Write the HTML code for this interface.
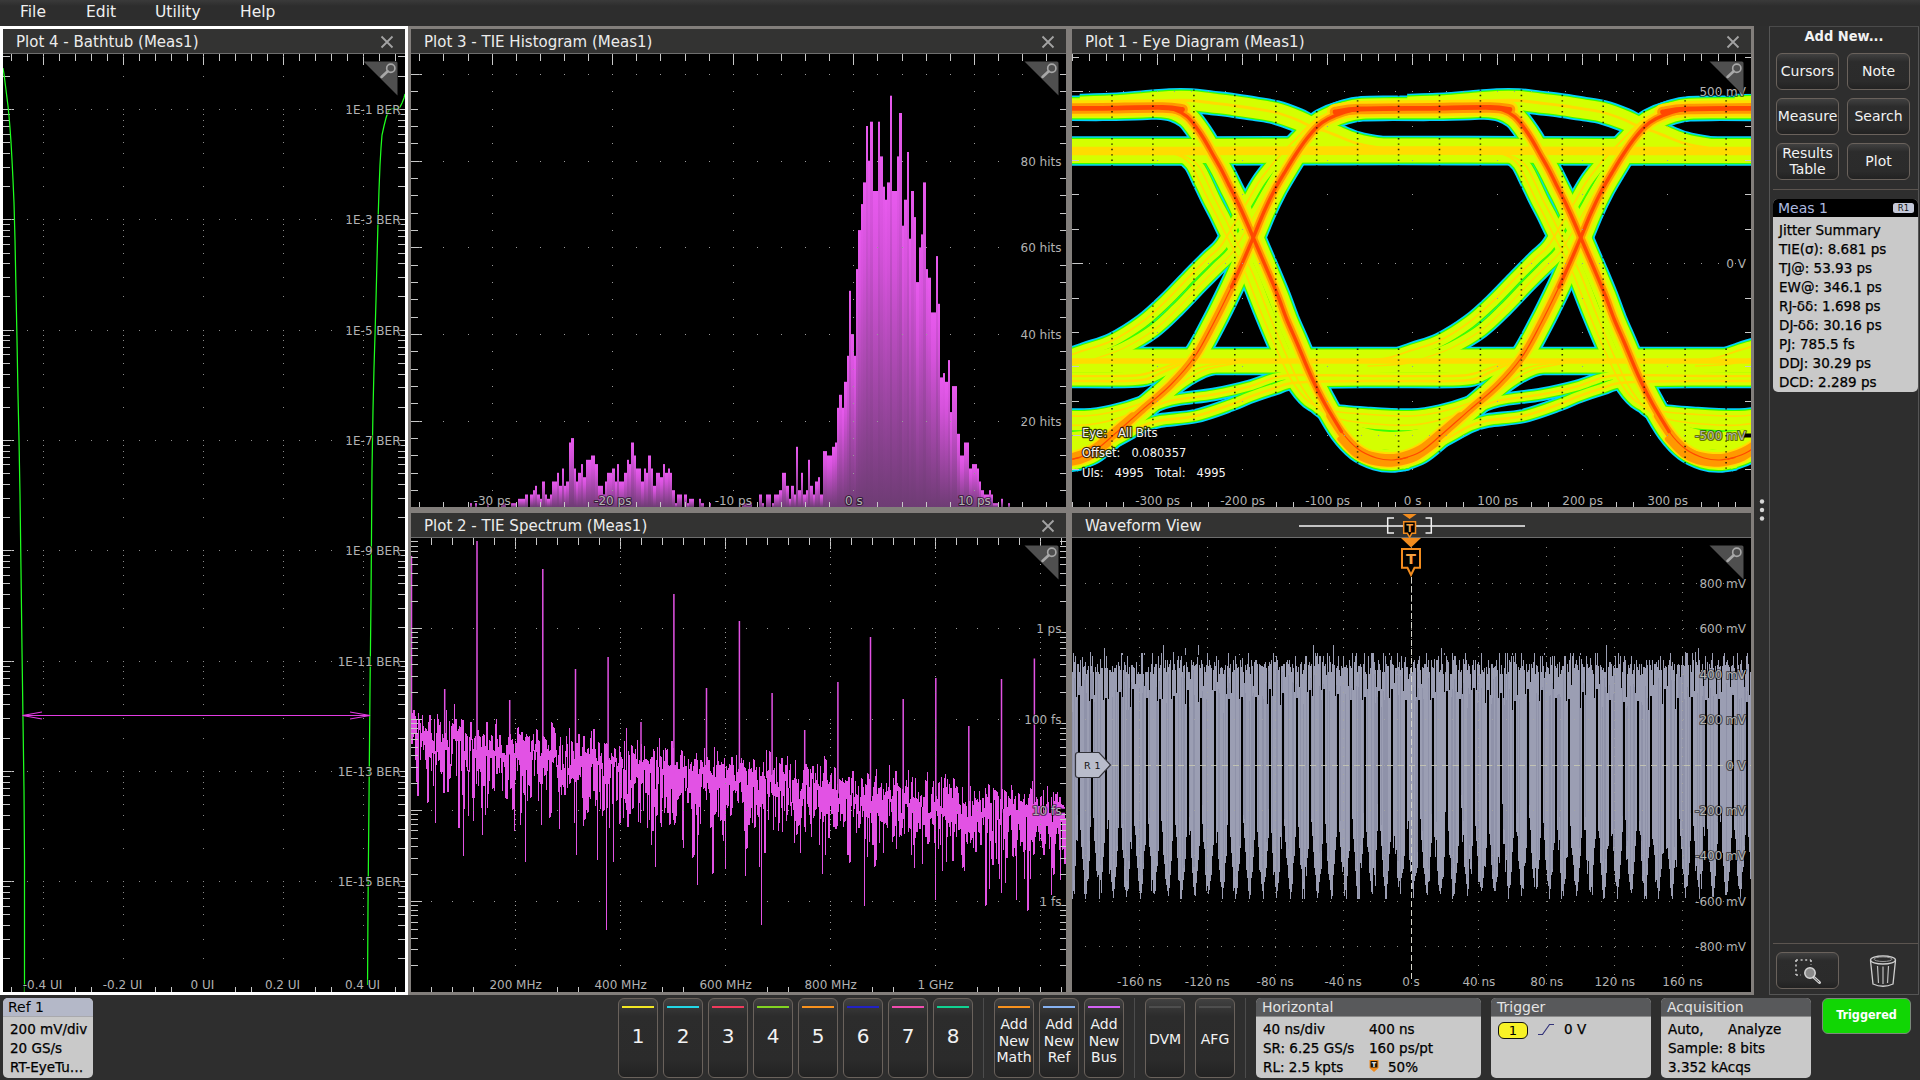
<!DOCTYPE html><html><head><meta charset="utf-8"><title>Scope</title><style>
*{box-sizing:border-box;margin:0;padding:0}
html,body{width:1920px;height:1080px;overflow:hidden;background:#2e2e2e;font-family:"DejaVu Sans","Liberation Sans",sans-serif;color:#e6e6e6}
.abs{position:absolute}
#menubar{position:absolute;left:0;top:0;width:1920px;height:26px;background:linear-gradient(#3a3a3a 0,#2d2d2d 6px,#2d2d2d 100%)}
#menubar span{position:absolute;top:2px;font-size:15.500px;line-height:20px;color:#f0f0f0}
.panel{position:absolute;border:3px solid #827e7b;background:#000}
.panel.sel{border-color:#fff}
.tbar{position:absolute;left:0;top:0;right:0;height:25px;background:#333332;border-bottom:1px solid #6e6e6e;font-size:15px;line-height:26px;color:#ececec;padding-left:13px;white-space:nowrap}
.tbar .x{position:absolute;right:11px;top:6px;width:14px;height:14px}
.parea{position:absolute;left:0;top:25px;right:0;bottom:0;background:#000;overflow:hidden}
.parea svg{position:absolute;left:0;top:0}
.parea svg.zi{position:absolute;left:auto;right:7px;top:7px;width:35px;height:35px}
.btn{position:absolute;border:1px solid #6a625c;border-radius:6px;background:linear-gradient(#414141 0,#2c2c2c 22%,#2b2b2b 78%,#222 100%);color:#f2f2f2;text-align:center}
.chb{top:998px;width:40px;height:80px}
.chb i{position:absolute;left:3px;right:3px;top:7px;height:2px;display:block}
.chb b{position:absolute;left:0;right:0;top:25px;font-weight:normal;font-size:20px;line-height:24px}
.chb em{position:absolute;left:-3px;right:-3px;top:17px;font-style:normal;font-size:14px;line-height:16.5px}
.chb u{position:absolute;left:-3px;right:-3px;top:31px;text-decoration:none;font-size:14px;line-height:18px}
.vsep{position:absolute;top:998px;width:1px;height:80px;background:#4c4c4c}
.badge{position:absolute;border-radius:5px;background:#c9c9c9;color:#000;overflow:hidden}
.badge h4{position:absolute;left:0;right:0;top:0;height:19px;background:#58595b;color:#e4e4e4;font-weight:normal;font-size:14px;line-height:18px;padding-left:6px;border-bottom:1px solid #8a8a8a}
.badge p{position:absolute;font-size:13.500px;line-height:19px;white-space:nowrap;color:#000;-webkit-text-stroke:0.25px #000}
#rp{position:absolute;left:1769px;top:26px;width:150px;height:969px;border:1px solid #555;border-top-color:#4a4a4a}
#rp .rb{font-size:14px;line-height:16px}
</style></head><body>
<div id="menubar"><span style="left:20px">File</span><span style="left:86px">Edit</span><span style="left:155px">Utility</span><span style="left:240px">Help</span></div>
<div class="panel sel" style="left:0px;top:26px;width:408px;height:969px"><div class="tbar">Plot 4 - Bathtub (Meas1)<svg class="x" viewBox="0 0 14 14"><path d="M1.5 1.5 L12.5 12.5 M12.5 1.5 L1.5 12.5" stroke="#a3a3a3" stroke-width="1.8" fill="none"/></svg></div><div class="parea"><svg width="402" height="938" viewBox="0 0 402 938"><path d="M8.5 0L8.5 7M8.5 932.5L8.5 938M24.5 0L24.5 7M24.5 932.5L24.5 938M40.5 0L40.5 11M40.5 932.5L40.5 938M56.5 0L56.5 7M56.5 932.5L56.5 938M72.5 0L72.5 7M72.5 932.5L72.5 938M88.5 0L88.5 7M88.5 932.5L88.5 938M104.5 0L104.5 7M104.5 932.5L104.5 938M120.5 0L120.5 11M120.5 932.5L120.5 938M136.5 0L136.5 7M136.5 932.5L136.5 938M152.5 0L152.5 7M152.5 932.5L152.5 938M168.5 0L168.5 7M168.5 932.5L168.5 938M184.5 0L184.5 7M184.5 932.5L184.5 938M200.5 0L200.5 11M200.5 932.5L200.5 938M216.5 0L216.5 7M216.5 932.5L216.5 938M232.5 0L232.5 7M232.5 932.5L232.5 938M248.5 0L248.5 7M248.5 932.5L248.5 938M264.5 0L264.5 7M264.5 932.5L264.5 938M280.5 0L280.5 11M280.5 932.5L280.5 938M296.5 0L296.5 7M296.5 932.5L296.5 938M312.5 0L312.5 7M312.5 932.5L312.5 938M328.5 0L328.5 7M328.5 932.5L328.5 938M344.5 0L344.5 7M344.5 932.5L344.5 938M360.5 0L360.5 11M360.5 932.5L360.5 938M376.5 0L376.5 7M376.5 932.5L376.5 938M392.5 0L392.5 7M392.5 932.5L392.5 938M0 2.9L7 2.9M395 2.9L402 2.9M0 22.3L7 22.3M395 22.3L402 22.3M0 60.5L7 60.5M395 60.5L402 60.5M0 66.2L7 66.2M395 66.2L402 66.2M0 72.6L7 72.6M395 72.6L402 72.6M0 80L7 80M395 80L402 80M0 88.7L7 88.7M395 88.7L402 88.7M0 99.4L7 99.4M395 99.4L402 99.4M0 113.2L7 113.2M395 113.2L402 113.2M0 132.6L7 132.6M395 132.6L402 132.6M0 170.8L7 170.8M395 170.8L402 170.8M0 176.5L7 176.5M395 176.5L402 176.5M0 182.9L7 182.9M395 182.9L402 182.9M0 190.3L7 190.3M395 190.3L402 190.3M0 199L7 199M395 199L402 199M0 209.7L7 209.7M395 209.7L402 209.7M0 223.5L7 223.5M395 223.5L402 223.5M0 242.9L7 242.9M395 242.9L402 242.9M0 281.1L7 281.1M395 281.1L402 281.1M0 286.8L7 286.8M395 286.8L402 286.8M0 293.2L7 293.2M395 293.2L402 293.2M0 300.6L7 300.6M395 300.6L402 300.6M0 309.3L7 309.3M395 309.3L402 309.3M0 320L7 320M395 320L402 320M0 333.8L7 333.8M395 333.8L402 333.8M0 353.2L7 353.2M395 353.2L402 353.2M0 391.4L7 391.4M395 391.4L402 391.4M0 397.1L7 397.1M395 397.1L402 397.1M0 403.5L7 403.5M395 403.5L402 403.5M0 410.9L7 410.9M395 410.9L402 410.9M0 419.6L7 419.6M395 419.6L402 419.6M0 430.3L7 430.3M395 430.3L402 430.3M0 444.1L7 444.1M395 444.1L402 444.1M0 463.5L7 463.5M395 463.5L402 463.5M0 501.7L7 501.7M395 501.7L402 501.7M0 507.4L7 507.4M395 507.4L402 507.4M0 513.8L7 513.8M395 513.8L402 513.8M0 521.2L7 521.2M395 521.2L402 521.2M0 529.9L7 529.9M395 529.9L402 529.9M0 540.6L7 540.6M395 540.6L402 540.6M0 554.4L7 554.4M395 554.4L402 554.4M0 573.8L7 573.8M395 573.8L402 573.8M0 612L7 612M395 612L402 612M0 617.7L7 617.7M395 617.7L402 617.7M0 624.1L7 624.1M395 624.1L402 624.1M0 631.5L7 631.5M395 631.5L402 631.5M0 640.2L7 640.2M395 640.2L402 640.2M0 650.9L7 650.9M395 650.9L402 650.9M0 664.7L7 664.7M395 664.7L402 664.7M0 684.1L7 684.1M395 684.1L402 684.1M0 722.3L7 722.3M395 722.3L402 722.3M0 728L7 728M395 728L402 728M0 734.4L7 734.4M395 734.4L402 734.4M0 741.8L7 741.8M395 741.8L402 741.8M0 750.5L7 750.5M395 750.5L402 750.5M0 761.2L7 761.2M395 761.2L402 761.2M0 775L7 775M395 775L402 775M0 794.4L7 794.4M395 794.4L402 794.4M0 832.6L7 832.6M395 832.6L402 832.6M0 838.3L7 838.3M395 838.3L402 838.3M0 844.7L7 844.7M395 844.7L402 844.7M0 852.1L7 852.1M395 852.1L402 852.1M0 860.8L7 860.8M395 860.8L402 860.8M0 871.5L7 871.5M395 871.5L402 871.5M0 885.3L7 885.3M395 885.3L402 885.3M0 904.7L7 904.7M395 904.7L402 904.7M0 55.5L11 55.5M391 55.5L402 55.5M0 165.8L11 165.8M391 165.8L402 165.8M0 276.1L11 276.1M391 276.1L402 276.1M0 386.4L11 386.4M391 386.4L402 386.4M0 496.7L11 496.7M391 496.7L402 496.7M0 607L11 607M391 607L402 607M0 717.3L11 717.3M391 717.3L402 717.3M0 827.6L11 827.6M391 827.6L402 827.6" stroke="#c8c8c8" stroke-width="1" fill="none" shape-rendering="crispEdges"/><path d="M8 55.5h1M24 55.5h1M40 55.5h1M56 55.5h1M72 55.5h1M88 55.5h1M104 55.5h1M120 55.5h1M136 55.5h1M152 55.5h1M168 55.5h1M184 55.5h1M200 55.5h1M216 55.5h1M232 55.5h1M248 55.5h1M264 55.5h1M280 55.5h1M296 55.5h1M312 55.5h1M328 55.5h1M344 55.5h1M360 55.5h1M376 55.5h1M392 55.5h1M8 165.8h1M24 165.8h1M40 165.8h1M56 165.8h1M72 165.8h1M88 165.8h1M104 165.8h1M120 165.8h1M136 165.8h1M152 165.8h1M168 165.8h1M184 165.8h1M200 165.8h1M216 165.8h1M232 165.8h1M248 165.8h1M264 165.8h1M280 165.8h1M296 165.8h1M312 165.8h1M328 165.8h1M344 165.8h1M360 165.8h1M376 165.8h1M392 165.8h1M8 276.1h1M24 276.1h1M40 276.1h1M56 276.1h1M72 276.1h1M88 276.1h1M104 276.1h1M120 276.1h1M136 276.1h1M152 276.1h1M168 276.1h1M184 276.1h1M200 276.1h1M216 276.1h1M232 276.1h1M248 276.1h1M264 276.1h1M280 276.1h1M296 276.1h1M312 276.1h1M328 276.1h1M344 276.1h1M360 276.1h1M376 276.1h1M392 276.1h1M8 386.4h1M24 386.4h1M40 386.4h1M56 386.4h1M72 386.4h1M88 386.4h1M104 386.4h1M120 386.4h1M136 386.4h1M152 386.4h1M168 386.4h1M184 386.4h1M200 386.4h1M216 386.4h1M232 386.4h1M248 386.4h1M264 386.4h1M280 386.4h1M296 386.4h1M312 386.4h1M328 386.4h1M344 386.4h1M360 386.4h1M376 386.4h1M392 386.4h1M8 496.7h1M24 496.7h1M40 496.7h1M56 496.7h1M72 496.7h1M88 496.7h1M104 496.7h1M120 496.7h1M136 496.7h1M152 496.7h1M168 496.7h1M184 496.7h1M200 496.7h1M216 496.7h1M232 496.7h1M248 496.7h1M264 496.7h1M280 496.7h1M296 496.7h1M312 496.7h1M328 496.7h1M344 496.7h1M360 496.7h1M376 496.7h1M392 496.7h1M8 607h1M24 607h1M40 607h1M56 607h1M72 607h1M88 607h1M104 607h1M120 607h1M136 607h1M152 607h1M168 607h1M184 607h1M200 607h1M216 607h1M232 607h1M248 607h1M264 607h1M280 607h1M296 607h1M312 607h1M328 607h1M344 607h1M360 607h1M376 607h1M392 607h1M8 717.3h1M24 717.3h1M40 717.3h1M56 717.3h1M72 717.3h1M88 717.3h1M104 717.3h1M120 717.3h1M136 717.3h1M152 717.3h1M168 717.3h1M184 717.3h1M200 717.3h1M216 717.3h1M232 717.3h1M248 717.3h1M264 717.3h1M280 717.3h1M296 717.3h1M312 717.3h1M328 717.3h1M344 717.3h1M360 717.3h1M376 717.3h1M392 717.3h1M8 827.6h1M24 827.6h1M40 827.6h1M56 827.6h1M72 827.6h1M88 827.6h1M104 827.6h1M120 827.6h1M136 827.6h1M152 827.6h1M168 827.6h1M184 827.6h1M200 827.6h1M216 827.6h1M232 827.6h1M248 827.6h1M264 827.6h1M280 827.6h1M296 827.6h1M312 827.6h1M328 827.6h1M344 827.6h1M360 827.6h1M376 827.6h1M392 827.6h1M40 2.9h1M40 22.3h1M40 60.5h1M40 66.2h1M40 72.6h1M40 80h1M40 88.7h1M40 99.4h1M40 113.2h1M40 132.6h1M40 170.8h1M40 176.5h1M40 182.9h1M40 190.3h1M40 199h1M40 209.7h1M40 223.5h1M40 242.9h1M40 281.1h1M40 286.8h1M40 293.2h1M40 300.6h1M40 309.3h1M40 320h1M40 333.8h1M40 353.2h1M40 391.4h1M40 397.1h1M40 403.5h1M40 410.9h1M40 419.6h1M40 430.3h1M40 444.1h1M40 463.5h1M40 501.7h1M40 507.4h1M40 513.8h1M40 521.2h1M40 529.9h1M40 540.6h1M40 554.4h1M40 573.8h1M40 612h1M40 617.7h1M40 624.1h1M40 631.5h1M40 640.2h1M40 650.9h1M40 664.7h1M40 684.1h1M40 722.3h1M40 728h1M40 734.4h1M40 741.8h1M40 750.5h1M40 761.2h1M40 775h1M40 794.4h1M40 832.6h1M40 838.3h1M40 844.7h1M40 852.1h1M40 860.8h1M40 871.5h1M40 885.3h1M40 904.7h1M120 2.9h1M120 22.3h1M120 60.5h1M120 66.2h1M120 72.6h1M120 80h1M120 88.7h1M120 99.4h1M120 113.2h1M120 132.6h1M120 170.8h1M120 176.5h1M120 182.9h1M120 190.3h1M120 199h1M120 209.7h1M120 223.5h1M120 242.9h1M120 281.1h1M120 286.8h1M120 293.2h1M120 300.6h1M120 309.3h1M120 320h1M120 333.8h1M120 353.2h1M120 391.4h1M120 397.1h1M120 403.5h1M120 410.9h1M120 419.6h1M120 430.3h1M120 444.1h1M120 463.5h1M120 501.7h1M120 507.4h1M120 513.8h1M120 521.2h1M120 529.9h1M120 540.6h1M120 554.4h1M120 573.8h1M120 612h1M120 617.7h1M120 624.1h1M120 631.5h1M120 640.2h1M120 650.9h1M120 664.7h1M120 684.1h1M120 722.3h1M120 728h1M120 734.4h1M120 741.8h1M120 750.5h1M120 761.2h1M120 775h1M120 794.4h1M120 832.6h1M120 838.3h1M120 844.7h1M120 852.1h1M120 860.8h1M120 871.5h1M120 885.3h1M120 904.7h1M200 2.9h1M200 22.3h1M200 60.5h1M200 66.2h1M200 72.6h1M200 80h1M200 88.7h1M200 99.4h1M200 113.2h1M200 132.6h1M200 170.8h1M200 176.5h1M200 182.9h1M200 190.3h1M200 199h1M200 209.7h1M200 223.5h1M200 242.9h1M200 281.1h1M200 286.8h1M200 293.2h1M200 300.6h1M200 309.3h1M200 320h1M200 333.8h1M200 353.2h1M200 391.4h1M200 397.1h1M200 403.5h1M200 410.9h1M200 419.6h1M200 430.3h1M200 444.1h1M200 463.5h1M200 501.7h1M200 507.4h1M200 513.8h1M200 521.2h1M200 529.9h1M200 540.6h1M200 554.4h1M200 573.8h1M200 612h1M200 617.7h1M200 624.1h1M200 631.5h1M200 640.2h1M200 650.9h1M200 664.7h1M200 684.1h1M200 722.3h1M200 728h1M200 734.4h1M200 741.8h1M200 750.5h1M200 761.2h1M200 775h1M200 794.4h1M200 832.6h1M200 838.3h1M200 844.7h1M200 852.1h1M200 860.8h1M200 871.5h1M200 885.3h1M200 904.7h1M280 2.9h1M280 22.3h1M280 60.5h1M280 66.2h1M280 72.6h1M280 80h1M280 88.7h1M280 99.4h1M280 113.2h1M280 132.6h1M280 170.8h1M280 176.5h1M280 182.9h1M280 190.3h1M280 199h1M280 209.7h1M280 223.5h1M280 242.9h1M280 281.1h1M280 286.8h1M280 293.2h1M280 300.6h1M280 309.3h1M280 320h1M280 333.8h1M280 353.2h1M280 391.4h1M280 397.1h1M280 403.5h1M280 410.9h1M280 419.6h1M280 430.3h1M280 444.1h1M280 463.5h1M280 501.7h1M280 507.4h1M280 513.8h1M280 521.2h1M280 529.9h1M280 540.6h1M280 554.4h1M280 573.8h1M280 612h1M280 617.7h1M280 624.1h1M280 631.5h1M280 640.2h1M280 650.9h1M280 664.7h1M280 684.1h1M280 722.3h1M280 728h1M280 734.4h1M280 741.8h1M280 750.5h1M280 761.2h1M280 775h1M280 794.4h1M280 832.6h1M280 838.3h1M280 844.7h1M280 852.1h1M280 860.8h1M280 871.5h1M280 885.3h1M280 904.7h1M360 2.9h1M360 22.3h1M360 60.5h1M360 66.2h1M360 72.6h1M360 80h1M360 88.7h1M360 99.4h1M360 113.2h1M360 132.6h1M360 170.8h1M360 176.5h1M360 182.9h1M360 190.3h1M360 199h1M360 209.7h1M360 223.5h1M360 242.9h1M360 281.1h1M360 286.8h1M360 293.2h1M360 300.6h1M360 309.3h1M360 320h1M360 333.8h1M360 353.2h1M360 391.4h1M360 397.1h1M360 403.5h1M360 410.9h1M360 419.6h1M360 430.3h1M360 444.1h1M360 463.5h1M360 501.7h1M360 507.4h1M360 513.8h1M360 521.2h1M360 529.9h1M360 540.6h1M360 554.4h1M360 573.8h1M360 612h1M360 617.7h1M360 624.1h1M360 631.5h1M360 640.2h1M360 650.9h1M360 664.7h1M360 684.1h1M360 722.3h1M360 728h1M360 734.4h1M360 741.8h1M360 750.5h1M360 761.2h1M360 775h1M360 794.4h1M360 832.6h1M360 838.3h1M360 844.7h1M360 852.1h1M360 860.8h1M360 871.5h1M360 885.3h1M360 904.7h1" stroke="#8c8c8c" stroke-width="1" fill="none" opacity="1" shape-rendering="crispEdges"/><path d="M0 14 L1 20 L2 28 L3 36 L4 44 L5 52 L6 62 L7 74 L8 88 L9 106 L10 126 L11 149 L12 186 L13 236 L14 286 L15 341 L16 386 L17 441 L18 516 L19 596 L20 666 L21 736 L21.5 806 L21.5 938" stroke="#1eff1e" stroke-width="1.25" fill="none"/><path d="M402 40 L401 44 L399 49 L397 53 L395 54.5 L387 55 L385 58 L383 64 L381 72 L379 81 L378 94 L377 111 L376 136 L375 168 L374 206 L373 246 L372 281 L371 314 L370 356 L369 416 L368 546 L367 636 L366 746 L365 851 L364.5 938" stroke="#1eff1e" stroke-width="1.25" fill="none"/><path d="M19.5 661.5 H367 M39 658.0 L19.500 661.5 L39 665.0 M347 658.0 L367 661.5 L347 665.0" stroke="#e23ce2" stroke-width="1.1" fill="none"/><text x="397.5" y="60" font-size="12" font-family="DejaVu Sans, sans-serif" fill="#b2b2b2" text-anchor="end" stroke="#000" stroke-width="2.2" stroke-opacity="0.55" paint-order="stroke" stroke-linejoin="round">1E-1 BER</text><text x="397.5" y="170.3" font-size="12" font-family="DejaVu Sans, sans-serif" fill="#b2b2b2" text-anchor="end" stroke="#000" stroke-width="2.2" stroke-opacity="0.55" paint-order="stroke" stroke-linejoin="round">1E-3 BER</text><text x="397.5" y="280.6" font-size="12" font-family="DejaVu Sans, sans-serif" fill="#b2b2b2" text-anchor="end" stroke="#000" stroke-width="2.2" stroke-opacity="0.55" paint-order="stroke" stroke-linejoin="round">1E-5 BER</text><text x="397.5" y="390.9" font-size="12" font-family="DejaVu Sans, sans-serif" fill="#b2b2b2" text-anchor="end" stroke="#000" stroke-width="2.2" stroke-opacity="0.55" paint-order="stroke" stroke-linejoin="round">1E-7 BER</text><text x="397.5" y="501.2" font-size="12" font-family="DejaVu Sans, sans-serif" fill="#b2b2b2" text-anchor="end" stroke="#000" stroke-width="2.2" stroke-opacity="0.55" paint-order="stroke" stroke-linejoin="round">1E-9 BER</text><text x="397.5" y="611.5" font-size="12" font-family="DejaVu Sans, sans-serif" fill="#b2b2b2" text-anchor="end" stroke="#000" stroke-width="2.2" stroke-opacity="0.55" paint-order="stroke" stroke-linejoin="round">1E-11 BER</text><text x="397.5" y="721.8" font-size="12" font-family="DejaVu Sans, sans-serif" fill="#b2b2b2" text-anchor="end" stroke="#000" stroke-width="2.2" stroke-opacity="0.55" paint-order="stroke" stroke-linejoin="round">1E-13 BER</text><text x="397.5" y="832.1" font-size="12" font-family="DejaVu Sans, sans-serif" fill="#b2b2b2" text-anchor="end" stroke="#000" stroke-width="2.2" stroke-opacity="0.55" paint-order="stroke" stroke-linejoin="round">1E-15 BER</text><rect x="21.5" y="931" width="38" height="7" fill="#000"/><text x="39.5" y="935" font-size="12" font-family="DejaVu Sans, sans-serif" fill="#b2b2b2" text-anchor="middle" stroke="#000" stroke-width="2.2" stroke-opacity="0.55" paint-order="stroke" stroke-linejoin="round">-0.4 UI</text><rect x="101.5" y="931" width="38" height="7" fill="#000"/><text x="119.5" y="935" font-size="12" font-family="DejaVu Sans, sans-serif" fill="#b2b2b2" text-anchor="middle" stroke="#000" stroke-width="2.2" stroke-opacity="0.55" paint-order="stroke" stroke-linejoin="round">-0.2 UI</text><rect x="181.5" y="931" width="38" height="7" fill="#000"/><text x="199.5" y="935" font-size="12" font-family="DejaVu Sans, sans-serif" fill="#b2b2b2" text-anchor="middle" stroke="#000" stroke-width="2.2" stroke-opacity="0.55" paint-order="stroke" stroke-linejoin="round">0 UI</text><rect x="261.5" y="931" width="38" height="7" fill="#000"/><text x="279.5" y="935" font-size="12" font-family="DejaVu Sans, sans-serif" fill="#b2b2b2" text-anchor="middle" stroke="#000" stroke-width="2.2" stroke-opacity="0.55" paint-order="stroke" stroke-linejoin="round">0.2 UI</text><rect x="341.5" y="931" width="38" height="7" fill="#000"/><text x="359.5" y="935" font-size="12" font-family="DejaVu Sans, sans-serif" fill="#b2b2b2" text-anchor="middle" stroke="#000" stroke-width="2.2" stroke-opacity="0.55" paint-order="stroke" stroke-linejoin="round">0.4 UI</text></svg><svg class="zi" viewBox="0 0 34 34"><path d="M0.5 0.5 H32 Q33.5 0.5 33.5 2 V33.5 Z" fill="#4f4f4f"/><circle cx="27" cy="7" r="4" fill="none" stroke="#a8a8a8" stroke-width="1.6"/><path d="M24 10 L18 15.5" stroke="#a8a8a8" stroke-width="2.6" stroke-linecap="round"/></svg></div></div>
<div class="panel" style="left:408px;top:26px;width:661px;height:484px"><div class="tbar">Plot 3 - TIE Histogram (Meas1)<svg class="x" viewBox="0 0 14 14"><path d="M1.5 1.5 L12.5 12.5 M12.5 1.5 L1.5 12.5" stroke="#a3a3a3" stroke-width="1.8" fill="none"/></svg></div><div class="parea"><svg width="655" height="453" viewBox="0 0 655 453"><defs><linearGradient id="hg" x1="0" y1="0" x2="0" y2="1"><stop offset="0" stop-color="#e85aee"/><stop offset="0.25" stop-color="#d452da"/><stop offset="1" stop-color="#6e3c74"/></linearGradient></defs><rect x="59" y="449.2" width="2" height="3.8" fill="url(#hg)"/><rect x="64" y="449.2" width="2" height="3.8" fill="url(#hg)"/><rect x="76" y="449.2" width="2" height="3.8" fill="url(#hg)"/><rect x="90" y="449.2" width="3" height="3.8" fill="url(#hg)"/><rect x="93" y="449.2" width="2" height="3.8" fill="url(#hg)"/><rect x="100" y="449.2" width="2" height="3.8" fill="url(#hg)"/><rect x="102" y="449.2" width="3" height="3.8" fill="url(#hg)"/><rect x="107" y="444.8" width="3" height="8.2" fill="url(#hg)"/><rect x="110" y="444.8" width="2" height="8.2" fill="url(#hg)"/><rect x="112" y="444.8" width="2" height="8.2" fill="url(#hg)"/><rect x="114" y="440.5" width="3" height="12.5" fill="url(#hg)"/><rect x="119" y="440.5" width="3" height="12.5" fill="url(#hg)"/><rect x="122" y="436.2" width="2" height="16.8" fill="url(#hg)"/><rect x="124" y="431.8" width="2" height="21.2" fill="url(#hg)"/><rect x="126" y="440.5" width="3" height="12.5" fill="url(#hg)"/><rect x="129" y="444.8" width="2" height="8.2" fill="url(#hg)"/><rect x="131" y="427.5" width="3" height="25.5" fill="url(#hg)"/><rect x="134" y="440.5" width="2" height="12.5" fill="url(#hg)"/><rect x="136" y="444.8" width="3" height="8.2" fill="url(#hg)"/><rect x="139" y="440.5" width="2" height="12.5" fill="url(#hg)"/><rect x="141" y="427.5" width="2" height="25.5" fill="url(#hg)"/><rect x="143" y="427.5" width="3" height="25.5" fill="url(#hg)"/><rect x="146" y="418.8" width="2" height="34.2" fill="url(#hg)"/><rect x="148" y="431.8" width="3" height="21.2" fill="url(#hg)"/><rect x="151" y="414.5" width="2" height="38.5" fill="url(#hg)"/><rect x="153" y="431.8" width="2" height="21.2" fill="url(#hg)"/><rect x="155" y="427.5" width="3" height="25.5" fill="url(#hg)"/><rect x="158" y="388.5" width="2" height="64.5" fill="url(#hg)"/><rect x="160" y="384.1" width="3" height="68.9" fill="url(#hg)"/><rect x="163" y="414.5" width="2" height="38.5" fill="url(#hg)"/><rect x="165" y="427.5" width="2" height="25.5" fill="url(#hg)"/><rect x="167" y="418.8" width="3" height="34.2" fill="url(#hg)"/><rect x="170" y="410.1" width="2" height="42.9" fill="url(#hg)"/><rect x="172" y="423.2" width="3" height="29.8" fill="url(#hg)"/><rect x="175" y="405.8" width="2" height="47.2" fill="url(#hg)"/><rect x="177" y="405.8" width="3" height="47.2" fill="url(#hg)"/><rect x="180" y="401.5" width="2" height="51.5" fill="url(#hg)"/><rect x="182" y="401.5" width="2" height="51.5" fill="url(#hg)"/><rect x="184" y="410.1" width="3" height="42.9" fill="url(#hg)"/><rect x="187" y="431.8" width="2" height="21.2" fill="url(#hg)"/><rect x="189" y="431.8" width="3" height="21.2" fill="url(#hg)"/><rect x="192" y="440.5" width="2" height="12.5" fill="url(#hg)"/><rect x="194" y="427.5" width="2" height="25.5" fill="url(#hg)"/><rect x="196" y="418.8" width="3" height="34.2" fill="url(#hg)"/><rect x="199" y="418.8" width="2" height="34.2" fill="url(#hg)"/><rect x="201" y="414.5" width="3" height="38.5" fill="url(#hg)"/><rect x="204" y="427.5" width="2" height="25.5" fill="url(#hg)"/><rect x="206" y="410.1" width="2" height="42.9" fill="url(#hg)"/><rect x="208" y="427.5" width="3" height="25.5" fill="url(#hg)"/><rect x="211" y="427.5" width="2" height="25.5" fill="url(#hg)"/><rect x="213" y="418.8" width="3" height="34.2" fill="url(#hg)"/><rect x="216" y="405.8" width="2" height="47.2" fill="url(#hg)"/><rect x="218" y="410.1" width="2" height="42.9" fill="url(#hg)"/><rect x="220" y="388.5" width="3" height="64.5" fill="url(#hg)"/><rect x="223" y="401.5" width="2" height="51.5" fill="url(#hg)"/><rect x="225" y="414.5" width="3" height="38.5" fill="url(#hg)"/><rect x="228" y="414.5" width="2" height="38.5" fill="url(#hg)"/><rect x="230" y="427.5" width="3" height="25.5" fill="url(#hg)"/><rect x="233" y="414.5" width="2" height="38.5" fill="url(#hg)"/><rect x="235" y="418.8" width="2" height="34.2" fill="url(#hg)"/><rect x="237" y="401.5" width="3" height="51.5" fill="url(#hg)"/><rect x="240" y="414.5" width="2" height="38.5" fill="url(#hg)"/><rect x="242" y="431.8" width="3" height="21.2" fill="url(#hg)"/><rect x="245" y="418.8" width="2" height="34.2" fill="url(#hg)"/><rect x="247" y="418.8" width="2" height="34.2" fill="url(#hg)"/><rect x="249" y="423.2" width="3" height="29.8" fill="url(#hg)"/><rect x="252" y="410.1" width="2" height="42.9" fill="url(#hg)"/><rect x="254" y="418.8" width="3" height="34.2" fill="url(#hg)"/><rect x="257" y="414.5" width="2" height="38.5" fill="url(#hg)"/><rect x="259" y="418.8" width="2" height="34.2" fill="url(#hg)"/><rect x="261" y="436.2" width="3" height="16.8" fill="url(#hg)"/><rect x="264" y="449.2" width="2" height="3.8" fill="url(#hg)"/><rect x="266" y="440.5" width="3" height="12.5" fill="url(#hg)"/><rect x="269" y="440.5" width="2" height="12.5" fill="url(#hg)"/><rect x="273" y="440.5" width="3" height="12.5" fill="url(#hg)"/><rect x="276" y="449.2" width="2" height="3.8" fill="url(#hg)"/><rect x="278" y="444.8" width="3" height="8.2" fill="url(#hg)"/><rect x="281" y="444.8" width="2" height="8.2" fill="url(#hg)"/><rect x="288" y="444.8" width="2" height="8.2" fill="url(#hg)"/><rect x="290" y="449.2" width="3" height="3.8" fill="url(#hg)"/><rect x="298" y="449.2" width="2" height="3.8" fill="url(#hg)"/><rect x="331" y="449.2" width="3" height="3.8" fill="url(#hg)"/><rect x="334" y="449.2" width="2" height="3.8" fill="url(#hg)"/><rect x="336" y="449.2" width="3" height="3.8" fill="url(#hg)"/><rect x="339" y="449.2" width="2" height="3.8" fill="url(#hg)"/><rect x="348" y="440.5" width="3" height="12.5" fill="url(#hg)"/><rect x="351" y="449.2" width="2" height="3.8" fill="url(#hg)"/><rect x="355" y="440.5" width="3" height="12.5" fill="url(#hg)"/><rect x="358" y="440.5" width="2" height="12.5" fill="url(#hg)"/><rect x="361" y="449.2" width="2" height="3.8" fill="url(#hg)"/><rect x="363" y="440.5" width="3" height="12.5" fill="url(#hg)"/><rect x="366" y="440.5" width="2" height="12.5" fill="url(#hg)"/><rect x="368" y="436.2" width="3" height="16.8" fill="url(#hg)"/><rect x="371" y="418.8" width="2" height="34.2" fill="url(#hg)"/><rect x="373" y="418.8" width="2" height="34.2" fill="url(#hg)"/><rect x="375" y="431.8" width="3" height="21.2" fill="url(#hg)"/><rect x="378" y="444.8" width="2" height="8.2" fill="url(#hg)"/><rect x="380" y="431.8" width="3" height="21.2" fill="url(#hg)"/><rect x="383" y="440.5" width="2" height="12.5" fill="url(#hg)"/><rect x="385" y="392.8" width="2" height="60.2" fill="url(#hg)"/><rect x="387" y="436.2" width="3" height="16.8" fill="url(#hg)"/><rect x="390" y="418.8" width="2" height="34.2" fill="url(#hg)"/><rect x="392" y="440.5" width="3" height="12.5" fill="url(#hg)"/><rect x="395" y="436.2" width="2" height="16.8" fill="url(#hg)"/><rect x="397" y="405.8" width="2" height="47.2" fill="url(#hg)"/><rect x="399" y="431.8" width="3" height="21.2" fill="url(#hg)"/><rect x="402" y="440.5" width="2" height="12.5" fill="url(#hg)"/><rect x="404" y="427.5" width="3" height="25.5" fill="url(#hg)"/><rect x="407" y="423.2" width="2" height="29.8" fill="url(#hg)"/><rect x="409" y="440.5" width="3" height="12.5" fill="url(#hg)"/><rect x="412" y="397.1" width="2" height="55.9" fill="url(#hg)"/><rect x="414" y="397.1" width="2" height="55.9" fill="url(#hg)"/><rect x="416" y="401.5" width="3" height="51.5" fill="url(#hg)"/><rect x="419" y="401.5" width="2" height="51.5" fill="url(#hg)"/><rect x="421" y="392.8" width="3" height="60.2" fill="url(#hg)"/><rect x="424" y="388.5" width="2" height="64.5" fill="url(#hg)"/><rect x="426" y="353.8" width="2" height="99.2" fill="url(#hg)"/><rect x="428" y="340.8" width="3" height="112.2" fill="url(#hg)"/><rect x="431" y="353.8" width="2" height="99.2" fill="url(#hg)"/><rect x="433" y="327.8" width="3" height="125.2" fill="url(#hg)"/><rect x="436" y="301.8" width="2" height="151.2" fill="url(#hg)"/><rect x="438" y="236.8" width="2" height="216.2" fill="url(#hg)"/><rect x="440" y="280.1" width="3" height="172.9" fill="url(#hg)"/><rect x="443" y="301.8" width="2" height="151.2" fill="url(#hg)"/><rect x="445" y="215.1" width="2" height="237.9" fill="url(#hg)"/><rect x="447" y="176.1" width="3" height="276.9" fill="url(#hg)"/><rect x="450" y="150.1" width="2" height="302.9" fill="url(#hg)"/><rect x="452" y="128.4" width="3" height="324.6" fill="url(#hg)"/><rect x="455" y="72" width="2" height="381" fill="url(#hg)"/><rect x="457" y="106.7" width="2" height="346.3" fill="url(#hg)"/><rect x="459" y="67.7" width="3" height="385.3" fill="url(#hg)"/><rect x="462" y="137" width="2" height="316" fill="url(#hg)"/><rect x="464" y="137" width="3" height="316" fill="url(#hg)"/><rect x="467" y="67.7" width="2" height="385.3" fill="url(#hg)"/><rect x="469" y="102.4" width="3" height="350.6" fill="url(#hg)"/><rect x="472" y="132.7" width="2" height="320.3" fill="url(#hg)"/><rect x="474" y="145.7" width="2" height="307.3" fill="url(#hg)"/><rect x="476" y="128.4" width="3" height="324.6" fill="url(#hg)"/><rect x="479" y="41.7" width="2" height="411.3" fill="url(#hg)"/><rect x="481" y="137" width="3" height="316" fill="url(#hg)"/><rect x="484" y="137" width="2" height="316" fill="url(#hg)"/><rect x="486" y="102.4" width="2" height="350.6" fill="url(#hg)"/><rect x="488" y="59" width="3" height="394" fill="url(#hg)"/><rect x="491" y="171.7" width="2" height="281.3" fill="url(#hg)"/><rect x="493" y="145.7" width="3" height="307.3" fill="url(#hg)"/><rect x="496" y="98" width="2" height="355" fill="url(#hg)"/><rect x="498" y="184.7" width="2" height="268.3" fill="url(#hg)"/><rect x="500" y="137" width="3" height="316" fill="url(#hg)"/><rect x="503" y="163.1" width="2" height="289.9" fill="url(#hg)"/><rect x="505" y="228.1" width="3" height="224.9" fill="url(#hg)"/><rect x="508" y="193.4" width="2" height="259.6" fill="url(#hg)"/><rect x="510" y="180.4" width="2" height="272.6" fill="url(#hg)"/><rect x="512" y="128.4" width="3" height="324.6" fill="url(#hg)"/><rect x="515" y="215.1" width="2" height="237.9" fill="url(#hg)"/><rect x="517" y="223.7" width="3" height="229.3" fill="url(#hg)"/><rect x="520" y="258.4" width="2" height="194.6" fill="url(#hg)"/><rect x="522" y="258.4" width="3" height="194.6" fill="url(#hg)"/><rect x="525" y="202.1" width="2" height="250.9" fill="url(#hg)"/><rect x="527" y="249.8" width="2" height="203.2" fill="url(#hg)"/><rect x="529" y="323.4" width="3" height="129.6" fill="url(#hg)"/><rect x="532" y="319.1" width="2" height="133.9" fill="url(#hg)"/><rect x="534" y="327.8" width="3" height="125.2" fill="url(#hg)"/><rect x="537" y="306.1" width="2" height="146.9" fill="url(#hg)"/><rect x="539" y="358.1" width="2" height="94.9" fill="url(#hg)"/><rect x="541" y="332.1" width="3" height="120.9" fill="url(#hg)"/><rect x="544" y="332.1" width="2" height="120.9" fill="url(#hg)"/><rect x="546" y="379.8" width="3" height="73.2" fill="url(#hg)"/><rect x="549" y="401.5" width="2" height="51.5" fill="url(#hg)"/><rect x="551" y="401.5" width="2" height="51.5" fill="url(#hg)"/><rect x="553" y="388.5" width="3" height="64.5" fill="url(#hg)"/><rect x="556" y="388.5" width="2" height="64.5" fill="url(#hg)"/><rect x="558" y="414.5" width="3" height="38.5" fill="url(#hg)"/><rect x="561" y="410.1" width="2" height="42.9" fill="url(#hg)"/><rect x="563" y="410.1" width="3" height="42.9" fill="url(#hg)"/><rect x="566" y="414.5" width="2" height="38.5" fill="url(#hg)"/><rect x="568" y="427.5" width="2" height="25.5" fill="url(#hg)"/><rect x="570" y="436.2" width="3" height="16.8" fill="url(#hg)"/><rect x="573" y="440.5" width="2" height="12.5" fill="url(#hg)"/><rect x="575" y="440.5" width="3" height="12.5" fill="url(#hg)"/><rect x="578" y="436.2" width="2" height="16.8" fill="url(#hg)"/><rect x="580" y="440.5" width="2" height="12.5" fill="url(#hg)"/><rect x="582" y="449.2" width="3" height="3.8" fill="url(#hg)"/><rect x="585" y="449.2" width="2" height="3.8" fill="url(#hg)"/><rect x="590" y="444.8" width="2" height="8.2" fill="url(#hg)"/><rect x="597" y="449.2" width="2" height="3.8" fill="url(#hg)"/><path d="M8.5 0L8.5 7M8.5 448L8.5 453M32.5 0L32.5 7M32.5 448L32.5 453M57.5 0L57.5 7M57.5 448L57.5 453M81.5 0L81.5 11M105.5 0L105.5 7M105.5 448L105.5 453M129.5 0L129.5 7M129.5 448L129.5 453M153.5 0L153.5 7M153.5 448L153.5 453M177.5 0L177.5 7M177.5 448L177.5 453M201.5 0L201.5 11M225.5 0L225.5 7M225.5 448L225.5 453M249.5 0L249.5 7M249.5 448L249.5 453M274.5 0L274.5 7M274.5 448L274.5 453M298.5 0L298.5 7M298.5 448L298.5 453M322.5 0L322.5 11M346.5 0L346.5 7M346.5 448L346.5 453M370.5 0L370.5 7M370.5 448L370.5 453M394.5 0L394.5 7M394.5 448L394.5 453M418.5 0L418.5 7M418.5 448L418.5 453M442.5 0L442.5 11M466.5 0L466.5 7M466.5 448L466.5 453M491.5 0L491.5 7M491.5 448L491.5 453M515.5 0L515.5 7M515.5 448L515.5 453M539.5 0L539.5 7M539.5 448L539.5 453M563.5 0L563.5 11M587.5 0L587.5 7M587.5 448L587.5 453M611.5 0L611.5 7M611.5 448L611.5 453M635.5 0L635.5 7M635.5 448L635.5 453M0 20.5L11 20.5M649 20.5L655 20.5M0 37.5L7 37.5M649 37.5L655 37.5M0 55.5L7 55.5M649 55.5L655 55.5M0 72.5L7 72.5M649 72.5L655 72.5M0 89.5L7 89.5M649 89.5L655 89.5M0 107.5L11 107.5M649 107.5L655 107.5M0 124.5L7 124.5M649 124.5L655 124.5M0 141.5L7 141.5M649 141.5L655 141.5M0 159.5L7 159.5M649 159.5L655 159.5M0 176.5L7 176.5M649 176.5L655 176.5M0 193.5L11 193.5M649 193.5L655 193.5M0 211.5L7 211.5M649 211.5L655 211.5M0 228.5L7 228.5M649 228.5L655 228.5M0 245.5L7 245.5M649 245.5L655 245.5M0 263.5L7 263.5M649 263.5L655 263.5M0 280.5L11 280.5M649 280.5L655 280.5M0 297.5L7 297.5M649 297.5L655 297.5M0 315.5L7 315.5M649 315.5L655 315.5M0 332.5L7 332.5M649 332.5L655 332.5M0 349.5L7 349.5M649 349.5L655 349.5M0 367.5L11 367.5M649 367.5L655 367.5M0 384.5L7 384.5M649 384.5L655 384.5M0 401.5L7 401.5M649 401.5L655 401.5M0 419.5L7 419.5M649 419.5L655 419.5M0 436.5L7 436.5M649 436.5L655 436.5" stroke="#c8c8c8" stroke-width="1" fill="none" shape-rendering="crispEdges"/><path d="M8 20.5h1M32 20.5h1M57 20.5h1M81 20.5h1M105 20.5h1M129 20.5h1M153 20.5h1M177 20.5h1M201 20.5h1M225 20.5h1M249 20.5h1M274 20.5h1M298 20.5h1M322 20.5h1M346 20.5h1M370 20.5h1M394 20.5h1M418 20.5h1M442 20.5h1M466 20.5h1M491 20.5h1M515 20.5h1M539 20.5h1M563 20.5h1M587 20.5h1M611 20.5h1M635 20.5h1M8 107.5h1M32 107.5h1M57 107.5h1M81 107.5h1M105 107.5h1M129 107.5h1M153 107.5h1M177 107.5h1M201 107.5h1M225 107.5h1M249 107.5h1M274 107.5h1M298 107.5h1M322 107.5h1M346 107.5h1M370 107.5h1M394 107.5h1M418 107.5h1M442 107.5h1M466 107.5h1M491 107.5h1M515 107.5h1M539 107.5h1M563 107.5h1M587 107.5h1M611 107.5h1M635 107.5h1M8 193.5h1M32 193.5h1M57 193.5h1M81 193.5h1M105 193.5h1M129 193.5h1M153 193.5h1M177 193.5h1M201 193.5h1M225 193.5h1M249 193.5h1M274 193.5h1M298 193.5h1M322 193.5h1M346 193.5h1M370 193.5h1M394 193.5h1M418 193.5h1M442 193.5h1M466 193.5h1M491 193.5h1M515 193.5h1M539 193.5h1M563 193.5h1M587 193.5h1M611 193.5h1M635 193.5h1M8 280.5h1M32 280.5h1M57 280.5h1M81 280.5h1M105 280.5h1M129 280.5h1M153 280.5h1M177 280.5h1M201 280.5h1M225 280.5h1M249 280.5h1M274 280.5h1M298 280.5h1M322 280.5h1M346 280.5h1M370 280.5h1M394 280.5h1M418 280.5h1M442 280.5h1M466 280.5h1M491 280.5h1M515 280.5h1M539 280.5h1M563 280.5h1M587 280.5h1M611 280.5h1M635 280.5h1M8 367.5h1M32 367.5h1M57 367.5h1M81 367.5h1M105 367.5h1M129 367.5h1M153 367.5h1M177 367.5h1M201 367.5h1M225 367.5h1M249 367.5h1M274 367.5h1M298 367.5h1M322 367.5h1M346 367.5h1M370 367.5h1M394 367.5h1M418 367.5h1M442 367.5h1M466 367.5h1M491 367.5h1M515 367.5h1M539 367.5h1M563 367.5h1M587 367.5h1M611 367.5h1M635 367.5h1M81 20.5h1M81 37.5h1M81 55.5h1M81 72.5h1M81 89.5h1M81 107.5h1M81 124.5h1M81 141.5h1M81 159.5h1M81 176.5h1M81 193.5h1M81 211.5h1M81 228.5h1M81 245.5h1M81 263.5h1M81 280.5h1M81 297.5h1M81 315.5h1M81 332.5h1M81 349.5h1M81 367.5h1M81 384.5h1M81 401.5h1M81 419.5h1M81 436.5h1M201 20.5h1M201 37.5h1M201 55.5h1M201 72.5h1M201 89.5h1M201 107.5h1M201 124.5h1M201 141.5h1M201 159.5h1M201 176.5h1M201 193.5h1M201 211.5h1M201 228.5h1M201 245.5h1M201 263.5h1M201 280.5h1M201 297.5h1M201 315.5h1M201 332.5h1M201 349.5h1M201 367.5h1M201 384.5h1M201 401.5h1M201 419.5h1M201 436.5h1M322 20.5h1M322 37.5h1M322 55.5h1M322 72.5h1M322 89.5h1M322 107.5h1M322 124.5h1M322 141.5h1M322 159.5h1M322 176.5h1M322 193.5h1M322 211.5h1M322 228.5h1M322 245.5h1M322 263.5h1M322 280.5h1M322 297.5h1M322 315.5h1M322 332.5h1M322 349.5h1M322 367.5h1M322 384.5h1M322 401.5h1M322 419.5h1M322 436.5h1M442 20.5h1M442 37.5h1M442 55.5h1M442 72.5h1M442 89.5h1M442 107.5h1M442 124.5h1M442 141.5h1M442 159.5h1M442 176.5h1M442 193.5h1M442 211.5h1M442 228.5h1M442 245.5h1M442 263.5h1M442 280.5h1M442 297.5h1M442 315.5h1M442 332.5h1M442 349.5h1M442 367.5h1M442 384.5h1M442 401.5h1M442 419.5h1M442 436.5h1M563 20.5h1M563 37.5h1M563 55.5h1M563 72.5h1M563 89.5h1M563 107.5h1M563 124.5h1M563 141.5h1M563 159.5h1M563 176.5h1M563 193.5h1M563 211.5h1M563 228.5h1M563 245.5h1M563 263.5h1M563 280.5h1M563 297.5h1M563 315.5h1M563 332.5h1M563 349.5h1M563 367.5h1M563 384.5h1M563 401.5h1M563 419.5h1M563 436.5h1" stroke="#9a9a9a" stroke-width="1" fill="none" opacity="1" shape-rendering="crispEdges"/><rect x="647" y="105.2" width="8" height="4" fill="#000"/><text x="650.5" y="111.7" font-size="12" font-family="DejaVu Sans, sans-serif" fill="#b2b2b2" text-anchor="end" stroke="#000" stroke-width="2.2" stroke-opacity="0.55" paint-order="stroke" stroke-linejoin="round">80 hits</text><rect x="647" y="191.9" width="8" height="4" fill="#000"/><text x="650.5" y="198.4" font-size="12" font-family="DejaVu Sans, sans-serif" fill="#b2b2b2" text-anchor="end" stroke="#000" stroke-width="2.2" stroke-opacity="0.55" paint-order="stroke" stroke-linejoin="round">60 hits</text><rect x="647" y="278.6" width="8" height="4" fill="#000"/><text x="650.5" y="285.1" font-size="12" font-family="DejaVu Sans, sans-serif" fill="#b2b2b2" text-anchor="end" stroke="#000" stroke-width="2.2" stroke-opacity="0.55" paint-order="stroke" stroke-linejoin="round">40 hits</text><rect x="647" y="365.3" width="8" height="4" fill="#000"/><text x="650.5" y="371.8" font-size="12" font-family="DejaVu Sans, sans-serif" fill="#b2b2b2" text-anchor="end" stroke="#000" stroke-width="2.2" stroke-opacity="0.55" paint-order="stroke" stroke-linejoin="round">20 hits</text><text x="81.2" y="450.5" font-size="12" font-family="DejaVu Sans, sans-serif" fill="#b2b2b2" text-anchor="middle" stroke="#000" stroke-width="2.2" stroke-opacity="0.55" paint-order="stroke" stroke-linejoin="round">-30 ps</text><text x="201.8" y="450.5" font-size="12" font-family="DejaVu Sans, sans-serif" fill="#b2b2b2" text-anchor="middle" stroke="#000" stroke-width="2.2" stroke-opacity="0.55" paint-order="stroke" stroke-linejoin="round">-20 ps</text><text x="322.3" y="450.5" font-size="12" font-family="DejaVu Sans, sans-serif" fill="#b2b2b2" text-anchor="middle" stroke="#000" stroke-width="2.2" stroke-opacity="0.55" paint-order="stroke" stroke-linejoin="round">-10 ps</text><text x="442.8" y="450.5" font-size="12" font-family="DejaVu Sans, sans-serif" fill="#b2b2b2" text-anchor="middle" stroke="#000" stroke-width="2.2" stroke-opacity="0.55" paint-order="stroke" stroke-linejoin="round">0 s</text><text x="563.4" y="450.5" font-size="12" font-family="DejaVu Sans, sans-serif" fill="#b2b2b2" text-anchor="middle" stroke="#000" stroke-width="2.2" stroke-opacity="0.55" paint-order="stroke" stroke-linejoin="round">10 ps</text></svg><svg class="zi" viewBox="0 0 34 34"><path d="M0.5 0.5 H32 Q33.5 0.5 33.5 2 V33.5 Z" fill="#4f4f4f"/><circle cx="27" cy="7" r="4" fill="none" stroke="#a8a8a8" stroke-width="1.6"/><path d="M24 10 L18 15.5" stroke="#a8a8a8" stroke-width="2.6" stroke-linecap="round"/></svg></div></div>
<div class="panel" style="left:1069px;top:26px;width:685px;height:484px"><div class="tbar">Plot 1 - Eye Diagram (Meas1)<svg class="x" viewBox="0 0 14 14"><path d="M1.5 1.5 L12.5 12.5 M12.5 1.5 L1.5 12.5" stroke="#a3a3a3" stroke-width="1.8" fill="none"/></svg></div><div class="parea"><svg width="679" height="453" viewBox="0 0 679 453"><g fill="none" stroke="#00d0ff" stroke-linecap="butt" stroke-linejoin="round"><path d="M-32 97C-5.3 97 68 97.1 128 97C188 96.9 261.3 96.5 328 96.5C394.7 96.5 466.3 96.9 528 97C589.7 97.1 669.7 97 698 97" stroke-width="29.6"/><path d="M-32 307C-5.3 307 68 307 128 307C188 307 261.3 307 328 307C394.7 307 466.3 307 528 307C589.7 307 669.7 307 698 307" stroke-width="28.6"/><path d="M-319.5 52C-312.8 51.8 -291.2 51.2 -279.5 50.5C-267.8 49.8 -257.8 48.7 -249.5 48C-241.2 47.3 -236.8 46.8 -230 46.5C-223.2 46.2 -215.6 46.1 -208.5 46.5C-201.4 46.9 -194.4 48.2 -187.3 49C-180.2 49.8 -173 50.5 -166 51.5C-159 52.5 -152.1 53.5 -145 54.7C-137.9 55.9 -130.7 56.6 -123.5 58.5C-116.3 60.4 -107.3 63.9 -102 66C-96.7 68.1 -96.1 69.2 -91.5 71C-86.9 72.8 -79.8 75 -74.5 77C-69.2 79 -64.8 80.9 -59.5 83C-54.2 85.1 -49.2 87.6 -42.5 89.4C-35.8 91.2 -26.7 92.9 -19.5 94C-12.3 95.1 -9.5 95.7 0.5 96C10.5 96.3 33.8 96 40.5 96" stroke-width="24.6"/><path d="M8 52C14.7 51.8 36.3 51.2 48 50.5C59.7 49.8 69.8 48.7 78 48C86.2 47.3 90.7 46.8 97.5 46.5C104.3 46.2 111.9 46.1 119 46.5C126.1 46.9 133.1 48.2 140.2 49C147.3 49.8 154.5 50.5 161.5 51.5C168.5 52.5 175.4 53.5 182.5 54.7C189.6 55.9 196.8 56.6 204 58.5C211.2 60.4 220.2 63.9 225.5 66C230.8 68.1 231.4 69.2 236 71C240.6 72.8 247.7 75 253 77C258.3 79 262.7 80.9 268 83C273.3 85.1 278.3 87.6 285 89.4C291.7 91.2 300.8 92.9 308 94C315.2 95.1 318 95.7 328 96C338 96.3 361.3 96 368 96" stroke-width="24.6"/><path d="M335.5 52C342.2 51.8 363.8 51.2 375.5 50.5C387.2 49.8 397.2 48.7 405.5 48C413.8 47.3 418.2 46.8 425 46.5C431.8 46.2 439.4 46.1 446.5 46.5C453.6 46.9 460.6 48.2 467.7 49C474.8 49.8 481.9 50.5 489 51.5C496.1 52.5 502.9 53.5 510 54.7C517.1 55.9 524.3 56.6 531.5 58.5C538.7 60.4 547.7 63.9 553 66C558.3 68.1 558.9 69.2 563.5 71C568.1 72.8 575.2 75 580.5 77C585.8 79 590.2 80.9 595.5 83C600.8 85.1 605.8 87.6 612.5 89.4C619.2 91.2 628.3 92.9 635.5 94C642.7 95.1 645.5 95.7 655.5 96C665.5 96.3 688.8 96 695.5 96" stroke-width="24.6"/><path d="M663 52C669.7 51.8 691.3 51.2 703 50.5C714.7 49.8 724.8 48.7 733 48C741.2 47.3 745.7 46.8 752.5 46.5C759.3 46.2 766.9 46.1 774 46.5C781.1 46.9 788.1 48.2 795.2 49C802.3 49.8 809.5 50.5 816.5 51.5C823.5 52.5 830.4 53.5 837.5 54.7C844.6 55.9 851.8 56.6 859 58.5C866.2 60.4 875.2 63.9 880.5 66C885.8 68.1 886.4 69.2 891 71C895.6 72.8 902.7 75 908 77C913.3 79 917.7 80.9 923 83C928.3 85.1 933.3 87.6 940 89.4C946.7 91.2 955.8 92.9 963 94C970.2 95.1 973 95.7 983 96C993 96.3 1016.3 96 1023 96" stroke-width="24.6"/><path d="M-299.5 97C-291.2 97 -261.2 96.7 -249.5 97C-237.8 97.3 -234.8 98 -229.5 99C-224.2 100 -221 101 -217.5 103C-214 105 -211.5 106.6 -208.5 110.7C-205.5 114.8 -202.6 122 -199.8 127.7C-197 133.4 -194.3 139.3 -191.5 145C-188.7 150.7 -185.5 156.3 -182.7 162C-179.9 167.7 -177.4 173.3 -174.5 179C-171.6 184.7 -168.8 189.5 -165.5 196C-162.2 202.5 -158.8 208 -154.5 218C-150.2 228 -144.7 243.3 -139.5 256C-134.3 268.7 -128.8 282.2 -123.5 294C-118.2 305.8 -112.8 318.2 -107.5 327C-102.2 335.8 -97.8 342.1 -91.5 347C-85.2 351.9 -79.8 354.2 -69.5 356.5C-59.2 358.8 -43.2 359.6 -29.5 360.5C-15.8 361.4 0.8 362.4 12.5 362C24.2 361.6 30.8 360.2 40.5 358C50.2 355.8 63.3 351.7 70.5 349C77.7 346.3 79 344.8 83.5 342C88 339.2 92.7 335.5 97.5 332C102.3 328.5 107 324.2 112.5 321C118 317.8 122.5 315.2 130.5 313C138.5 310.8 155.5 308.8 160.5 308" stroke-width="15.6"/><path d="M28 97C36.3 97 66.3 96.7 78 97C89.7 97.3 92.7 98 98 99C103.3 100 106.5 101 110 103C113.5 105 116 106.6 119 110.7C122 114.8 124.9 122 127.7 127.7C130.5 133.4 133.2 139.3 136 145C138.8 150.7 142 156.3 144.8 162C147.6 167.7 150.1 173.3 153 179C155.9 184.7 158.7 189.5 162 196C165.3 202.5 168.7 208 173 218C177.3 228 182.8 243.3 188 256C193.2 268.7 198.7 282.2 204 294C209.3 305.8 214.7 318.2 220 327C225.3 335.8 229.7 342.1 236 347C242.3 351.9 247.7 354.2 258 356.5C268.3 358.8 284.3 359.6 298 360.5C311.7 361.4 328.3 362.4 340 362C351.7 361.6 358.3 360.2 368 358C377.7 355.8 390.8 351.7 398 349C405.2 346.3 406.5 344.8 411 342C415.5 339.2 420.2 335.5 425 332C429.8 328.5 434.5 324.2 440 321C445.5 317.8 450 315.2 458 313C466 310.8 483 308.8 488 308" stroke-width="15.6"/><path d="M355.5 97C363.8 97 393.8 96.7 405.5 97C417.2 97.3 420.2 98 425.5 99C430.8 100 434 101 437.5 103C441 105 443.6 106.6 446.5 110.7C449.4 114.8 452.4 122 455.2 127.7C458 133.4 460.7 139.3 463.5 145C466.3 150.7 469.5 156.3 472.3 162C475.1 167.7 477.6 173.3 480.5 179C483.4 184.7 486.2 189.5 489.5 196C492.8 202.5 496.2 208 500.5 218C504.8 228 510.3 243.3 515.5 256C520.7 268.7 526.2 282.2 531.5 294C536.8 305.8 542.2 318.2 547.5 327C552.8 335.8 557.2 342.1 563.5 347C569.8 351.9 575.2 354.2 585.5 356.5C595.8 358.8 611.8 359.6 625.5 360.5C639.2 361.4 655.8 362.4 667.5 362C679.2 361.6 685.8 360.2 695.5 358C705.2 355.8 718.3 351.7 725.5 349C732.7 346.3 734 344.8 738.5 342C743 339.2 747.7 335.5 752.5 332C757.3 328.5 762 324.2 767.5 321C773 317.8 777.5 315.2 785.5 313C793.5 310.8 810.5 308.8 815.5 308" stroke-width="15.6"/><path d="M683 97C691.3 97 721.3 96.7 733 97C744.7 97.3 747.7 98 753 99C758.3 100 761.5 101 765 103C768.5 105 771 106.6 774 110.7C777 114.8 779.9 122 782.7 127.7C785.5 133.4 788.1 139.3 791 145C793.9 150.7 797 156.3 799.8 162C802.6 167.7 805.1 173.3 808 179C810.9 184.7 813.7 189.5 817 196C820.3 202.5 823.7 208 828 218C832.3 228 837.8 243.3 843 256C848.2 268.7 853.7 282.2 859 294C864.3 305.8 869.7 318.2 875 327C880.3 335.8 884.7 342.1 891 347C897.3 351.9 902.7 354.2 913 356.5C923.3 358.8 939.3 359.6 953 360.5C966.7 361.4 983.3 362.4 995 362C1006.7 361.6 1013.3 360.2 1023 358C1032.7 355.8 1045.8 351.7 1053 349C1060.2 346.3 1061.5 344.8 1066 342C1070.5 339.2 1075.2 335.5 1080 332C1084.8 328.5 1089.5 324.2 1095 321C1100.5 317.8 1105 315.2 1113 313C1121 310.8 1138 308.8 1143 308" stroke-width="15.6"/><path d="M-289.5 98C-281.2 98 -251.2 97.5 -239.5 98C-227.8 98.5 -224.8 99.7 -219.5 101C-214.2 102.3 -210.8 103.8 -207.5 106C-204.2 108.2 -202.2 110 -199.5 114C-196.8 118 -194.2 124.5 -191.5 130C-188.8 135.5 -186.3 141.3 -183.5 147C-180.7 152.7 -177.3 158.3 -174.5 164C-171.7 169.7 -169.3 175.3 -166.5 181C-163.7 186.7 -160.8 191.5 -157.5 198C-154.2 204.5 -150.8 210 -146.5 220C-142.2 230 -136.7 245.3 -131.5 258C-126.3 270.7 -120.8 284 -115.5 296C-110.2 308 -105.2 320.3 -99.5 330C-93.8 339.7 -88.2 348.2 -81.5 354C-74.8 359.8 -69 362.3 -59.5 365C-50 367.7 -36.5 369 -24.5 370C-12.5 371 1.7 371.7 12.5 371C23.3 370.3 30.8 368.7 40.5 366C50.2 363.3 62.8 358.2 70.5 355C78.2 351.8 81.5 350.2 86.5 347C91.5 343.8 95.7 339.7 100.5 336C105.3 332.3 109.7 328.5 115.5 325C121.3 321.5 127.2 317.7 135.5 315C143.8 312.3 160.5 310 165.5 309" stroke-width="15.6"/><path d="M38 98C46.3 98 76.3 97.5 88 98C99.7 98.5 102.7 99.7 108 101C113.3 102.3 116.7 103.8 120 106C123.3 108.2 125.3 110 128 114C130.7 118 133.3 124.5 136 130C138.7 135.5 141.2 141.3 144 147C146.8 152.7 150.2 158.3 153 164C155.8 169.7 158.2 175.3 161 181C163.8 186.7 166.7 191.5 170 198C173.3 204.5 176.7 210 181 220C185.3 230 190.8 245.3 196 258C201.2 270.7 206.7 284 212 296C217.3 308 222.3 320.3 228 330C233.7 339.7 239.3 348.2 246 354C252.7 359.8 258.5 362.3 268 365C277.5 367.7 291 369 303 370C315 371 329.2 371.7 340 371C350.8 370.3 358.3 368.7 368 366C377.7 363.3 390.3 358.2 398 355C405.7 351.8 409 350.2 414 347C419 343.8 423.2 339.7 428 336C432.8 332.3 437.2 328.5 443 325C448.8 321.5 454.7 317.7 463 315C471.3 312.3 488 310 493 309" stroke-width="15.6"/><path d="M365.5 98C373.8 98 403.8 97.5 415.5 98C427.2 98.5 430.2 99.7 435.5 101C440.8 102.3 444.2 103.8 447.5 106C450.8 108.2 452.8 110 455.5 114C458.2 118 460.8 124.5 463.5 130C466.2 135.5 468.7 141.3 471.5 147C474.3 152.7 477.7 158.3 480.5 164C483.3 169.7 485.7 175.3 488.5 181C491.3 186.7 494.2 191.5 497.5 198C500.8 204.5 504.2 210 508.5 220C512.8 230 518.3 245.3 523.5 258C528.7 270.7 534.2 284 539.5 296C544.8 308 549.8 320.3 555.5 330C561.2 339.7 566.8 348.2 573.5 354C580.2 359.8 586 362.3 595.5 365C605 367.7 618.5 369 630.5 370C642.5 371 656.7 371.7 667.5 371C678.3 370.3 685.8 368.7 695.5 366C705.2 363.3 717.8 358.2 725.5 355C733.2 351.8 736.5 350.2 741.5 347C746.5 343.8 750.7 339.7 755.5 336C760.3 332.3 764.7 328.5 770.5 325C776.3 321.5 782.2 317.7 790.5 315C798.8 312.3 815.5 310 820.5 309" stroke-width="15.6"/><path d="M693 98C701.3 98 731.3 97.5 743 98C754.7 98.5 757.7 99.7 763 101C768.3 102.3 771.7 103.8 775 106C778.3 108.2 780.3 110 783 114C785.7 118 788.3 124.5 791 130C793.7 135.5 796.2 141.3 799 147C801.8 152.7 805.2 158.3 808 164C810.8 169.7 813.2 175.3 816 181C818.8 186.7 821.7 191.5 825 198C828.3 204.5 831.7 210 836 220C840.3 230 845.8 245.3 851 258C856.2 270.7 861.7 284 867 296C872.3 308 877.3 320.3 883 330C888.7 339.7 894.3 348.2 901 354C907.7 359.8 913.5 362.3 923 365C932.5 367.7 946 369 958 370C970 371 984.2 371.7 995 371C1005.8 370.3 1013.3 368.7 1023 366C1032.7 363.3 1045.3 358.2 1053 355C1060.7 351.8 1064 350.2 1069 347C1074 343.8 1078.2 339.7 1083 336C1087.8 332.3 1092.2 328.5 1098 325C1103.8 321.5 1109.7 317.7 1118 315C1126.3 312.3 1143 310 1148 309" stroke-width="15.6"/><path d="M-61.5 370C-57.8 372 -48.2 379.2 -39.5 382C-30.8 384.8 -19.5 386.7 -9.5 387C0.5 387.3 11.2 386.3 20.5 384C29.8 381.7 42.2 374.8 46.5 373" stroke-width="23.6"/><path d="M266 370C269.7 372 279.3 379.2 288 382C296.7 384.8 308 386.7 318 387C328 387.3 338.7 386.3 348 384C357.3 381.7 369.7 374.8 374 373" stroke-width="23.6"/><path d="M593.5 370C597.2 372 606.8 379.2 615.5 382C624.2 384.8 635.5 386.7 645.5 387C655.5 387.3 666.2 386.3 675.5 384C684.8 381.7 697.2 374.8 701.5 373" stroke-width="23.6"/><path d="M-347 404C-343.7 403.5 -337 405.3 -327 401C-317 396.7 -298.7 385.2 -287 378C-275.3 370.8 -266.8 363.2 -257 358C-247.2 352.8 -240.3 349.6 -228.5 346.7C-216.7 343.8 -199 342.9 -186 340.5C-173 338.1 -160.8 335.4 -150.5 332.6C-140.2 329.8 -132.1 325.4 -124 323.5C-115.9 321.6 -118.2 321.2 -102 321C-85.8 320.8 -52.8 321.8 -27 322C-1.2 322.2 36.3 322.3 53 322C69.7 321.7 67.2 321.2 73 320C78.8 318.8 82.7 316.8 88 315C93.3 313.2 102.2 310 105 309" stroke-width="13.6"/><path d="M-19.5 404C-16.2 403.5 -9.5 405.3 0.5 401C10.5 396.7 28.8 385.2 40.5 378C52.2 370.8 60.8 363.2 70.5 358C80.2 352.8 87.2 349.6 99 346.7C110.8 343.8 128.5 342.9 141.5 340.5C154.5 338.1 166.7 335.4 177 332.6C187.3 329.8 195.4 325.4 203.5 323.5C211.6 321.6 209.3 321.2 225.5 321C241.7 320.8 274.7 321.8 300.5 322C326.3 322.2 363.8 322.3 380.5 322C397.2 321.7 394.7 321.2 400.5 320C406.3 318.8 410.2 316.8 415.5 315C420.8 313.2 429.7 310 432.5 309" stroke-width="13.6"/><path d="M308 404C311.3 403.5 318 405.3 328 401C338 396.7 356.3 385.2 368 378C379.7 370.8 388.2 363.2 398 358C407.8 352.8 414.7 349.6 426.5 346.7C438.3 343.8 456 342.9 469 340.5C482 338.1 494.2 335.4 504.5 332.6C514.8 329.8 522.9 325.4 531 323.5C539.1 321.6 536.8 321.2 553 321C569.2 320.8 602.2 321.8 628 322C653.8 322.2 691.3 322.3 708 322C724.7 321.7 722.2 321.2 728 320C733.8 318.8 737.7 316.8 743 315C748.3 313.2 757.2 310 760 309" stroke-width="13.6"/><path d="M635.5 404C638.8 403.5 645.5 405.3 655.5 401C665.5 396.7 683.8 385.2 695.5 378C707.2 370.8 715.8 363.2 725.5 358C735.2 352.8 742.2 349.6 754 346.7C765.8 343.8 783.5 342.9 796.5 340.5C809.5 338.1 821.7 335.4 832 332.6C842.3 329.8 850.4 325.4 858.5 323.5C866.6 321.6 864.3 321.2 880.5 321C896.7 320.8 929.7 321.8 955.5 322C981.3 322.2 1018.8 322.3 1035.5 322C1052.2 321.7 1049.7 321.2 1055.5 320C1061.3 318.8 1065.2 316.8 1070.5 315C1075.8 313.2 1084.7 310 1087.5 309" stroke-width="13.6"/><path d="M-347 406C-343.7 405.8 -337 408 -327 405C-317 402 -298.7 393.5 -287 388C-275.3 382.5 -265 375.6 -257 372C-249 368.4 -247.9 368.2 -239 366.5C-230.1 364.8 -215.2 364.7 -203.5 362C-191.8 359.3 -177.3 353.7 -168.5 350.5C-159.7 347.3 -157.9 345.8 -150.5 343C-143.1 340.2 -132.1 336.4 -124 334C-115.9 331.6 -118.2 329.7 -102 328.5C-85.8 327.3 -52.8 327.2 -27 327C-1.2 326.8 36 327.3 53 327C70 326.7 68.7 326.5 75 325C81.3 323.5 85.3 320.5 91 318C96.7 315.5 106 311.3 109 310" stroke-width="14.6"/><path d="M-19.5 406C-16.2 405.8 -9.5 408 0.5 405C10.5 402 28.8 393.5 40.5 388C52.2 382.5 62.5 375.6 70.5 372C78.5 368.4 79.6 368.2 88.5 366.5C97.4 364.8 112.2 364.7 124 362C135.8 359.3 150.2 353.7 159 350.5C167.8 347.3 169.6 345.8 177 343C184.4 340.2 195.4 336.4 203.5 334C211.6 331.6 209.3 329.7 225.5 328.5C241.7 327.3 274.7 327.2 300.5 327C326.3 326.8 363.5 327.3 380.5 327C397.5 326.7 396.2 326.5 402.5 325C408.8 323.5 412.8 320.5 418.5 318C424.2 315.5 433.5 311.3 436.5 310" stroke-width="14.6"/><path d="M308 406C311.3 405.8 318 408 328 405C338 402 356.3 393.5 368 388C379.7 382.5 390 375.6 398 372C406 368.4 407.1 368.2 416 366.5C424.9 364.8 439.8 364.7 451.5 362C463.2 359.3 477.7 353.7 486.5 350.5C495.3 347.3 497.1 345.8 504.5 343C511.9 340.2 522.9 336.4 531 334C539.1 331.6 536.8 329.7 553 328.5C569.2 327.3 602.2 327.2 628 327C653.8 326.8 691 327.3 708 327C725 326.7 723.7 326.5 730 325C736.3 323.5 740.3 320.5 746 318C751.7 315.5 761 311.3 764 310" stroke-width="14.6"/><path d="M635.5 406C638.8 405.8 645.5 408 655.5 405C665.5 402 683.8 393.5 695.5 388C707.2 382.5 717.5 375.6 725.5 372C733.5 368.4 734.6 368.2 743.5 366.5C752.4 364.8 767.2 364.7 779 362C790.8 359.3 805.2 353.7 814 350.5C822.8 347.3 824.6 345.8 832 343C839.4 340.2 850.4 336.4 858.5 334C866.6 331.6 864.3 329.7 880.5 328.5C896.7 327.3 929.7 327.2 955.5 327C981.3 326.8 1018.5 327.3 1035.5 327C1052.5 326.7 1051.2 326.5 1057.5 325C1063.8 323.5 1067.8 320.5 1073.5 318C1079.2 315.5 1088.5 311.3 1091.5 310" stroke-width="14.6"/><path d="M-369.5 307C-364.5 306.5 -348.7 305.8 -339.5 304C-330.3 302.2 -323.2 298.9 -314.5 296C-305.8 293.1 -297 291.4 -287.5 286.7C-278 282 -266.4 274.6 -257.5 268C-248.5 261.4 -241.6 254.5 -233.8 247C-226 239.5 -217.5 230.2 -210.5 223C-203.5 215.8 -196.8 209.2 -191.5 204C-186.2 198.8 -182.8 197.3 -178.5 191.6C-174.2 185.9 -169.8 177.1 -165.5 170C-161.2 162.9 -157.1 156.1 -152.9 149C-148.7 141.9 -144.7 134.1 -140.5 127.7C-136.3 121.3 -131.8 116 -127.5 110.7C-123.2 105.4 -118.8 100.6 -114.5 96C-110.2 91.4 -105.3 86.6 -101.8 83C-98.3 79.4 -97.2 77.8 -93.5 74.5C-89.8 71.2 -85.2 66.2 -79.5 63C-73.8 59.8 -67 57 -59.5 55C-52 53 -44.5 51.7 -34.5 51C-24.5 50.3 -5.3 51 0.5 51" stroke-width="16.6"/><path d="M-42 307C-37 306.5 -21.2 305.8 -12 304C-2.8 302.2 4.3 298.9 13 296C21.7 293.1 30.5 291.4 40 286.7C49.5 282 61 274.6 70 268C79 261.4 85.9 254.5 93.7 247C101.5 239.5 110 230.2 117 223C124 215.8 130.7 209.2 136 204C141.3 198.8 144.7 197.3 149 191.6C153.3 185.9 157.7 177.1 162 170C166.3 162.9 170.4 156.1 174.6 149C178.8 141.9 182.8 134.1 187 127.7C191.2 121.3 195.7 116 200 110.7C204.3 105.4 208.7 100.6 213 96C217.3 91.4 222.2 86.6 225.7 83C229.2 79.4 230.3 77.8 234 74.5C237.7 71.2 242.3 66.2 248 63C253.7 59.8 260.5 57 268 55C275.5 53 283 51.7 293 51C303 50.3 322.2 51 328 51" stroke-width="16.6"/><path d="M285.5 307C290.5 306.5 306.3 305.8 315.5 304C324.7 302.2 331.8 298.9 340.5 296C349.2 293.1 358 291.4 367.5 286.7C377 282 388.6 274.6 397.5 268C406.4 261.4 413.4 254.5 421.2 247C429 239.5 437.4 230.2 444.5 223C451.6 215.8 458.2 209.2 463.5 204C468.8 198.8 472.2 197.3 476.5 191.6C480.8 185.9 485.2 177.1 489.5 170C493.8 162.9 497.9 156.1 502.1 149C506.3 141.9 510.3 134.1 514.5 127.7C518.7 121.3 523.2 116 527.5 110.7C531.8 105.4 536.2 100.6 540.5 96C544.8 91.4 549.7 86.6 553.2 83C556.7 79.4 557.8 77.8 561.5 74.5C565.2 71.2 569.8 66.2 575.5 63C581.2 59.8 588 57 595.5 55C603 53 610.5 51.7 620.5 51C630.5 50.3 649.7 51 655.5 51" stroke-width="16.6"/><path d="M613 307C618 306.5 633.8 305.8 643 304C652.2 302.2 659.3 298.9 668 296C676.7 293.1 685.5 291.4 695 286.7C704.5 282 716 274.6 725 268C734 261.4 740.9 254.5 748.7 247C756.5 239.5 765 230.2 772 223C779 215.8 785.7 209.2 791 204C796.3 198.8 799.7 197.3 804 191.6C808.3 185.9 812.7 177.1 817 170C821.3 162.9 825.4 156.1 829.6 149C833.8 141.9 837.8 134.1 842 127.7C846.2 121.3 850.7 116 855 110.7C859.3 105.4 863.7 100.6 868 96C872.3 91.4 877.2 86.6 880.7 83C884.2 79.4 885.3 77.8 889 74.5C892.7 71.2 897.3 66.2 903 63C908.7 59.8 915.5 57 923 55C930.5 53 938 51.7 948 51C958 50.3 977.2 51 983 51" stroke-width="16.6"/><path d="M-359.5 312C-353.7 311.7 -334.5 311.5 -324.5 310C-314.5 308.5 -307.7 305.7 -299.5 303C-291.3 300.3 -284.5 298.5 -275.5 294C-266.5 289.5 -254.3 282.5 -245.5 276C-236.7 269.5 -230.2 262.5 -222.5 255C-214.8 247.5 -206.5 238.2 -199.5 231C-192.5 223.8 -185.8 217.3 -180.5 212C-175.2 206.7 -171.8 204.7 -167.5 199C-163.2 193.3 -158.7 185 -154.5 178C-150.3 171 -146.5 164 -142.5 157C-138.5 150 -134.5 142.5 -130.5 136C-126.5 129.5 -122.5 123.7 -118.5 118C-114.5 112.3 -110.5 107 -106.5 102C-102.5 97 -98.3 92.2 -94.5 88C-90.7 83.8 -88 80.8 -83.5 77C-79 73.2 -73.5 68.5 -67.5 65C-61.5 61.5 -55.5 58.2 -47.5 56C-39.5 53.8 -29.2 52.8 -19.5 52C-9.8 51.2 5.5 51.6 10.5 51.5" stroke-width="16.6"/><path d="M-32 312C-26.2 311.7 -7 311.5 3 310C13 308.5 19.8 305.7 28 303C36.2 300.3 43 298.5 52 294C61 289.5 73.2 282.5 82 276C90.8 269.5 97.3 262.5 105 255C112.7 247.5 121 238.2 128 231C135 223.8 141.7 217.3 147 212C152.3 206.7 155.7 204.7 160 199C164.3 193.3 168.8 185 173 178C177.2 171 181 164 185 157C189 150 193 142.5 197 136C201 129.5 205 123.7 209 118C213 112.3 217 107 221 102C225 97 229.2 92.2 233 88C236.8 83.8 239.5 80.8 244 77C248.5 73.2 254 68.5 260 65C266 61.5 272 58.2 280 56C288 53.8 298.3 52.8 308 52C317.7 51.2 333 51.6 338 51.5" stroke-width="16.6"/><path d="M295.5 312C301.3 311.7 320.5 311.5 330.5 310C340.5 308.5 347.3 305.7 355.5 303C363.7 300.3 370.5 298.5 379.5 294C388.5 289.5 400.7 282.5 409.5 276C418.3 269.5 424.8 262.5 432.5 255C440.2 247.5 448.5 238.2 455.5 231C462.5 223.8 469.2 217.3 474.5 212C479.8 206.7 483.2 204.7 487.5 199C491.8 193.3 496.3 185 500.5 178C504.7 171 508.5 164 512.5 157C516.5 150 520.5 142.5 524.5 136C528.5 129.5 532.5 123.7 536.5 118C540.5 112.3 544.5 107 548.5 102C552.5 97 556.7 92.2 560.5 88C564.3 83.8 567 80.8 571.5 77C576 73.2 581.5 68.5 587.5 65C593.5 61.5 599.5 58.2 607.5 56C615.5 53.8 625.8 52.8 635.5 52C645.2 51.2 660.5 51.6 665.5 51.5" stroke-width="16.6"/><path d="M623 312C628.8 311.7 648 311.5 658 310C668 308.5 674.8 305.7 683 303C691.2 300.3 698 298.5 707 294C716 289.5 728.2 282.5 737 276C745.8 269.5 752.3 262.5 760 255C767.7 247.5 776 238.2 783 231C790 223.8 796.7 217.3 802 212C807.3 206.7 810.7 204.7 815 199C819.3 193.3 823.8 185 828 178C832.2 171 836 164 840 157C844 150 848 142.5 852 136C856 129.5 860 123.7 864 118C868 112.3 872 107 876 102C880 97 884.2 92.2 888 88C891.8 83.8 894.5 80.8 899 77C903.5 73.2 909 68.5 915 65C921 61.5 927 58.2 935 56C943 53.8 953.3 52.8 963 52C972.7 51.2 988 51.6 993 51.5" stroke-width="16.6"/><path d="M-654.5 405.5C-651.2 404.2 -641.2 401.9 -634.5 398C-627.8 394.1 -622.8 389.1 -614.5 382C-606.2 374.9 -594.2 364.1 -584.5 355.6C-574.8 347.1 -565.2 339.8 -556.5 331C-547.8 322.2 -539.6 313.2 -532.5 303C-525.4 292.8 -520.1 281.7 -513.9 270C-507.7 258.3 -500.4 243.2 -495.5 233C-490.6 222.8 -488.2 216.9 -484.5 208.6C-480.8 200.3 -477.1 191.5 -473.5 183C-469.9 174.5 -466.4 165.3 -462.9 157.5C-459.4 149.7 -456.1 142.8 -452.5 136C-448.9 129.2 -445.1 123 -441.5 117C-437.9 111 -434.5 105.3 -431 100C-427.5 94.7 -424.1 89.6 -420.5 85C-416.9 80.4 -413.1 75.7 -409.5 72.4C-405.9 69.1 -403.6 67.4 -399 65C-394.4 62.6 -387.7 59.7 -382 58C-376.3 56.3 -372.9 55.4 -365 54.8C-357.1 54.2 -345.8 54.4 -334.5 54.3C-323.2 54.2 -309.9 54.4 -297 54.3C-284.1 54.2 -266.1 53.7 -257 53.5C-247.9 53.3 -247.8 52.7 -242.5 53C-237.2 53.3 -230.5 53.9 -225.5 55.5C-220.5 57.1 -216.1 59.7 -212.5 62.5C-208.9 65.3 -206.8 68.7 -204 72.4C-201.2 76.2 -198.3 80.4 -195.5 85C-192.7 89.6 -189.8 95 -187 100C-184.2 105 -181.3 109.7 -178.5 115C-175.7 120.3 -172.8 126.3 -170 132C-167.2 137.7 -164.3 143 -161.5 149C-158.7 155 -155.4 162.3 -152.9 168C-150.4 173.7 -148.6 178 -146.5 183C-144.4 188 -142.6 192.2 -140.1 198C-137.6 203.8 -134.6 210.7 -131.5 218C-128.4 225.3 -124.7 234 -121.5 242C-118.3 250 -115.7 258.2 -112.5 266C-109.3 273.8 -106.5 279.7 -102.5 289C-98.5 298.3 -93.2 311.8 -88.5 322C-83.8 332.2 -79.6 340.8 -74.5 350C-69.4 359.2 -63.5 370 -58 377.5C-52.5 385 -47.3 390.6 -41.5 395C-35.7 399.4 -28.6 402.2 -22.9 404C-17.2 405.8 -12.7 406.1 -7.5 406C-2.3 405.9 5.8 403.9 8.5 403.5" stroke-width="25.6"/><path d="M-327 405.5C-323.7 404.2 -313.7 401.9 -307 398C-300.3 394.1 -295.3 389.1 -287 382C-278.7 374.9 -266.7 364.1 -257 355.6C-247.3 347.1 -237.7 339.8 -229 331C-220.3 322.2 -212.1 313.2 -205 303C-197.9 292.8 -192.6 281.7 -186.4 270C-180.2 258.3 -172.9 243.2 -168 233C-163.1 222.8 -160.7 216.9 -157 208.6C-153.3 200.3 -149.6 191.5 -146 183C-142.4 174.5 -138.9 165.3 -135.4 157.5C-131.9 149.7 -128.6 142.8 -125 136C-121.4 129.2 -117.6 123 -114 117C-110.4 111 -107 105.3 -103.5 100C-100 94.7 -96.6 89.6 -93 85C-89.4 80.4 -85.6 75.7 -82 72.4C-78.4 69.1 -76.1 67.4 -71.5 65C-66.9 62.6 -60.2 59.7 -54.5 58C-48.8 56.3 -45.4 55.4 -37.5 54.8C-29.6 54.2 -18.3 54.4 -7 54.3C4.3 54.2 17.6 54.4 30.5 54.3C43.4 54.2 61.4 53.7 70.5 53.5C79.6 53.3 79.8 52.7 85 53C90.2 53.3 97 53.9 102 55.5C107 57.1 111.4 59.7 115 62.5C118.6 65.3 120.7 68.7 123.5 72.4C126.3 76.2 129.2 80.4 132 85C134.8 89.6 137.7 95 140.5 100C143.3 105 146.2 109.7 149 115C151.8 120.3 154.7 126.3 157.5 132C160.3 137.7 163.2 143 166 149C168.8 155 172.1 162.3 174.6 168C177.1 173.7 178.9 178 181 183C183.1 188 184.9 192.2 187.4 198C189.9 203.8 192.9 210.7 196 218C199.1 225.3 202.8 234 206 242C209.2 250 211.8 258.2 215 266C218.2 273.8 221 279.7 225 289C229 298.3 234.3 311.8 239 322C243.7 332.2 247.9 340.8 253 350C258.1 359.2 264 370 269.5 377.5C275 385 280.2 390.6 286 395C291.8 399.4 298.9 402.2 304.6 404C310.3 405.8 314.8 406.1 320 406C325.2 405.9 333.3 403.9 336 403.5" stroke-width="25.6"/><path d="M0.5 405.5C3.8 404.2 13.8 401.9 20.5 398C27.2 394.1 32.2 389.1 40.5 382C48.8 374.9 60.8 364.1 70.5 355.6C80.2 347.1 89.8 339.8 98.5 331C107.2 322.2 115.4 313.2 122.5 303C129.6 292.8 134.9 281.7 141.1 270C147.3 258.3 154.6 243.2 159.5 233C164.4 222.8 166.8 216.9 170.5 208.6C174.2 200.3 177.9 191.5 181.5 183C185.1 174.5 188.6 165.3 192.1 157.5C195.6 149.7 198.9 142.8 202.5 136C206.1 129.2 209.9 123 213.5 117C217.1 111 220.5 105.3 224 100C227.5 94.7 230.9 89.6 234.5 85C238.1 80.4 241.9 75.7 245.5 72.4C249.1 69.1 251.4 67.4 256 65C260.6 62.6 267.3 59.7 273 58C278.7 56.3 282.1 55.4 290 54.8C297.9 54.2 309.2 54.4 320.5 54.3C331.8 54.2 345.1 54.4 358 54.3C370.9 54.2 388.9 53.7 398 53.5C407.1 53.3 407.2 52.7 412.5 53C417.8 53.3 424.5 53.9 429.5 55.5C434.5 57.1 438.9 59.7 442.5 62.5C446.1 65.3 448.2 68.7 451 72.4C453.8 76.2 456.7 80.4 459.5 85C462.3 89.6 465.2 95 468 100C470.8 105 473.7 109.7 476.5 115C479.3 120.3 482.2 126.3 485 132C487.8 137.7 490.7 143 493.5 149C496.3 155 499.6 162.3 502.1 168C504.6 173.7 506.4 178 508.5 183C510.6 188 512.4 192.2 514.9 198C517.4 203.8 520.4 210.7 523.5 218C526.6 225.3 530.3 234 533.5 242C536.7 250 539.3 258.2 542.5 266C545.7 273.8 548.5 279.7 552.5 289C556.5 298.3 561.8 311.8 566.5 322C571.2 332.2 575.4 340.8 580.5 350C585.6 359.2 591.5 370 597 377.5C602.5 385 607.6 390.6 613.5 395C619.4 399.4 626.4 402.2 632.1 404C637.8 405.8 642.3 406.1 647.5 406C652.7 405.9 660.8 403.9 663.5 403.5" stroke-width="25.6"/><path d="M328 405.5C331.3 404.2 341.3 401.9 348 398C354.7 394.1 359.7 389.1 368 382C376.3 374.9 388.3 364.1 398 355.6C407.7 347.1 417.3 339.8 426 331C434.7 322.2 442.9 313.2 450 303C457.1 292.8 462.4 281.7 468.6 270C474.8 258.3 482.1 243.2 487 233C491.9 222.8 494.3 216.9 498 208.6C501.7 200.3 505.4 191.5 509 183C512.6 174.5 516.1 165.3 519.6 157.5C523.1 149.7 526.4 142.8 530 136C533.6 129.2 537.4 123 541 117C544.6 111 548 105.3 551.5 100C555 94.7 558.4 89.6 562 85C565.6 80.4 569.4 75.7 573 72.4C576.6 69.1 578.9 67.4 583.5 65C588.1 62.6 594.8 59.7 600.5 58C606.2 56.3 609.6 55.4 617.5 54.8C625.4 54.2 636.7 54.4 648 54.3C659.3 54.2 672.6 54.4 685.5 54.3C698.4 54.2 716.4 53.7 725.5 53.5C734.6 53.3 734.8 52.7 740 53C745.2 53.3 752 53.9 757 55.5C762 57.1 766.4 59.7 770 62.5C773.6 65.3 775.7 68.7 778.5 72.4C781.3 76.2 784.2 80.4 787 85C789.8 89.6 792.7 95 795.5 100C798.3 105 801.2 109.7 804 115C806.8 120.3 809.7 126.3 812.5 132C815.3 137.7 818.1 143 821 149C823.9 155 827.1 162.3 829.6 168C832.1 173.7 833.9 178 836 183C838.1 188 839.9 192.2 842.4 198C844.9 203.8 847.9 210.7 851 218C854.1 225.3 857.8 234 861 242C864.2 250 866.8 258.2 870 266C873.2 273.8 876 279.7 880 289C884 298.3 889.3 311.8 894 322C898.7 332.2 902.9 340.8 908 350C913.1 359.2 919 370 924.5 377.5C930 385 935.1 390.6 941 395C946.9 399.4 953.9 402.2 959.6 404C965.3 405.8 969.8 406.1 975 406C980.2 405.9 988.3 403.9 991 403.5" stroke-width="25.6"/><path d="M655.5 405.5C658.8 404.2 668.8 401.9 675.5 398C682.2 394.1 687.2 389.1 695.5 382C703.8 374.9 715.8 364.1 725.5 355.6C735.2 347.1 744.8 339.8 753.5 331C762.2 322.2 770.4 313.2 777.5 303C784.6 292.8 789.9 281.7 796.1 270C802.3 258.3 809.6 243.2 814.5 233C819.4 222.8 821.8 216.9 825.5 208.6C829.2 200.3 832.9 191.5 836.5 183C840.1 174.5 843.6 165.3 847.1 157.5C850.6 149.7 853.9 142.8 857.5 136C861.1 129.2 864.9 123 868.5 117C872.1 111 875.5 105.3 879 100C882.5 94.7 885.9 89.6 889.5 85C893.1 80.4 896.9 75.7 900.5 72.4C904.1 69.1 906.4 67.4 911 65C915.6 62.6 922.3 59.7 928 58C933.7 56.3 937.1 55.4 945 54.8C952.9 54.2 964.2 54.4 975.5 54.3C986.8 54.2 1000.1 54.4 1013 54.3C1025.9 54.2 1043.9 53.7 1053 53.5C1062.1 53.3 1062.2 52.7 1067.5 53C1072.8 53.3 1079.5 53.9 1084.5 55.5C1089.5 57.1 1093.9 59.7 1097.5 62.5C1101.1 65.3 1103.2 68.7 1106 72.4C1108.8 76.2 1111.7 80.4 1114.5 85C1117.3 89.6 1120.2 95 1123 100C1125.8 105 1128.7 109.7 1131.5 115C1134.3 120.3 1137.2 126.3 1140 132C1142.8 137.7 1145.7 143 1148.5 149C1151.3 155 1154.6 162.3 1157.1 168C1159.6 173.7 1161.4 178 1163.5 183C1165.6 188 1167.4 192.2 1169.9 198C1172.4 203.8 1175.4 210.7 1178.5 218C1181.6 225.3 1185.3 234 1188.5 242C1191.7 250 1194.3 258.2 1197.5 266C1200.7 273.8 1203.5 279.7 1207.5 289C1211.5 298.3 1216.8 311.8 1221.5 322C1226.2 332.2 1230.4 340.8 1235.5 350C1240.6 359.2 1246.5 370 1252 377.5C1257.5 385 1262.7 390.6 1268.5 395C1274.3 399.4 1281.4 402.2 1287.1 404C1292.8 405.8 1297.3 406.1 1302.5 406C1307.7 405.9 1315.8 403.9 1318.5 403.5" stroke-width="25.6"/></g><g fill="none" stroke="#38ff00" stroke-linecap="butt" stroke-linejoin="round"><path d="M-32 97C-5.3 97 68 97.1 128 97C188 96.9 261.3 96.5 328 96.5C394.7 96.5 466.3 96.9 528 97C589.7 97.1 669.7 97 698 97" stroke-width="26.4"/><path d="M-32 307C-5.3 307 68 307 128 307C188 307 261.3 307 328 307C394.7 307 466.3 307 528 307C589.7 307 669.7 307 698 307" stroke-width="25.4"/><path d="M-319.5 52C-312.8 51.8 -291.2 51.2 -279.5 50.5C-267.8 49.8 -257.8 48.7 -249.5 48C-241.2 47.3 -236.8 46.8 -230 46.5C-223.2 46.2 -215.6 46.1 -208.5 46.5C-201.4 46.9 -194.4 48.2 -187.3 49C-180.2 49.8 -173 50.5 -166 51.5C-159 52.5 -152.1 53.5 -145 54.7C-137.9 55.9 -130.7 56.6 -123.5 58.5C-116.3 60.4 -107.3 63.9 -102 66C-96.7 68.1 -96.1 69.2 -91.5 71C-86.9 72.8 -79.8 75 -74.5 77C-69.2 79 -64.8 80.9 -59.5 83C-54.2 85.1 -49.2 87.6 -42.5 89.4C-35.8 91.2 -26.7 92.9 -19.5 94C-12.3 95.1 -9.5 95.7 0.5 96C10.5 96.3 33.8 96 40.5 96" stroke-width="21.4"/><path d="M8 52C14.7 51.8 36.3 51.2 48 50.5C59.7 49.8 69.8 48.7 78 48C86.2 47.3 90.7 46.8 97.5 46.5C104.3 46.2 111.9 46.1 119 46.5C126.1 46.9 133.1 48.2 140.2 49C147.3 49.8 154.5 50.5 161.5 51.5C168.5 52.5 175.4 53.5 182.5 54.7C189.6 55.9 196.8 56.6 204 58.5C211.2 60.4 220.2 63.9 225.5 66C230.8 68.1 231.4 69.2 236 71C240.6 72.8 247.7 75 253 77C258.3 79 262.7 80.9 268 83C273.3 85.1 278.3 87.6 285 89.4C291.7 91.2 300.8 92.9 308 94C315.2 95.1 318 95.7 328 96C338 96.3 361.3 96 368 96" stroke-width="21.4"/><path d="M335.5 52C342.2 51.8 363.8 51.2 375.5 50.5C387.2 49.8 397.2 48.7 405.5 48C413.8 47.3 418.2 46.8 425 46.5C431.8 46.2 439.4 46.1 446.5 46.5C453.6 46.9 460.6 48.2 467.7 49C474.8 49.8 481.9 50.5 489 51.5C496.1 52.5 502.9 53.5 510 54.7C517.1 55.9 524.3 56.6 531.5 58.5C538.7 60.4 547.7 63.9 553 66C558.3 68.1 558.9 69.2 563.5 71C568.1 72.8 575.2 75 580.5 77C585.8 79 590.2 80.9 595.5 83C600.8 85.1 605.8 87.6 612.5 89.4C619.2 91.2 628.3 92.9 635.5 94C642.7 95.1 645.5 95.7 655.5 96C665.5 96.3 688.8 96 695.5 96" stroke-width="21.4"/><path d="M663 52C669.7 51.8 691.3 51.2 703 50.5C714.7 49.8 724.8 48.7 733 48C741.2 47.3 745.7 46.8 752.5 46.5C759.3 46.2 766.9 46.1 774 46.5C781.1 46.9 788.1 48.2 795.2 49C802.3 49.8 809.5 50.5 816.5 51.5C823.5 52.5 830.4 53.5 837.5 54.7C844.6 55.9 851.8 56.6 859 58.5C866.2 60.4 875.2 63.9 880.5 66C885.8 68.1 886.4 69.2 891 71C895.6 72.8 902.7 75 908 77C913.3 79 917.7 80.9 923 83C928.3 85.1 933.3 87.6 940 89.4C946.7 91.2 955.8 92.9 963 94C970.2 95.1 973 95.7 983 96C993 96.3 1016.3 96 1023 96" stroke-width="21.4"/><path d="M-299.5 97C-291.2 97 -261.2 96.7 -249.5 97C-237.8 97.3 -234.8 98 -229.5 99C-224.2 100 -221 101 -217.5 103C-214 105 -211.5 106.6 -208.5 110.7C-205.5 114.8 -202.6 122 -199.8 127.7C-197 133.4 -194.3 139.3 -191.5 145C-188.7 150.7 -185.5 156.3 -182.7 162C-179.9 167.7 -177.4 173.3 -174.5 179C-171.6 184.7 -168.8 189.5 -165.5 196C-162.2 202.5 -158.8 208 -154.5 218C-150.2 228 -144.7 243.3 -139.5 256C-134.3 268.7 -128.8 282.2 -123.5 294C-118.2 305.8 -112.8 318.2 -107.5 327C-102.2 335.8 -97.8 342.1 -91.5 347C-85.2 351.9 -79.8 354.2 -69.5 356.5C-59.2 358.8 -43.2 359.6 -29.5 360.5C-15.8 361.4 0.8 362.4 12.5 362C24.2 361.6 30.8 360.2 40.5 358C50.2 355.8 63.3 351.7 70.5 349C77.7 346.3 79 344.8 83.5 342C88 339.2 92.7 335.5 97.5 332C102.3 328.5 107 324.2 112.5 321C118 317.8 122.5 315.2 130.5 313C138.5 310.8 155.5 308.8 160.5 308" stroke-width="12.4"/><path d="M28 97C36.3 97 66.3 96.7 78 97C89.7 97.3 92.7 98 98 99C103.3 100 106.5 101 110 103C113.5 105 116 106.6 119 110.7C122 114.8 124.9 122 127.7 127.7C130.5 133.4 133.2 139.3 136 145C138.8 150.7 142 156.3 144.8 162C147.6 167.7 150.1 173.3 153 179C155.9 184.7 158.7 189.5 162 196C165.3 202.5 168.7 208 173 218C177.3 228 182.8 243.3 188 256C193.2 268.7 198.7 282.2 204 294C209.3 305.8 214.7 318.2 220 327C225.3 335.8 229.7 342.1 236 347C242.3 351.9 247.7 354.2 258 356.5C268.3 358.8 284.3 359.6 298 360.5C311.7 361.4 328.3 362.4 340 362C351.7 361.6 358.3 360.2 368 358C377.7 355.8 390.8 351.7 398 349C405.2 346.3 406.5 344.8 411 342C415.5 339.2 420.2 335.5 425 332C429.8 328.5 434.5 324.2 440 321C445.5 317.8 450 315.2 458 313C466 310.8 483 308.8 488 308" stroke-width="12.4"/><path d="M355.5 97C363.8 97 393.8 96.7 405.5 97C417.2 97.3 420.2 98 425.5 99C430.8 100 434 101 437.5 103C441 105 443.6 106.6 446.5 110.7C449.4 114.8 452.4 122 455.2 127.7C458 133.4 460.7 139.3 463.5 145C466.3 150.7 469.5 156.3 472.3 162C475.1 167.7 477.6 173.3 480.5 179C483.4 184.7 486.2 189.5 489.5 196C492.8 202.5 496.2 208 500.5 218C504.8 228 510.3 243.3 515.5 256C520.7 268.7 526.2 282.2 531.5 294C536.8 305.8 542.2 318.2 547.5 327C552.8 335.8 557.2 342.1 563.5 347C569.8 351.9 575.2 354.2 585.5 356.5C595.8 358.8 611.8 359.6 625.5 360.5C639.2 361.4 655.8 362.4 667.5 362C679.2 361.6 685.8 360.2 695.5 358C705.2 355.8 718.3 351.7 725.5 349C732.7 346.3 734 344.8 738.5 342C743 339.2 747.7 335.5 752.5 332C757.3 328.5 762 324.2 767.5 321C773 317.8 777.5 315.2 785.5 313C793.5 310.8 810.5 308.8 815.5 308" stroke-width="12.4"/><path d="M683 97C691.3 97 721.3 96.7 733 97C744.7 97.3 747.7 98 753 99C758.3 100 761.5 101 765 103C768.5 105 771 106.6 774 110.7C777 114.8 779.9 122 782.7 127.7C785.5 133.4 788.1 139.3 791 145C793.9 150.7 797 156.3 799.8 162C802.6 167.7 805.1 173.3 808 179C810.9 184.7 813.7 189.5 817 196C820.3 202.5 823.7 208 828 218C832.3 228 837.8 243.3 843 256C848.2 268.7 853.7 282.2 859 294C864.3 305.8 869.7 318.2 875 327C880.3 335.8 884.7 342.1 891 347C897.3 351.9 902.7 354.2 913 356.5C923.3 358.8 939.3 359.6 953 360.5C966.7 361.4 983.3 362.4 995 362C1006.7 361.6 1013.3 360.2 1023 358C1032.7 355.8 1045.8 351.7 1053 349C1060.2 346.3 1061.5 344.8 1066 342C1070.5 339.2 1075.2 335.5 1080 332C1084.8 328.5 1089.5 324.2 1095 321C1100.5 317.8 1105 315.2 1113 313C1121 310.8 1138 308.8 1143 308" stroke-width="12.4"/><path d="M-289.5 98C-281.2 98 -251.2 97.5 -239.5 98C-227.8 98.5 -224.8 99.7 -219.5 101C-214.2 102.3 -210.8 103.8 -207.5 106C-204.2 108.2 -202.2 110 -199.5 114C-196.8 118 -194.2 124.5 -191.5 130C-188.8 135.5 -186.3 141.3 -183.5 147C-180.7 152.7 -177.3 158.3 -174.5 164C-171.7 169.7 -169.3 175.3 -166.5 181C-163.7 186.7 -160.8 191.5 -157.5 198C-154.2 204.5 -150.8 210 -146.5 220C-142.2 230 -136.7 245.3 -131.5 258C-126.3 270.7 -120.8 284 -115.5 296C-110.2 308 -105.2 320.3 -99.5 330C-93.8 339.7 -88.2 348.2 -81.5 354C-74.8 359.8 -69 362.3 -59.5 365C-50 367.7 -36.5 369 -24.5 370C-12.5 371 1.7 371.7 12.5 371C23.3 370.3 30.8 368.7 40.5 366C50.2 363.3 62.8 358.2 70.5 355C78.2 351.8 81.5 350.2 86.5 347C91.5 343.8 95.7 339.7 100.5 336C105.3 332.3 109.7 328.5 115.5 325C121.3 321.5 127.2 317.7 135.5 315C143.8 312.3 160.5 310 165.5 309" stroke-width="12.4"/><path d="M38 98C46.3 98 76.3 97.5 88 98C99.7 98.5 102.7 99.7 108 101C113.3 102.3 116.7 103.8 120 106C123.3 108.2 125.3 110 128 114C130.7 118 133.3 124.5 136 130C138.7 135.5 141.2 141.3 144 147C146.8 152.7 150.2 158.3 153 164C155.8 169.7 158.2 175.3 161 181C163.8 186.7 166.7 191.5 170 198C173.3 204.5 176.7 210 181 220C185.3 230 190.8 245.3 196 258C201.2 270.7 206.7 284 212 296C217.3 308 222.3 320.3 228 330C233.7 339.7 239.3 348.2 246 354C252.7 359.8 258.5 362.3 268 365C277.5 367.7 291 369 303 370C315 371 329.2 371.7 340 371C350.8 370.3 358.3 368.7 368 366C377.7 363.3 390.3 358.2 398 355C405.7 351.8 409 350.2 414 347C419 343.8 423.2 339.7 428 336C432.8 332.3 437.2 328.5 443 325C448.8 321.5 454.7 317.7 463 315C471.3 312.3 488 310 493 309" stroke-width="12.4"/><path d="M365.5 98C373.8 98 403.8 97.5 415.5 98C427.2 98.5 430.2 99.7 435.5 101C440.8 102.3 444.2 103.8 447.5 106C450.8 108.2 452.8 110 455.5 114C458.2 118 460.8 124.5 463.5 130C466.2 135.5 468.7 141.3 471.5 147C474.3 152.7 477.7 158.3 480.5 164C483.3 169.7 485.7 175.3 488.5 181C491.3 186.7 494.2 191.5 497.5 198C500.8 204.5 504.2 210 508.5 220C512.8 230 518.3 245.3 523.5 258C528.7 270.7 534.2 284 539.5 296C544.8 308 549.8 320.3 555.5 330C561.2 339.7 566.8 348.2 573.5 354C580.2 359.8 586 362.3 595.5 365C605 367.7 618.5 369 630.5 370C642.5 371 656.7 371.7 667.5 371C678.3 370.3 685.8 368.7 695.5 366C705.2 363.3 717.8 358.2 725.5 355C733.2 351.8 736.5 350.2 741.5 347C746.5 343.8 750.7 339.7 755.5 336C760.3 332.3 764.7 328.5 770.5 325C776.3 321.5 782.2 317.7 790.5 315C798.8 312.3 815.5 310 820.5 309" stroke-width="12.4"/><path d="M693 98C701.3 98 731.3 97.5 743 98C754.7 98.5 757.7 99.7 763 101C768.3 102.3 771.7 103.8 775 106C778.3 108.2 780.3 110 783 114C785.7 118 788.3 124.5 791 130C793.7 135.5 796.2 141.3 799 147C801.8 152.7 805.2 158.3 808 164C810.8 169.7 813.2 175.3 816 181C818.8 186.7 821.7 191.5 825 198C828.3 204.5 831.7 210 836 220C840.3 230 845.8 245.3 851 258C856.2 270.7 861.7 284 867 296C872.3 308 877.3 320.3 883 330C888.7 339.7 894.3 348.2 901 354C907.7 359.8 913.5 362.3 923 365C932.5 367.7 946 369 958 370C970 371 984.2 371.7 995 371C1005.8 370.3 1013.3 368.7 1023 366C1032.7 363.3 1045.3 358.2 1053 355C1060.7 351.8 1064 350.2 1069 347C1074 343.8 1078.2 339.7 1083 336C1087.8 332.3 1092.2 328.5 1098 325C1103.8 321.5 1109.7 317.7 1118 315C1126.3 312.3 1143 310 1148 309" stroke-width="12.4"/><path d="M-61.5 370C-57.8 372 -48.2 379.2 -39.5 382C-30.8 384.8 -19.5 386.7 -9.5 387C0.5 387.3 11.2 386.3 20.5 384C29.8 381.7 42.2 374.8 46.5 373" stroke-width="20.4"/><path d="M266 370C269.7 372 279.3 379.2 288 382C296.7 384.8 308 386.7 318 387C328 387.3 338.7 386.3 348 384C357.3 381.7 369.7 374.8 374 373" stroke-width="20.4"/><path d="M593.5 370C597.2 372 606.8 379.2 615.5 382C624.2 384.8 635.5 386.7 645.5 387C655.5 387.3 666.2 386.3 675.5 384C684.8 381.7 697.2 374.8 701.5 373" stroke-width="20.4"/><path d="M-347 404C-343.7 403.5 -337 405.3 -327 401C-317 396.7 -298.7 385.2 -287 378C-275.3 370.8 -266.8 363.2 -257 358C-247.2 352.8 -240.3 349.6 -228.5 346.7C-216.7 343.8 -199 342.9 -186 340.5C-173 338.1 -160.8 335.4 -150.5 332.6C-140.2 329.8 -132.1 325.4 -124 323.5C-115.9 321.6 -118.2 321.2 -102 321C-85.8 320.8 -52.8 321.8 -27 322C-1.2 322.2 36.3 322.3 53 322C69.7 321.7 67.2 321.2 73 320C78.8 318.8 82.7 316.8 88 315C93.3 313.2 102.2 310 105 309" stroke-width="10.4"/><path d="M-19.5 404C-16.2 403.5 -9.5 405.3 0.5 401C10.5 396.7 28.8 385.2 40.5 378C52.2 370.8 60.8 363.2 70.5 358C80.2 352.8 87.2 349.6 99 346.7C110.8 343.8 128.5 342.9 141.5 340.5C154.5 338.1 166.7 335.4 177 332.6C187.3 329.8 195.4 325.4 203.5 323.5C211.6 321.6 209.3 321.2 225.5 321C241.7 320.8 274.7 321.8 300.5 322C326.3 322.2 363.8 322.3 380.5 322C397.2 321.7 394.7 321.2 400.5 320C406.3 318.8 410.2 316.8 415.5 315C420.8 313.2 429.7 310 432.5 309" stroke-width="10.4"/><path d="M308 404C311.3 403.5 318 405.3 328 401C338 396.7 356.3 385.2 368 378C379.7 370.8 388.2 363.2 398 358C407.8 352.8 414.7 349.6 426.5 346.7C438.3 343.8 456 342.9 469 340.5C482 338.1 494.2 335.4 504.5 332.6C514.8 329.8 522.9 325.4 531 323.5C539.1 321.6 536.8 321.2 553 321C569.2 320.8 602.2 321.8 628 322C653.8 322.2 691.3 322.3 708 322C724.7 321.7 722.2 321.2 728 320C733.8 318.8 737.7 316.8 743 315C748.3 313.2 757.2 310 760 309" stroke-width="10.4"/><path d="M635.5 404C638.8 403.5 645.5 405.3 655.5 401C665.5 396.7 683.8 385.2 695.5 378C707.2 370.8 715.8 363.2 725.5 358C735.2 352.8 742.2 349.6 754 346.7C765.8 343.8 783.5 342.9 796.5 340.5C809.5 338.1 821.7 335.4 832 332.6C842.3 329.8 850.4 325.4 858.5 323.5C866.6 321.6 864.3 321.2 880.5 321C896.7 320.8 929.7 321.8 955.5 322C981.3 322.2 1018.8 322.3 1035.5 322C1052.2 321.7 1049.7 321.2 1055.5 320C1061.3 318.8 1065.2 316.8 1070.5 315C1075.8 313.2 1084.7 310 1087.5 309" stroke-width="10.4"/><path d="M-347 406C-343.7 405.8 -337 408 -327 405C-317 402 -298.7 393.5 -287 388C-275.3 382.5 -265 375.6 -257 372C-249 368.4 -247.9 368.2 -239 366.5C-230.1 364.8 -215.2 364.7 -203.5 362C-191.8 359.3 -177.3 353.7 -168.5 350.5C-159.7 347.3 -157.9 345.8 -150.5 343C-143.1 340.2 -132.1 336.4 -124 334C-115.9 331.6 -118.2 329.7 -102 328.5C-85.8 327.3 -52.8 327.2 -27 327C-1.2 326.8 36 327.3 53 327C70 326.7 68.7 326.5 75 325C81.3 323.5 85.3 320.5 91 318C96.7 315.5 106 311.3 109 310" stroke-width="11.4"/><path d="M-19.5 406C-16.2 405.8 -9.5 408 0.5 405C10.5 402 28.8 393.5 40.5 388C52.2 382.5 62.5 375.6 70.5 372C78.5 368.4 79.6 368.2 88.5 366.5C97.4 364.8 112.2 364.7 124 362C135.8 359.3 150.2 353.7 159 350.5C167.8 347.3 169.6 345.8 177 343C184.4 340.2 195.4 336.4 203.5 334C211.6 331.6 209.3 329.7 225.5 328.5C241.7 327.3 274.7 327.2 300.5 327C326.3 326.8 363.5 327.3 380.5 327C397.5 326.7 396.2 326.5 402.5 325C408.8 323.5 412.8 320.5 418.5 318C424.2 315.5 433.5 311.3 436.5 310" stroke-width="11.4"/><path d="M308 406C311.3 405.8 318 408 328 405C338 402 356.3 393.5 368 388C379.7 382.5 390 375.6 398 372C406 368.4 407.1 368.2 416 366.5C424.9 364.8 439.8 364.7 451.5 362C463.2 359.3 477.7 353.7 486.5 350.5C495.3 347.3 497.1 345.8 504.5 343C511.9 340.2 522.9 336.4 531 334C539.1 331.6 536.8 329.7 553 328.5C569.2 327.3 602.2 327.2 628 327C653.8 326.8 691 327.3 708 327C725 326.7 723.7 326.5 730 325C736.3 323.5 740.3 320.5 746 318C751.7 315.5 761 311.3 764 310" stroke-width="11.4"/><path d="M635.5 406C638.8 405.8 645.5 408 655.5 405C665.5 402 683.8 393.5 695.5 388C707.2 382.5 717.5 375.6 725.5 372C733.5 368.4 734.6 368.2 743.5 366.5C752.4 364.8 767.2 364.7 779 362C790.8 359.3 805.2 353.7 814 350.5C822.8 347.3 824.6 345.8 832 343C839.4 340.2 850.4 336.4 858.5 334C866.6 331.6 864.3 329.7 880.5 328.5C896.7 327.3 929.7 327.2 955.5 327C981.3 326.8 1018.5 327.3 1035.5 327C1052.5 326.7 1051.2 326.5 1057.5 325C1063.8 323.5 1067.8 320.5 1073.5 318C1079.2 315.5 1088.5 311.3 1091.5 310" stroke-width="11.4"/><path d="M-369.5 307C-364.5 306.5 -348.7 305.8 -339.5 304C-330.3 302.2 -323.2 298.9 -314.5 296C-305.8 293.1 -297 291.4 -287.5 286.7C-278 282 -266.4 274.6 -257.5 268C-248.5 261.4 -241.6 254.5 -233.8 247C-226 239.5 -217.5 230.2 -210.5 223C-203.5 215.8 -196.8 209.2 -191.5 204C-186.2 198.8 -182.8 197.3 -178.5 191.6C-174.2 185.9 -169.8 177.1 -165.5 170C-161.2 162.9 -157.1 156.1 -152.9 149C-148.7 141.9 -144.7 134.1 -140.5 127.7C-136.3 121.3 -131.8 116 -127.5 110.7C-123.2 105.4 -118.8 100.6 -114.5 96C-110.2 91.4 -105.3 86.6 -101.8 83C-98.3 79.4 -97.2 77.8 -93.5 74.5C-89.8 71.2 -85.2 66.2 -79.5 63C-73.8 59.8 -67 57 -59.5 55C-52 53 -44.5 51.7 -34.5 51C-24.5 50.3 -5.3 51 0.5 51" stroke-width="13.4"/><path d="M-42 307C-37 306.5 -21.2 305.8 -12 304C-2.8 302.2 4.3 298.9 13 296C21.7 293.1 30.5 291.4 40 286.7C49.5 282 61 274.6 70 268C79 261.4 85.9 254.5 93.7 247C101.5 239.5 110 230.2 117 223C124 215.8 130.7 209.2 136 204C141.3 198.8 144.7 197.3 149 191.6C153.3 185.9 157.7 177.1 162 170C166.3 162.9 170.4 156.1 174.6 149C178.8 141.9 182.8 134.1 187 127.7C191.2 121.3 195.7 116 200 110.7C204.3 105.4 208.7 100.6 213 96C217.3 91.4 222.2 86.6 225.7 83C229.2 79.4 230.3 77.8 234 74.5C237.7 71.2 242.3 66.2 248 63C253.7 59.8 260.5 57 268 55C275.5 53 283 51.7 293 51C303 50.3 322.2 51 328 51" stroke-width="13.4"/><path d="M285.5 307C290.5 306.5 306.3 305.8 315.5 304C324.7 302.2 331.8 298.9 340.5 296C349.2 293.1 358 291.4 367.5 286.7C377 282 388.6 274.6 397.5 268C406.4 261.4 413.4 254.5 421.2 247C429 239.5 437.4 230.2 444.5 223C451.6 215.8 458.2 209.2 463.5 204C468.8 198.8 472.2 197.3 476.5 191.6C480.8 185.9 485.2 177.1 489.5 170C493.8 162.9 497.9 156.1 502.1 149C506.3 141.9 510.3 134.1 514.5 127.7C518.7 121.3 523.2 116 527.5 110.7C531.8 105.4 536.2 100.6 540.5 96C544.8 91.4 549.7 86.6 553.2 83C556.7 79.4 557.8 77.8 561.5 74.5C565.2 71.2 569.8 66.2 575.5 63C581.2 59.8 588 57 595.5 55C603 53 610.5 51.7 620.5 51C630.5 50.3 649.7 51 655.5 51" stroke-width="13.4"/><path d="M613 307C618 306.5 633.8 305.8 643 304C652.2 302.2 659.3 298.9 668 296C676.7 293.1 685.5 291.4 695 286.7C704.5 282 716 274.6 725 268C734 261.4 740.9 254.5 748.7 247C756.5 239.5 765 230.2 772 223C779 215.8 785.7 209.2 791 204C796.3 198.8 799.7 197.3 804 191.6C808.3 185.9 812.7 177.1 817 170C821.3 162.9 825.4 156.1 829.6 149C833.8 141.9 837.8 134.1 842 127.7C846.2 121.3 850.7 116 855 110.7C859.3 105.4 863.7 100.6 868 96C872.3 91.4 877.2 86.6 880.7 83C884.2 79.4 885.3 77.8 889 74.5C892.7 71.2 897.3 66.2 903 63C908.7 59.8 915.5 57 923 55C930.5 53 938 51.7 948 51C958 50.3 977.2 51 983 51" stroke-width="13.4"/><path d="M-359.5 312C-353.7 311.7 -334.5 311.5 -324.5 310C-314.5 308.5 -307.7 305.7 -299.5 303C-291.3 300.3 -284.5 298.5 -275.5 294C-266.5 289.5 -254.3 282.5 -245.5 276C-236.7 269.5 -230.2 262.5 -222.5 255C-214.8 247.5 -206.5 238.2 -199.5 231C-192.5 223.8 -185.8 217.3 -180.5 212C-175.2 206.7 -171.8 204.7 -167.5 199C-163.2 193.3 -158.7 185 -154.5 178C-150.3 171 -146.5 164 -142.5 157C-138.5 150 -134.5 142.5 -130.5 136C-126.5 129.5 -122.5 123.7 -118.5 118C-114.5 112.3 -110.5 107 -106.5 102C-102.5 97 -98.3 92.2 -94.5 88C-90.7 83.8 -88 80.8 -83.5 77C-79 73.2 -73.5 68.5 -67.5 65C-61.5 61.5 -55.5 58.2 -47.5 56C-39.5 53.8 -29.2 52.8 -19.5 52C-9.8 51.2 5.5 51.6 10.5 51.5" stroke-width="13.4"/><path d="M-32 312C-26.2 311.7 -7 311.5 3 310C13 308.5 19.8 305.7 28 303C36.2 300.3 43 298.5 52 294C61 289.5 73.2 282.5 82 276C90.8 269.5 97.3 262.5 105 255C112.7 247.5 121 238.2 128 231C135 223.8 141.7 217.3 147 212C152.3 206.7 155.7 204.7 160 199C164.3 193.3 168.8 185 173 178C177.2 171 181 164 185 157C189 150 193 142.5 197 136C201 129.5 205 123.7 209 118C213 112.3 217 107 221 102C225 97 229.2 92.2 233 88C236.8 83.8 239.5 80.8 244 77C248.5 73.2 254 68.5 260 65C266 61.5 272 58.2 280 56C288 53.8 298.3 52.8 308 52C317.7 51.2 333 51.6 338 51.5" stroke-width="13.4"/><path d="M295.5 312C301.3 311.7 320.5 311.5 330.5 310C340.5 308.5 347.3 305.7 355.5 303C363.7 300.3 370.5 298.5 379.5 294C388.5 289.5 400.7 282.5 409.5 276C418.3 269.5 424.8 262.5 432.5 255C440.2 247.5 448.5 238.2 455.5 231C462.5 223.8 469.2 217.3 474.5 212C479.8 206.7 483.2 204.7 487.5 199C491.8 193.3 496.3 185 500.5 178C504.7 171 508.5 164 512.5 157C516.5 150 520.5 142.5 524.5 136C528.5 129.5 532.5 123.7 536.5 118C540.5 112.3 544.5 107 548.5 102C552.5 97 556.7 92.2 560.5 88C564.3 83.8 567 80.8 571.5 77C576 73.2 581.5 68.5 587.5 65C593.5 61.5 599.5 58.2 607.5 56C615.5 53.8 625.8 52.8 635.5 52C645.2 51.2 660.5 51.6 665.5 51.5" stroke-width="13.4"/><path d="M623 312C628.8 311.7 648 311.5 658 310C668 308.5 674.8 305.7 683 303C691.2 300.3 698 298.5 707 294C716 289.5 728.2 282.5 737 276C745.8 269.5 752.3 262.5 760 255C767.7 247.5 776 238.2 783 231C790 223.8 796.7 217.3 802 212C807.3 206.7 810.7 204.7 815 199C819.3 193.3 823.8 185 828 178C832.2 171 836 164 840 157C844 150 848 142.5 852 136C856 129.5 860 123.7 864 118C868 112.3 872 107 876 102C880 97 884.2 92.2 888 88C891.8 83.8 894.5 80.8 899 77C903.5 73.2 909 68.5 915 65C921 61.5 927 58.2 935 56C943 53.8 953.3 52.8 963 52C972.7 51.2 988 51.6 993 51.5" stroke-width="13.4"/><path d="M-654.5 405.5C-651.2 404.2 -641.2 401.9 -634.5 398C-627.8 394.1 -622.8 389.1 -614.5 382C-606.2 374.9 -594.2 364.1 -584.5 355.6C-574.8 347.1 -565.2 339.8 -556.5 331C-547.8 322.2 -539.6 313.2 -532.5 303C-525.4 292.8 -520.1 281.7 -513.9 270C-507.7 258.3 -500.4 243.2 -495.5 233C-490.6 222.8 -488.2 216.9 -484.5 208.6C-480.8 200.3 -477.1 191.5 -473.5 183C-469.9 174.5 -466.4 165.3 -462.9 157.5C-459.4 149.7 -456.1 142.8 -452.5 136C-448.9 129.2 -445.1 123 -441.5 117C-437.9 111 -434.5 105.3 -431 100C-427.5 94.7 -424.1 89.6 -420.5 85C-416.9 80.4 -413.1 75.7 -409.5 72.4C-405.9 69.1 -403.6 67.4 -399 65C-394.4 62.6 -387.7 59.7 -382 58C-376.3 56.3 -372.9 55.4 -365 54.8C-357.1 54.2 -345.8 54.4 -334.5 54.3C-323.2 54.2 -309.9 54.4 -297 54.3C-284.1 54.2 -266.1 53.7 -257 53.5C-247.9 53.3 -247.8 52.7 -242.5 53C-237.2 53.3 -230.5 53.9 -225.5 55.5C-220.5 57.1 -216.1 59.7 -212.5 62.5C-208.9 65.3 -206.8 68.7 -204 72.4C-201.2 76.2 -198.3 80.4 -195.5 85C-192.7 89.6 -189.8 95 -187 100C-184.2 105 -181.3 109.7 -178.5 115C-175.7 120.3 -172.8 126.3 -170 132C-167.2 137.7 -164.3 143 -161.5 149C-158.7 155 -155.4 162.3 -152.9 168C-150.4 173.7 -148.6 178 -146.5 183C-144.4 188 -142.6 192.2 -140.1 198C-137.6 203.8 -134.6 210.7 -131.5 218C-128.4 225.3 -124.7 234 -121.5 242C-118.3 250 -115.7 258.2 -112.5 266C-109.3 273.8 -106.5 279.7 -102.5 289C-98.5 298.3 -93.2 311.8 -88.5 322C-83.8 332.2 -79.6 340.8 -74.5 350C-69.4 359.2 -63.5 370 -58 377.5C-52.5 385 -47.3 390.6 -41.5 395C-35.7 399.4 -28.6 402.2 -22.9 404C-17.2 405.8 -12.7 406.1 -7.5 406C-2.3 405.9 5.8 403.9 8.5 403.5" stroke-width="22.4"/><path d="M-327 405.5C-323.7 404.2 -313.7 401.9 -307 398C-300.3 394.1 -295.3 389.1 -287 382C-278.7 374.9 -266.7 364.1 -257 355.6C-247.3 347.1 -237.7 339.8 -229 331C-220.3 322.2 -212.1 313.2 -205 303C-197.9 292.8 -192.6 281.7 -186.4 270C-180.2 258.3 -172.9 243.2 -168 233C-163.1 222.8 -160.7 216.9 -157 208.6C-153.3 200.3 -149.6 191.5 -146 183C-142.4 174.5 -138.9 165.3 -135.4 157.5C-131.9 149.7 -128.6 142.8 -125 136C-121.4 129.2 -117.6 123 -114 117C-110.4 111 -107 105.3 -103.5 100C-100 94.7 -96.6 89.6 -93 85C-89.4 80.4 -85.6 75.7 -82 72.4C-78.4 69.1 -76.1 67.4 -71.5 65C-66.9 62.6 -60.2 59.7 -54.5 58C-48.8 56.3 -45.4 55.4 -37.5 54.8C-29.6 54.2 -18.3 54.4 -7 54.3C4.3 54.2 17.6 54.4 30.5 54.3C43.4 54.2 61.4 53.7 70.5 53.5C79.6 53.3 79.8 52.7 85 53C90.2 53.3 97 53.9 102 55.5C107 57.1 111.4 59.7 115 62.5C118.6 65.3 120.7 68.7 123.5 72.4C126.3 76.2 129.2 80.4 132 85C134.8 89.6 137.7 95 140.5 100C143.3 105 146.2 109.7 149 115C151.8 120.3 154.7 126.3 157.5 132C160.3 137.7 163.2 143 166 149C168.8 155 172.1 162.3 174.6 168C177.1 173.7 178.9 178 181 183C183.1 188 184.9 192.2 187.4 198C189.9 203.8 192.9 210.7 196 218C199.1 225.3 202.8 234 206 242C209.2 250 211.8 258.2 215 266C218.2 273.8 221 279.7 225 289C229 298.3 234.3 311.8 239 322C243.7 332.2 247.9 340.8 253 350C258.1 359.2 264 370 269.5 377.5C275 385 280.2 390.6 286 395C291.8 399.4 298.9 402.2 304.6 404C310.3 405.8 314.8 406.1 320 406C325.2 405.9 333.3 403.9 336 403.5" stroke-width="22.4"/><path d="M0.5 405.5C3.8 404.2 13.8 401.9 20.5 398C27.2 394.1 32.2 389.1 40.5 382C48.8 374.9 60.8 364.1 70.5 355.6C80.2 347.1 89.8 339.8 98.5 331C107.2 322.2 115.4 313.2 122.5 303C129.6 292.8 134.9 281.7 141.1 270C147.3 258.3 154.6 243.2 159.5 233C164.4 222.8 166.8 216.9 170.5 208.6C174.2 200.3 177.9 191.5 181.5 183C185.1 174.5 188.6 165.3 192.1 157.5C195.6 149.7 198.9 142.8 202.5 136C206.1 129.2 209.9 123 213.5 117C217.1 111 220.5 105.3 224 100C227.5 94.7 230.9 89.6 234.5 85C238.1 80.4 241.9 75.7 245.5 72.4C249.1 69.1 251.4 67.4 256 65C260.6 62.6 267.3 59.7 273 58C278.7 56.3 282.1 55.4 290 54.8C297.9 54.2 309.2 54.4 320.5 54.3C331.8 54.2 345.1 54.4 358 54.3C370.9 54.2 388.9 53.7 398 53.5C407.1 53.3 407.2 52.7 412.5 53C417.8 53.3 424.5 53.9 429.5 55.5C434.5 57.1 438.9 59.7 442.5 62.5C446.1 65.3 448.2 68.7 451 72.4C453.8 76.2 456.7 80.4 459.5 85C462.3 89.6 465.2 95 468 100C470.8 105 473.7 109.7 476.5 115C479.3 120.3 482.2 126.3 485 132C487.8 137.7 490.7 143 493.5 149C496.3 155 499.6 162.3 502.1 168C504.6 173.7 506.4 178 508.5 183C510.6 188 512.4 192.2 514.9 198C517.4 203.8 520.4 210.7 523.5 218C526.6 225.3 530.3 234 533.5 242C536.7 250 539.3 258.2 542.5 266C545.7 273.8 548.5 279.7 552.5 289C556.5 298.3 561.8 311.8 566.5 322C571.2 332.2 575.4 340.8 580.5 350C585.6 359.2 591.5 370 597 377.5C602.5 385 607.6 390.6 613.5 395C619.4 399.4 626.4 402.2 632.1 404C637.8 405.8 642.3 406.1 647.5 406C652.7 405.9 660.8 403.9 663.5 403.5" stroke-width="22.4"/><path d="M328 405.5C331.3 404.2 341.3 401.9 348 398C354.7 394.1 359.7 389.1 368 382C376.3 374.9 388.3 364.1 398 355.6C407.7 347.1 417.3 339.8 426 331C434.7 322.2 442.9 313.2 450 303C457.1 292.8 462.4 281.7 468.6 270C474.8 258.3 482.1 243.2 487 233C491.9 222.8 494.3 216.9 498 208.6C501.7 200.3 505.4 191.5 509 183C512.6 174.5 516.1 165.3 519.6 157.5C523.1 149.7 526.4 142.8 530 136C533.6 129.2 537.4 123 541 117C544.6 111 548 105.3 551.5 100C555 94.7 558.4 89.6 562 85C565.6 80.4 569.4 75.7 573 72.4C576.6 69.1 578.9 67.4 583.5 65C588.1 62.6 594.8 59.7 600.5 58C606.2 56.3 609.6 55.4 617.5 54.8C625.4 54.2 636.7 54.4 648 54.3C659.3 54.2 672.6 54.4 685.5 54.3C698.4 54.2 716.4 53.7 725.5 53.5C734.6 53.3 734.8 52.7 740 53C745.2 53.3 752 53.9 757 55.5C762 57.1 766.4 59.7 770 62.5C773.6 65.3 775.7 68.7 778.5 72.4C781.3 76.2 784.2 80.4 787 85C789.8 89.6 792.7 95 795.5 100C798.3 105 801.2 109.7 804 115C806.8 120.3 809.7 126.3 812.5 132C815.3 137.7 818.1 143 821 149C823.9 155 827.1 162.3 829.6 168C832.1 173.7 833.9 178 836 183C838.1 188 839.9 192.2 842.4 198C844.9 203.8 847.9 210.7 851 218C854.1 225.3 857.8 234 861 242C864.2 250 866.8 258.2 870 266C873.2 273.8 876 279.7 880 289C884 298.3 889.3 311.8 894 322C898.7 332.2 902.9 340.8 908 350C913.1 359.2 919 370 924.5 377.5C930 385 935.1 390.6 941 395C946.9 399.4 953.9 402.2 959.6 404C965.3 405.8 969.8 406.1 975 406C980.2 405.9 988.3 403.9 991 403.5" stroke-width="22.4"/><path d="M655.5 405.5C658.8 404.2 668.8 401.9 675.5 398C682.2 394.1 687.2 389.1 695.5 382C703.8 374.9 715.8 364.1 725.5 355.6C735.2 347.1 744.8 339.8 753.5 331C762.2 322.2 770.4 313.2 777.5 303C784.6 292.8 789.9 281.7 796.1 270C802.3 258.3 809.6 243.2 814.5 233C819.4 222.8 821.8 216.9 825.5 208.6C829.2 200.3 832.9 191.5 836.5 183C840.1 174.5 843.6 165.3 847.1 157.5C850.6 149.7 853.9 142.8 857.5 136C861.1 129.2 864.9 123 868.5 117C872.1 111 875.5 105.3 879 100C882.5 94.7 885.9 89.6 889.5 85C893.1 80.4 896.9 75.7 900.5 72.4C904.1 69.1 906.4 67.4 911 65C915.6 62.6 922.3 59.7 928 58C933.7 56.3 937.1 55.4 945 54.8C952.9 54.2 964.2 54.4 975.5 54.3C986.8 54.2 1000.1 54.4 1013 54.3C1025.9 54.2 1043.9 53.7 1053 53.5C1062.1 53.3 1062.2 52.7 1067.5 53C1072.8 53.3 1079.5 53.9 1084.5 55.5C1089.5 57.1 1093.9 59.7 1097.5 62.5C1101.1 65.3 1103.2 68.7 1106 72.4C1108.8 76.2 1111.7 80.4 1114.5 85C1117.3 89.6 1120.2 95 1123 100C1125.8 105 1128.7 109.7 1131.5 115C1134.3 120.3 1137.2 126.3 1140 132C1142.8 137.7 1145.7 143 1148.5 149C1151.3 155 1154.6 162.3 1157.1 168C1159.6 173.7 1161.4 178 1163.5 183C1165.6 188 1167.4 192.2 1169.9 198C1172.4 203.8 1175.4 210.7 1178.5 218C1181.6 225.3 1185.3 234 1188.5 242C1191.7 250 1194.3 258.2 1197.5 266C1200.7 273.8 1203.5 279.7 1207.5 289C1211.5 298.3 1216.8 311.8 1221.5 322C1226.2 332.2 1230.4 340.8 1235.5 350C1240.6 359.2 1246.5 370 1252 377.5C1257.5 385 1262.7 390.6 1268.5 395C1274.3 399.4 1281.4 402.2 1287.1 404C1292.8 405.8 1297.3 406.1 1302.5 406C1307.7 405.9 1315.8 403.9 1318.5 403.5" stroke-width="22.4"/></g><g fill="none" stroke="#d4ff00" stroke-linecap="butt" stroke-linejoin="round"><path d="M-32 97C-5.3 97 68 97.1 128 97C188 96.9 261.3 96.5 328 96.5C394.7 96.5 466.3 96.9 528 97C589.7 97.1 669.7 97 698 97" stroke-width="24"/><path d="M-32 307C-5.3 307 68 307 128 307C188 307 261.3 307 328 307C394.7 307 466.3 307 528 307C589.7 307 669.7 307 698 307" stroke-width="23"/><path d="M-319.5 52C-312.8 51.8 -291.2 51.2 -279.5 50.5C-267.8 49.8 -257.8 48.7 -249.5 48C-241.2 47.3 -236.8 46.8 -230 46.5C-223.2 46.2 -215.6 46.1 -208.5 46.5C-201.4 46.9 -194.4 48.2 -187.3 49C-180.2 49.8 -173 50.5 -166 51.5C-159 52.5 -152.1 53.5 -145 54.7C-137.9 55.9 -130.7 56.6 -123.5 58.5C-116.3 60.4 -107.3 63.9 -102 66C-96.7 68.1 -96.1 69.2 -91.5 71C-86.9 72.8 -79.8 75 -74.5 77C-69.2 79 -64.8 80.9 -59.5 83C-54.2 85.1 -49.2 87.6 -42.5 89.4C-35.8 91.2 -26.7 92.9 -19.5 94C-12.3 95.1 -9.5 95.7 0.5 96C10.5 96.3 33.8 96 40.5 96" stroke-width="19"/><path d="M8 52C14.7 51.8 36.3 51.2 48 50.5C59.7 49.8 69.8 48.7 78 48C86.2 47.3 90.7 46.8 97.5 46.5C104.3 46.2 111.9 46.1 119 46.5C126.1 46.9 133.1 48.2 140.2 49C147.3 49.8 154.5 50.5 161.5 51.5C168.5 52.5 175.4 53.5 182.5 54.7C189.6 55.9 196.8 56.6 204 58.5C211.2 60.4 220.2 63.9 225.5 66C230.8 68.1 231.4 69.2 236 71C240.6 72.8 247.7 75 253 77C258.3 79 262.7 80.9 268 83C273.3 85.1 278.3 87.6 285 89.4C291.7 91.2 300.8 92.9 308 94C315.2 95.1 318 95.7 328 96C338 96.3 361.3 96 368 96" stroke-width="19"/><path d="M335.5 52C342.2 51.8 363.8 51.2 375.5 50.5C387.2 49.8 397.2 48.7 405.5 48C413.8 47.3 418.2 46.8 425 46.5C431.8 46.2 439.4 46.1 446.5 46.5C453.6 46.9 460.6 48.2 467.7 49C474.8 49.8 481.9 50.5 489 51.5C496.1 52.5 502.9 53.5 510 54.7C517.1 55.9 524.3 56.6 531.5 58.5C538.7 60.4 547.7 63.9 553 66C558.3 68.1 558.9 69.2 563.5 71C568.1 72.8 575.2 75 580.5 77C585.8 79 590.2 80.9 595.5 83C600.8 85.1 605.8 87.6 612.5 89.4C619.2 91.2 628.3 92.9 635.5 94C642.7 95.1 645.5 95.7 655.5 96C665.5 96.3 688.8 96 695.5 96" stroke-width="19"/><path d="M663 52C669.7 51.8 691.3 51.2 703 50.5C714.7 49.8 724.8 48.7 733 48C741.2 47.3 745.7 46.8 752.5 46.5C759.3 46.2 766.9 46.1 774 46.5C781.1 46.9 788.1 48.2 795.2 49C802.3 49.8 809.5 50.5 816.5 51.5C823.5 52.5 830.4 53.5 837.5 54.7C844.6 55.9 851.8 56.6 859 58.5C866.2 60.4 875.2 63.9 880.5 66C885.8 68.1 886.4 69.2 891 71C895.6 72.8 902.7 75 908 77C913.3 79 917.7 80.9 923 83C928.3 85.1 933.3 87.6 940 89.4C946.7 91.2 955.8 92.9 963 94C970.2 95.1 973 95.7 983 96C993 96.3 1016.3 96 1023 96" stroke-width="19"/><path d="M-299.5 97C-291.2 97 -261.2 96.7 -249.5 97C-237.8 97.3 -234.8 98 -229.5 99C-224.2 100 -221 101 -217.5 103C-214 105 -211.5 106.6 -208.5 110.7C-205.5 114.8 -202.6 122 -199.8 127.7C-197 133.4 -194.3 139.3 -191.5 145C-188.7 150.7 -185.5 156.3 -182.7 162C-179.9 167.7 -177.4 173.3 -174.5 179C-171.6 184.7 -168.8 189.5 -165.5 196C-162.2 202.5 -158.8 208 -154.5 218C-150.2 228 -144.7 243.3 -139.5 256C-134.3 268.7 -128.8 282.2 -123.5 294C-118.2 305.8 -112.8 318.2 -107.5 327C-102.2 335.8 -97.8 342.1 -91.5 347C-85.2 351.9 -79.8 354.2 -69.5 356.5C-59.2 358.8 -43.2 359.6 -29.5 360.5C-15.8 361.4 0.8 362.4 12.5 362C24.2 361.6 30.8 360.2 40.5 358C50.2 355.8 63.3 351.7 70.5 349C77.7 346.3 79 344.8 83.5 342C88 339.2 92.7 335.5 97.5 332C102.3 328.5 107 324.2 112.5 321C118 317.8 122.5 315.2 130.5 313C138.5 310.8 155.5 308.8 160.5 308" stroke-width="10"/><path d="M28 97C36.3 97 66.3 96.7 78 97C89.7 97.3 92.7 98 98 99C103.3 100 106.5 101 110 103C113.5 105 116 106.6 119 110.7C122 114.8 124.9 122 127.7 127.7C130.5 133.4 133.2 139.3 136 145C138.8 150.7 142 156.3 144.8 162C147.6 167.7 150.1 173.3 153 179C155.9 184.7 158.7 189.5 162 196C165.3 202.5 168.7 208 173 218C177.3 228 182.8 243.3 188 256C193.2 268.7 198.7 282.2 204 294C209.3 305.8 214.7 318.2 220 327C225.3 335.8 229.7 342.1 236 347C242.3 351.9 247.7 354.2 258 356.5C268.3 358.8 284.3 359.6 298 360.5C311.7 361.4 328.3 362.4 340 362C351.7 361.6 358.3 360.2 368 358C377.7 355.8 390.8 351.7 398 349C405.2 346.3 406.5 344.8 411 342C415.5 339.2 420.2 335.5 425 332C429.8 328.5 434.5 324.2 440 321C445.5 317.8 450 315.2 458 313C466 310.8 483 308.8 488 308" stroke-width="10"/><path d="M355.5 97C363.8 97 393.8 96.7 405.5 97C417.2 97.3 420.2 98 425.5 99C430.8 100 434 101 437.5 103C441 105 443.6 106.6 446.5 110.7C449.4 114.8 452.4 122 455.2 127.7C458 133.4 460.7 139.3 463.5 145C466.3 150.7 469.5 156.3 472.3 162C475.1 167.7 477.6 173.3 480.5 179C483.4 184.7 486.2 189.5 489.5 196C492.8 202.5 496.2 208 500.5 218C504.8 228 510.3 243.3 515.5 256C520.7 268.7 526.2 282.2 531.5 294C536.8 305.8 542.2 318.2 547.5 327C552.8 335.8 557.2 342.1 563.5 347C569.8 351.9 575.2 354.2 585.5 356.5C595.8 358.8 611.8 359.6 625.5 360.5C639.2 361.4 655.8 362.4 667.5 362C679.2 361.6 685.8 360.2 695.5 358C705.2 355.8 718.3 351.7 725.5 349C732.7 346.3 734 344.8 738.5 342C743 339.2 747.7 335.5 752.5 332C757.3 328.5 762 324.2 767.5 321C773 317.8 777.5 315.2 785.5 313C793.5 310.8 810.5 308.8 815.5 308" stroke-width="10"/><path d="M683 97C691.3 97 721.3 96.7 733 97C744.7 97.3 747.7 98 753 99C758.3 100 761.5 101 765 103C768.5 105 771 106.6 774 110.7C777 114.8 779.9 122 782.7 127.7C785.5 133.4 788.1 139.3 791 145C793.9 150.7 797 156.3 799.8 162C802.6 167.7 805.1 173.3 808 179C810.9 184.7 813.7 189.5 817 196C820.3 202.5 823.7 208 828 218C832.3 228 837.8 243.3 843 256C848.2 268.7 853.7 282.2 859 294C864.3 305.8 869.7 318.2 875 327C880.3 335.8 884.7 342.1 891 347C897.3 351.9 902.7 354.2 913 356.5C923.3 358.8 939.3 359.6 953 360.5C966.7 361.4 983.3 362.4 995 362C1006.7 361.6 1013.3 360.2 1023 358C1032.7 355.8 1045.8 351.7 1053 349C1060.2 346.3 1061.5 344.8 1066 342C1070.5 339.2 1075.2 335.5 1080 332C1084.8 328.5 1089.5 324.2 1095 321C1100.5 317.8 1105 315.2 1113 313C1121 310.8 1138 308.8 1143 308" stroke-width="10"/><path d="M-289.5 98C-281.2 98 -251.2 97.5 -239.5 98C-227.8 98.5 -224.8 99.7 -219.5 101C-214.2 102.3 -210.8 103.8 -207.5 106C-204.2 108.2 -202.2 110 -199.5 114C-196.8 118 -194.2 124.5 -191.5 130C-188.8 135.5 -186.3 141.3 -183.5 147C-180.7 152.7 -177.3 158.3 -174.5 164C-171.7 169.7 -169.3 175.3 -166.5 181C-163.7 186.7 -160.8 191.5 -157.5 198C-154.2 204.5 -150.8 210 -146.5 220C-142.2 230 -136.7 245.3 -131.5 258C-126.3 270.7 -120.8 284 -115.5 296C-110.2 308 -105.2 320.3 -99.5 330C-93.8 339.7 -88.2 348.2 -81.5 354C-74.8 359.8 -69 362.3 -59.5 365C-50 367.7 -36.5 369 -24.5 370C-12.5 371 1.7 371.7 12.5 371C23.3 370.3 30.8 368.7 40.5 366C50.2 363.3 62.8 358.2 70.5 355C78.2 351.8 81.5 350.2 86.5 347C91.5 343.8 95.7 339.7 100.5 336C105.3 332.3 109.7 328.5 115.5 325C121.3 321.5 127.2 317.7 135.5 315C143.8 312.3 160.5 310 165.5 309" stroke-width="10"/><path d="M38 98C46.3 98 76.3 97.5 88 98C99.7 98.5 102.7 99.7 108 101C113.3 102.3 116.7 103.8 120 106C123.3 108.2 125.3 110 128 114C130.7 118 133.3 124.5 136 130C138.7 135.5 141.2 141.3 144 147C146.8 152.7 150.2 158.3 153 164C155.8 169.7 158.2 175.3 161 181C163.8 186.7 166.7 191.5 170 198C173.3 204.5 176.7 210 181 220C185.3 230 190.8 245.3 196 258C201.2 270.7 206.7 284 212 296C217.3 308 222.3 320.3 228 330C233.7 339.7 239.3 348.2 246 354C252.7 359.8 258.5 362.3 268 365C277.5 367.7 291 369 303 370C315 371 329.2 371.7 340 371C350.8 370.3 358.3 368.7 368 366C377.7 363.3 390.3 358.2 398 355C405.7 351.8 409 350.2 414 347C419 343.8 423.2 339.7 428 336C432.8 332.3 437.2 328.5 443 325C448.8 321.5 454.7 317.7 463 315C471.3 312.3 488 310 493 309" stroke-width="10"/><path d="M365.5 98C373.8 98 403.8 97.5 415.5 98C427.2 98.5 430.2 99.7 435.5 101C440.8 102.3 444.2 103.8 447.5 106C450.8 108.2 452.8 110 455.5 114C458.2 118 460.8 124.5 463.5 130C466.2 135.5 468.7 141.3 471.5 147C474.3 152.7 477.7 158.3 480.5 164C483.3 169.7 485.7 175.3 488.5 181C491.3 186.7 494.2 191.5 497.5 198C500.8 204.5 504.2 210 508.5 220C512.8 230 518.3 245.3 523.5 258C528.7 270.7 534.2 284 539.5 296C544.8 308 549.8 320.3 555.5 330C561.2 339.7 566.8 348.2 573.5 354C580.2 359.8 586 362.3 595.5 365C605 367.7 618.5 369 630.5 370C642.5 371 656.7 371.7 667.5 371C678.3 370.3 685.8 368.7 695.5 366C705.2 363.3 717.8 358.2 725.5 355C733.2 351.8 736.5 350.2 741.5 347C746.5 343.8 750.7 339.7 755.5 336C760.3 332.3 764.7 328.5 770.5 325C776.3 321.5 782.2 317.7 790.5 315C798.8 312.3 815.5 310 820.5 309" stroke-width="10"/><path d="M693 98C701.3 98 731.3 97.5 743 98C754.7 98.5 757.7 99.7 763 101C768.3 102.3 771.7 103.8 775 106C778.3 108.2 780.3 110 783 114C785.7 118 788.3 124.5 791 130C793.7 135.5 796.2 141.3 799 147C801.8 152.7 805.2 158.3 808 164C810.8 169.7 813.2 175.3 816 181C818.8 186.7 821.7 191.5 825 198C828.3 204.5 831.7 210 836 220C840.3 230 845.8 245.3 851 258C856.2 270.7 861.7 284 867 296C872.3 308 877.3 320.3 883 330C888.7 339.7 894.3 348.2 901 354C907.7 359.8 913.5 362.3 923 365C932.5 367.7 946 369 958 370C970 371 984.2 371.7 995 371C1005.8 370.3 1013.3 368.7 1023 366C1032.7 363.3 1045.3 358.2 1053 355C1060.7 351.8 1064 350.2 1069 347C1074 343.8 1078.2 339.7 1083 336C1087.8 332.3 1092.2 328.5 1098 325C1103.8 321.5 1109.7 317.7 1118 315C1126.3 312.3 1143 310 1148 309" stroke-width="10"/><path d="M-61.5 370C-57.8 372 -48.2 379.2 -39.5 382C-30.8 384.8 -19.5 386.7 -9.5 387C0.5 387.3 11.2 386.3 20.5 384C29.8 381.7 42.2 374.8 46.5 373" stroke-width="18"/><path d="M266 370C269.7 372 279.3 379.2 288 382C296.7 384.8 308 386.7 318 387C328 387.3 338.7 386.3 348 384C357.3 381.7 369.7 374.8 374 373" stroke-width="18"/><path d="M593.5 370C597.2 372 606.8 379.2 615.5 382C624.2 384.8 635.5 386.7 645.5 387C655.5 387.3 666.2 386.3 675.5 384C684.8 381.7 697.2 374.8 701.5 373" stroke-width="18"/><path d="M-347 404C-343.7 403.5 -337 405.3 -327 401C-317 396.7 -298.7 385.2 -287 378C-275.3 370.8 -266.8 363.2 -257 358C-247.2 352.8 -240.3 349.6 -228.5 346.7C-216.7 343.8 -199 342.9 -186 340.5C-173 338.1 -160.8 335.4 -150.5 332.6C-140.2 329.8 -132.1 325.4 -124 323.5C-115.9 321.6 -118.2 321.2 -102 321C-85.8 320.8 -52.8 321.8 -27 322C-1.2 322.2 36.3 322.3 53 322C69.7 321.7 67.2 321.2 73 320C78.8 318.8 82.7 316.8 88 315C93.3 313.2 102.2 310 105 309" stroke-width="8"/><path d="M-19.5 404C-16.2 403.5 -9.5 405.3 0.5 401C10.5 396.7 28.8 385.2 40.5 378C52.2 370.8 60.8 363.2 70.5 358C80.2 352.8 87.2 349.6 99 346.7C110.8 343.8 128.5 342.9 141.5 340.5C154.5 338.1 166.7 335.4 177 332.6C187.3 329.8 195.4 325.4 203.5 323.5C211.6 321.6 209.3 321.2 225.5 321C241.7 320.8 274.7 321.8 300.5 322C326.3 322.2 363.8 322.3 380.5 322C397.2 321.7 394.7 321.2 400.5 320C406.3 318.8 410.2 316.8 415.5 315C420.8 313.2 429.7 310 432.5 309" stroke-width="8"/><path d="M308 404C311.3 403.5 318 405.3 328 401C338 396.7 356.3 385.2 368 378C379.7 370.8 388.2 363.2 398 358C407.8 352.8 414.7 349.6 426.5 346.7C438.3 343.8 456 342.9 469 340.5C482 338.1 494.2 335.4 504.5 332.6C514.8 329.8 522.9 325.4 531 323.5C539.1 321.6 536.8 321.2 553 321C569.2 320.8 602.2 321.8 628 322C653.8 322.2 691.3 322.3 708 322C724.7 321.7 722.2 321.2 728 320C733.8 318.8 737.7 316.8 743 315C748.3 313.2 757.2 310 760 309" stroke-width="8"/><path d="M635.5 404C638.8 403.5 645.5 405.3 655.5 401C665.5 396.7 683.8 385.2 695.5 378C707.2 370.8 715.8 363.2 725.5 358C735.2 352.8 742.2 349.6 754 346.7C765.8 343.8 783.5 342.9 796.5 340.5C809.5 338.1 821.7 335.4 832 332.6C842.3 329.8 850.4 325.4 858.5 323.5C866.6 321.6 864.3 321.2 880.5 321C896.7 320.8 929.7 321.8 955.5 322C981.3 322.2 1018.8 322.3 1035.5 322C1052.2 321.7 1049.7 321.2 1055.5 320C1061.3 318.8 1065.2 316.8 1070.5 315C1075.8 313.2 1084.7 310 1087.5 309" stroke-width="8"/><path d="M-347 406C-343.7 405.8 -337 408 -327 405C-317 402 -298.7 393.5 -287 388C-275.3 382.5 -265 375.6 -257 372C-249 368.4 -247.9 368.2 -239 366.5C-230.1 364.8 -215.2 364.7 -203.5 362C-191.8 359.3 -177.3 353.7 -168.5 350.5C-159.7 347.3 -157.9 345.8 -150.5 343C-143.1 340.2 -132.1 336.4 -124 334C-115.9 331.6 -118.2 329.7 -102 328.5C-85.8 327.3 -52.8 327.2 -27 327C-1.2 326.8 36 327.3 53 327C70 326.7 68.7 326.5 75 325C81.3 323.5 85.3 320.5 91 318C96.7 315.5 106 311.3 109 310" stroke-width="9"/><path d="M-19.5 406C-16.2 405.8 -9.5 408 0.5 405C10.5 402 28.8 393.5 40.5 388C52.2 382.5 62.5 375.6 70.5 372C78.5 368.4 79.6 368.2 88.5 366.5C97.4 364.8 112.2 364.7 124 362C135.8 359.3 150.2 353.7 159 350.5C167.8 347.3 169.6 345.8 177 343C184.4 340.2 195.4 336.4 203.5 334C211.6 331.6 209.3 329.7 225.5 328.5C241.7 327.3 274.7 327.2 300.5 327C326.3 326.8 363.5 327.3 380.5 327C397.5 326.7 396.2 326.5 402.5 325C408.8 323.5 412.8 320.5 418.5 318C424.2 315.5 433.5 311.3 436.5 310" stroke-width="9"/><path d="M308 406C311.3 405.8 318 408 328 405C338 402 356.3 393.5 368 388C379.7 382.5 390 375.6 398 372C406 368.4 407.1 368.2 416 366.5C424.9 364.8 439.8 364.7 451.5 362C463.2 359.3 477.7 353.7 486.5 350.5C495.3 347.3 497.1 345.8 504.5 343C511.9 340.2 522.9 336.4 531 334C539.1 331.6 536.8 329.7 553 328.5C569.2 327.3 602.2 327.2 628 327C653.8 326.8 691 327.3 708 327C725 326.7 723.7 326.5 730 325C736.3 323.5 740.3 320.5 746 318C751.7 315.5 761 311.3 764 310" stroke-width="9"/><path d="M635.5 406C638.8 405.8 645.5 408 655.5 405C665.5 402 683.8 393.5 695.5 388C707.2 382.5 717.5 375.6 725.5 372C733.5 368.4 734.6 368.2 743.5 366.5C752.4 364.8 767.2 364.7 779 362C790.8 359.3 805.2 353.7 814 350.5C822.8 347.3 824.6 345.8 832 343C839.4 340.2 850.4 336.4 858.5 334C866.6 331.6 864.3 329.7 880.5 328.5C896.7 327.3 929.7 327.2 955.5 327C981.3 326.8 1018.5 327.3 1035.5 327C1052.5 326.7 1051.2 326.5 1057.5 325C1063.8 323.5 1067.8 320.5 1073.5 318C1079.2 315.5 1088.5 311.3 1091.5 310" stroke-width="9"/><path d="M-369.5 307C-364.5 306.5 -348.7 305.8 -339.5 304C-330.3 302.2 -323.2 298.9 -314.5 296C-305.8 293.1 -297 291.4 -287.5 286.7C-278 282 -266.4 274.6 -257.5 268C-248.5 261.4 -241.6 254.5 -233.8 247C-226 239.5 -217.5 230.2 -210.5 223C-203.5 215.8 -196.8 209.2 -191.5 204C-186.2 198.8 -182.8 197.3 -178.5 191.6C-174.2 185.9 -169.8 177.1 -165.5 170C-161.2 162.9 -157.1 156.1 -152.9 149C-148.7 141.9 -144.7 134.1 -140.5 127.7C-136.3 121.3 -131.8 116 -127.5 110.7C-123.2 105.4 -118.8 100.6 -114.5 96C-110.2 91.4 -105.3 86.6 -101.8 83C-98.3 79.4 -97.2 77.8 -93.5 74.5C-89.8 71.2 -85.2 66.2 -79.5 63C-73.8 59.8 -67 57 -59.5 55C-52 53 -44.5 51.7 -34.5 51C-24.5 50.3 -5.3 51 0.5 51" stroke-width="11"/><path d="M-42 307C-37 306.5 -21.2 305.8 -12 304C-2.8 302.2 4.3 298.9 13 296C21.7 293.1 30.5 291.4 40 286.7C49.5 282 61 274.6 70 268C79 261.4 85.9 254.5 93.7 247C101.5 239.5 110 230.2 117 223C124 215.8 130.7 209.2 136 204C141.3 198.8 144.7 197.3 149 191.6C153.3 185.9 157.7 177.1 162 170C166.3 162.9 170.4 156.1 174.6 149C178.8 141.9 182.8 134.1 187 127.7C191.2 121.3 195.7 116 200 110.7C204.3 105.4 208.7 100.6 213 96C217.3 91.4 222.2 86.6 225.7 83C229.2 79.4 230.3 77.8 234 74.5C237.7 71.2 242.3 66.2 248 63C253.7 59.8 260.5 57 268 55C275.5 53 283 51.7 293 51C303 50.3 322.2 51 328 51" stroke-width="11"/><path d="M285.5 307C290.5 306.5 306.3 305.8 315.5 304C324.7 302.2 331.8 298.9 340.5 296C349.2 293.1 358 291.4 367.5 286.7C377 282 388.6 274.6 397.5 268C406.4 261.4 413.4 254.5 421.2 247C429 239.5 437.4 230.2 444.5 223C451.6 215.8 458.2 209.2 463.5 204C468.8 198.8 472.2 197.3 476.5 191.6C480.8 185.9 485.2 177.1 489.5 170C493.8 162.9 497.9 156.1 502.1 149C506.3 141.9 510.3 134.1 514.5 127.7C518.7 121.3 523.2 116 527.5 110.7C531.8 105.4 536.2 100.6 540.5 96C544.8 91.4 549.7 86.6 553.2 83C556.7 79.4 557.8 77.8 561.5 74.5C565.2 71.2 569.8 66.2 575.5 63C581.2 59.8 588 57 595.5 55C603 53 610.5 51.7 620.5 51C630.5 50.3 649.7 51 655.5 51" stroke-width="11"/><path d="M613 307C618 306.5 633.8 305.8 643 304C652.2 302.2 659.3 298.9 668 296C676.7 293.1 685.5 291.4 695 286.7C704.5 282 716 274.6 725 268C734 261.4 740.9 254.5 748.7 247C756.5 239.5 765 230.2 772 223C779 215.8 785.7 209.2 791 204C796.3 198.8 799.7 197.3 804 191.6C808.3 185.9 812.7 177.1 817 170C821.3 162.9 825.4 156.1 829.6 149C833.8 141.9 837.8 134.1 842 127.7C846.2 121.3 850.7 116 855 110.7C859.3 105.4 863.7 100.6 868 96C872.3 91.4 877.2 86.6 880.7 83C884.2 79.4 885.3 77.8 889 74.5C892.7 71.2 897.3 66.2 903 63C908.7 59.8 915.5 57 923 55C930.5 53 938 51.7 948 51C958 50.3 977.2 51 983 51" stroke-width="11"/><path d="M-359.5 312C-353.7 311.7 -334.5 311.5 -324.5 310C-314.5 308.5 -307.7 305.7 -299.5 303C-291.3 300.3 -284.5 298.5 -275.5 294C-266.5 289.5 -254.3 282.5 -245.5 276C-236.7 269.5 -230.2 262.5 -222.5 255C-214.8 247.5 -206.5 238.2 -199.5 231C-192.5 223.8 -185.8 217.3 -180.5 212C-175.2 206.7 -171.8 204.7 -167.5 199C-163.2 193.3 -158.7 185 -154.5 178C-150.3 171 -146.5 164 -142.5 157C-138.5 150 -134.5 142.5 -130.5 136C-126.5 129.5 -122.5 123.7 -118.5 118C-114.5 112.3 -110.5 107 -106.5 102C-102.5 97 -98.3 92.2 -94.5 88C-90.7 83.8 -88 80.8 -83.5 77C-79 73.2 -73.5 68.5 -67.5 65C-61.5 61.5 -55.5 58.2 -47.5 56C-39.5 53.8 -29.2 52.8 -19.5 52C-9.8 51.2 5.5 51.6 10.5 51.5" stroke-width="11"/><path d="M-32 312C-26.2 311.7 -7 311.5 3 310C13 308.5 19.8 305.7 28 303C36.2 300.3 43 298.5 52 294C61 289.5 73.2 282.5 82 276C90.8 269.5 97.3 262.5 105 255C112.7 247.5 121 238.2 128 231C135 223.8 141.7 217.3 147 212C152.3 206.7 155.7 204.7 160 199C164.3 193.3 168.8 185 173 178C177.2 171 181 164 185 157C189 150 193 142.5 197 136C201 129.5 205 123.7 209 118C213 112.3 217 107 221 102C225 97 229.2 92.2 233 88C236.8 83.8 239.5 80.8 244 77C248.5 73.2 254 68.5 260 65C266 61.5 272 58.2 280 56C288 53.8 298.3 52.8 308 52C317.7 51.2 333 51.6 338 51.5" stroke-width="11"/><path d="M295.5 312C301.3 311.7 320.5 311.5 330.5 310C340.5 308.5 347.3 305.7 355.5 303C363.7 300.3 370.5 298.5 379.5 294C388.5 289.5 400.7 282.5 409.5 276C418.3 269.5 424.8 262.5 432.5 255C440.2 247.5 448.5 238.2 455.5 231C462.5 223.8 469.2 217.3 474.5 212C479.8 206.7 483.2 204.7 487.5 199C491.8 193.3 496.3 185 500.5 178C504.7 171 508.5 164 512.5 157C516.5 150 520.5 142.5 524.5 136C528.5 129.5 532.5 123.7 536.5 118C540.5 112.3 544.5 107 548.5 102C552.5 97 556.7 92.2 560.5 88C564.3 83.8 567 80.8 571.5 77C576 73.2 581.5 68.5 587.5 65C593.5 61.5 599.5 58.2 607.5 56C615.5 53.8 625.8 52.8 635.5 52C645.2 51.2 660.5 51.6 665.5 51.5" stroke-width="11"/><path d="M623 312C628.8 311.7 648 311.5 658 310C668 308.5 674.8 305.7 683 303C691.2 300.3 698 298.5 707 294C716 289.5 728.2 282.5 737 276C745.8 269.5 752.3 262.5 760 255C767.7 247.5 776 238.2 783 231C790 223.8 796.7 217.3 802 212C807.3 206.7 810.7 204.7 815 199C819.3 193.3 823.8 185 828 178C832.2 171 836 164 840 157C844 150 848 142.5 852 136C856 129.5 860 123.7 864 118C868 112.3 872 107 876 102C880 97 884.2 92.2 888 88C891.8 83.8 894.5 80.8 899 77C903.5 73.2 909 68.5 915 65C921 61.5 927 58.2 935 56C943 53.8 953.3 52.8 963 52C972.7 51.2 988 51.6 993 51.5" stroke-width="11"/><path d="M-654.5 405.5C-651.2 404.2 -641.2 401.9 -634.5 398C-627.8 394.1 -622.8 389.1 -614.5 382C-606.2 374.9 -594.2 364.1 -584.5 355.6C-574.8 347.1 -565.2 339.8 -556.5 331C-547.8 322.2 -539.6 313.2 -532.5 303C-525.4 292.8 -520.1 281.7 -513.9 270C-507.7 258.3 -500.4 243.2 -495.5 233C-490.6 222.8 -488.2 216.9 -484.5 208.6C-480.8 200.3 -477.1 191.5 -473.5 183C-469.9 174.5 -466.4 165.3 -462.9 157.5C-459.4 149.7 -456.1 142.8 -452.5 136C-448.9 129.2 -445.1 123 -441.5 117C-437.9 111 -434.5 105.3 -431 100C-427.5 94.7 -424.1 89.6 -420.5 85C-416.9 80.4 -413.1 75.7 -409.5 72.4C-405.9 69.1 -403.6 67.4 -399 65C-394.4 62.6 -387.7 59.7 -382 58C-376.3 56.3 -372.9 55.4 -365 54.8C-357.1 54.2 -345.8 54.4 -334.5 54.3C-323.2 54.2 -309.9 54.4 -297 54.3C-284.1 54.2 -266.1 53.7 -257 53.5C-247.9 53.3 -247.8 52.7 -242.5 53C-237.2 53.3 -230.5 53.9 -225.5 55.5C-220.5 57.1 -216.1 59.7 -212.5 62.5C-208.9 65.3 -206.8 68.7 -204 72.4C-201.2 76.2 -198.3 80.4 -195.5 85C-192.7 89.6 -189.8 95 -187 100C-184.2 105 -181.3 109.7 -178.5 115C-175.7 120.3 -172.8 126.3 -170 132C-167.2 137.7 -164.3 143 -161.5 149C-158.7 155 -155.4 162.3 -152.9 168C-150.4 173.7 -148.6 178 -146.5 183C-144.4 188 -142.6 192.2 -140.1 198C-137.6 203.8 -134.6 210.7 -131.5 218C-128.4 225.3 -124.7 234 -121.5 242C-118.3 250 -115.7 258.2 -112.5 266C-109.3 273.8 -106.5 279.7 -102.5 289C-98.5 298.3 -93.2 311.8 -88.5 322C-83.8 332.2 -79.6 340.8 -74.5 350C-69.4 359.2 -63.5 370 -58 377.5C-52.5 385 -47.3 390.6 -41.5 395C-35.7 399.4 -28.6 402.2 -22.9 404C-17.2 405.8 -12.7 406.1 -7.5 406C-2.3 405.9 5.8 403.9 8.5 403.5" stroke-width="20"/><path d="M-327 405.5C-323.7 404.2 -313.7 401.9 -307 398C-300.3 394.1 -295.3 389.1 -287 382C-278.7 374.9 -266.7 364.1 -257 355.6C-247.3 347.1 -237.7 339.8 -229 331C-220.3 322.2 -212.1 313.2 -205 303C-197.9 292.8 -192.6 281.7 -186.4 270C-180.2 258.3 -172.9 243.2 -168 233C-163.1 222.8 -160.7 216.9 -157 208.6C-153.3 200.3 -149.6 191.5 -146 183C-142.4 174.5 -138.9 165.3 -135.4 157.5C-131.9 149.7 -128.6 142.8 -125 136C-121.4 129.2 -117.6 123 -114 117C-110.4 111 -107 105.3 -103.5 100C-100 94.7 -96.6 89.6 -93 85C-89.4 80.4 -85.6 75.7 -82 72.4C-78.4 69.1 -76.1 67.4 -71.5 65C-66.9 62.6 -60.2 59.7 -54.5 58C-48.8 56.3 -45.4 55.4 -37.5 54.8C-29.6 54.2 -18.3 54.4 -7 54.3C4.3 54.2 17.6 54.4 30.5 54.3C43.4 54.2 61.4 53.7 70.5 53.5C79.6 53.3 79.8 52.7 85 53C90.2 53.3 97 53.9 102 55.5C107 57.1 111.4 59.7 115 62.5C118.6 65.3 120.7 68.7 123.5 72.4C126.3 76.2 129.2 80.4 132 85C134.8 89.6 137.7 95 140.5 100C143.3 105 146.2 109.7 149 115C151.8 120.3 154.7 126.3 157.5 132C160.3 137.7 163.2 143 166 149C168.8 155 172.1 162.3 174.6 168C177.1 173.7 178.9 178 181 183C183.1 188 184.9 192.2 187.4 198C189.9 203.8 192.9 210.7 196 218C199.1 225.3 202.8 234 206 242C209.2 250 211.8 258.2 215 266C218.2 273.8 221 279.7 225 289C229 298.3 234.3 311.8 239 322C243.7 332.2 247.9 340.8 253 350C258.1 359.2 264 370 269.5 377.5C275 385 280.2 390.6 286 395C291.8 399.4 298.9 402.2 304.6 404C310.3 405.8 314.8 406.1 320 406C325.2 405.9 333.3 403.9 336 403.5" stroke-width="20"/><path d="M0.5 405.5C3.8 404.2 13.8 401.9 20.5 398C27.2 394.1 32.2 389.1 40.5 382C48.8 374.9 60.8 364.1 70.5 355.6C80.2 347.1 89.8 339.8 98.5 331C107.2 322.2 115.4 313.2 122.5 303C129.6 292.8 134.9 281.7 141.1 270C147.3 258.3 154.6 243.2 159.5 233C164.4 222.8 166.8 216.9 170.5 208.6C174.2 200.3 177.9 191.5 181.5 183C185.1 174.5 188.6 165.3 192.1 157.5C195.6 149.7 198.9 142.8 202.5 136C206.1 129.2 209.9 123 213.5 117C217.1 111 220.5 105.3 224 100C227.5 94.7 230.9 89.6 234.5 85C238.1 80.4 241.9 75.7 245.5 72.4C249.1 69.1 251.4 67.4 256 65C260.6 62.6 267.3 59.7 273 58C278.7 56.3 282.1 55.4 290 54.8C297.9 54.2 309.2 54.4 320.5 54.3C331.8 54.2 345.1 54.4 358 54.3C370.9 54.2 388.9 53.7 398 53.5C407.1 53.3 407.2 52.7 412.5 53C417.8 53.3 424.5 53.9 429.5 55.5C434.5 57.1 438.9 59.7 442.5 62.5C446.1 65.3 448.2 68.7 451 72.4C453.8 76.2 456.7 80.4 459.5 85C462.3 89.6 465.2 95 468 100C470.8 105 473.7 109.7 476.5 115C479.3 120.3 482.2 126.3 485 132C487.8 137.7 490.7 143 493.5 149C496.3 155 499.6 162.3 502.1 168C504.6 173.7 506.4 178 508.5 183C510.6 188 512.4 192.2 514.9 198C517.4 203.8 520.4 210.7 523.5 218C526.6 225.3 530.3 234 533.5 242C536.7 250 539.3 258.2 542.5 266C545.7 273.8 548.5 279.7 552.5 289C556.5 298.3 561.8 311.8 566.5 322C571.2 332.2 575.4 340.8 580.5 350C585.6 359.2 591.5 370 597 377.5C602.5 385 607.6 390.6 613.5 395C619.4 399.4 626.4 402.2 632.1 404C637.8 405.8 642.3 406.1 647.5 406C652.7 405.9 660.8 403.9 663.5 403.5" stroke-width="20"/><path d="M328 405.5C331.3 404.2 341.3 401.9 348 398C354.7 394.1 359.7 389.1 368 382C376.3 374.9 388.3 364.1 398 355.6C407.7 347.1 417.3 339.8 426 331C434.7 322.2 442.9 313.2 450 303C457.1 292.8 462.4 281.7 468.6 270C474.8 258.3 482.1 243.2 487 233C491.9 222.8 494.3 216.9 498 208.6C501.7 200.3 505.4 191.5 509 183C512.6 174.5 516.1 165.3 519.6 157.5C523.1 149.7 526.4 142.8 530 136C533.6 129.2 537.4 123 541 117C544.6 111 548 105.3 551.5 100C555 94.7 558.4 89.6 562 85C565.6 80.4 569.4 75.7 573 72.4C576.6 69.1 578.9 67.4 583.5 65C588.1 62.6 594.8 59.7 600.5 58C606.2 56.3 609.6 55.4 617.5 54.8C625.4 54.2 636.7 54.4 648 54.3C659.3 54.2 672.6 54.4 685.5 54.3C698.4 54.2 716.4 53.7 725.5 53.5C734.6 53.3 734.8 52.7 740 53C745.2 53.3 752 53.9 757 55.5C762 57.1 766.4 59.7 770 62.5C773.6 65.3 775.7 68.7 778.5 72.4C781.3 76.2 784.2 80.4 787 85C789.8 89.6 792.7 95 795.5 100C798.3 105 801.2 109.7 804 115C806.8 120.3 809.7 126.3 812.5 132C815.3 137.7 818.1 143 821 149C823.9 155 827.1 162.3 829.6 168C832.1 173.7 833.9 178 836 183C838.1 188 839.9 192.2 842.4 198C844.9 203.8 847.9 210.7 851 218C854.1 225.3 857.8 234 861 242C864.2 250 866.8 258.2 870 266C873.2 273.8 876 279.7 880 289C884 298.3 889.3 311.8 894 322C898.7 332.2 902.9 340.8 908 350C913.1 359.2 919 370 924.5 377.5C930 385 935.1 390.6 941 395C946.9 399.4 953.9 402.2 959.6 404C965.3 405.8 969.8 406.1 975 406C980.2 405.9 988.3 403.9 991 403.5" stroke-width="20"/><path d="M655.5 405.5C658.8 404.2 668.8 401.9 675.5 398C682.2 394.1 687.2 389.1 695.5 382C703.8 374.9 715.8 364.1 725.5 355.6C735.2 347.1 744.8 339.8 753.5 331C762.2 322.2 770.4 313.2 777.5 303C784.6 292.8 789.9 281.7 796.1 270C802.3 258.3 809.6 243.2 814.5 233C819.4 222.8 821.8 216.9 825.5 208.6C829.2 200.3 832.9 191.5 836.5 183C840.1 174.5 843.6 165.3 847.1 157.5C850.6 149.7 853.9 142.8 857.5 136C861.1 129.2 864.9 123 868.5 117C872.1 111 875.5 105.3 879 100C882.5 94.7 885.9 89.6 889.5 85C893.1 80.4 896.9 75.7 900.5 72.4C904.1 69.1 906.4 67.4 911 65C915.6 62.6 922.3 59.7 928 58C933.7 56.3 937.1 55.4 945 54.8C952.9 54.2 964.2 54.4 975.5 54.3C986.8 54.2 1000.1 54.4 1013 54.3C1025.9 54.2 1043.9 53.7 1053 53.5C1062.1 53.3 1062.2 52.7 1067.5 53C1072.8 53.3 1079.5 53.9 1084.5 55.5C1089.5 57.1 1093.9 59.7 1097.5 62.5C1101.1 65.3 1103.2 68.7 1106 72.4C1108.8 76.2 1111.7 80.4 1114.5 85C1117.3 89.6 1120.2 95 1123 100C1125.8 105 1128.7 109.7 1131.5 115C1134.3 120.3 1137.2 126.3 1140 132C1142.8 137.7 1145.7 143 1148.5 149C1151.3 155 1154.6 162.3 1157.1 168C1159.6 173.7 1161.4 178 1163.5 183C1165.6 188 1167.4 192.2 1169.9 198C1172.4 203.8 1175.4 210.7 1178.5 218C1181.6 225.3 1185.3 234 1188.5 242C1191.7 250 1194.3 258.2 1197.5 266C1200.7 273.8 1203.5 279.7 1207.5 289C1211.5 298.3 1216.8 311.8 1221.5 322C1226.2 332.2 1230.4 340.8 1235.5 350C1240.6 359.2 1246.5 370 1252 377.5C1257.5 385 1262.7 390.6 1268.5 395C1274.3 399.4 1281.4 402.2 1287.1 404C1292.8 405.8 1297.3 406.1 1302.5 406C1307.7 405.9 1315.8 403.9 1318.5 403.5" stroke-width="20"/></g><g fill="none" stroke="#ffdc00" stroke-linecap="butt" stroke-linejoin="round"><path d="M-32 97C-5.3 97 68 97.1 128 97C188 96.9 261.3 96.5 328 96.5C394.7 96.5 466.3 96.9 528 97C589.7 97.1 669.7 97 698 97" stroke-width="8.6"/><path d="M-32 307C-5.3 307 68 307 128 307C188 307 261.3 307 328 307C394.7 307 466.3 307 528 307C589.7 307 669.7 307 698 307" stroke-width="5.3"/><path d="M-319.5 52C-312.8 51.8 -291.2 51.2 -279.5 50.5C-267.8 49.8 -257.8 48.7 -249.5 48C-241.2 47.3 -236.8 46.8 -230 46.5C-223.2 46.2 -215.6 46.1 -208.5 46.5C-201.4 46.9 -194.4 48.2 -187.3 49C-180.2 49.8 -173 50.5 -166 51.5C-159 52.5 -152.1 53.5 -145 54.7C-137.9 55.9 -130.7 56.6 -123.5 58.5C-116.3 60.4 -107.3 63.9 -102 66C-96.7 68.1 -96.1 69.2 -91.5 71C-86.9 72.8 -79.8 75 -74.5 77C-69.2 79 -64.8 80.9 -59.5 83C-54.2 85.1 -49.2 87.6 -42.5 89.4C-35.8 91.2 -26.7 92.9 -19.5 94C-12.3 95.1 -9.5 95.7 0.5 96C10.5 96.3 33.8 96 40.5 96" stroke-width="2.8"/><path d="M8 52C14.7 51.8 36.3 51.2 48 50.5C59.7 49.8 69.8 48.7 78 48C86.2 47.3 90.7 46.8 97.5 46.5C104.3 46.2 111.9 46.1 119 46.5C126.1 46.9 133.1 48.2 140.2 49C147.3 49.8 154.5 50.5 161.5 51.5C168.5 52.5 175.4 53.5 182.5 54.7C189.6 55.9 196.8 56.6 204 58.5C211.2 60.4 220.2 63.9 225.5 66C230.8 68.1 231.4 69.2 236 71C240.6 72.8 247.7 75 253 77C258.3 79 262.7 80.9 268 83C273.3 85.1 278.3 87.6 285 89.4C291.7 91.2 300.8 92.9 308 94C315.2 95.1 318 95.7 328 96C338 96.3 361.3 96 368 96" stroke-width="2.8"/><path d="M335.5 52C342.2 51.8 363.8 51.2 375.5 50.5C387.2 49.8 397.2 48.7 405.5 48C413.8 47.3 418.2 46.8 425 46.5C431.8 46.2 439.4 46.1 446.5 46.5C453.6 46.9 460.6 48.2 467.7 49C474.8 49.8 481.9 50.5 489 51.5C496.1 52.5 502.9 53.5 510 54.7C517.1 55.9 524.3 56.6 531.5 58.5C538.7 60.4 547.7 63.9 553 66C558.3 68.1 558.9 69.2 563.5 71C568.1 72.8 575.2 75 580.5 77C585.8 79 590.2 80.9 595.5 83C600.8 85.1 605.8 87.6 612.5 89.4C619.2 91.2 628.3 92.9 635.5 94C642.7 95.1 645.5 95.7 655.5 96C665.5 96.3 688.8 96 695.5 96" stroke-width="2.8"/><path d="M663 52C669.7 51.8 691.3 51.2 703 50.5C714.7 49.8 724.8 48.7 733 48C741.2 47.3 745.7 46.8 752.5 46.5C759.3 46.2 766.9 46.1 774 46.5C781.1 46.9 788.1 48.2 795.2 49C802.3 49.8 809.5 50.5 816.5 51.5C823.5 52.5 830.4 53.5 837.5 54.7C844.6 55.9 851.8 56.6 859 58.5C866.2 60.4 875.2 63.9 880.5 66C885.8 68.1 886.4 69.2 891 71C895.6 72.8 902.7 75 908 77C913.3 79 917.7 80.9 923 83C928.3 85.1 933.3 87.6 940 89.4C946.7 91.2 955.8 92.9 963 94C970.2 95.1 973 95.7 983 96C993 96.3 1016.3 96 1023 96" stroke-width="2.8"/><path d="M-299.5 97C-291.2 97 -261.2 96.7 -249.5 97C-237.8 97.3 -234.8 98 -229.5 99C-224.2 100 -221 101 -217.5 103C-214 105 -211.5 106.6 -208.5 110.7C-205.5 114.8 -202.6 122 -199.8 127.7C-197 133.4 -194.3 139.3 -191.5 145C-188.7 150.7 -185.5 156.3 -182.7 162C-179.9 167.7 -177.4 173.3 -174.5 179C-171.6 184.7 -168.8 189.5 -165.5 196C-162.2 202.5 -158.8 208 -154.5 218C-150.2 228 -144.7 243.3 -139.5 256C-134.3 268.7 -128.8 282.2 -123.5 294C-118.2 305.8 -112.8 318.2 -107.5 327C-102.2 335.8 -97.8 342.1 -91.5 347C-85.2 351.9 -79.8 354.2 -69.5 356.5C-59.2 358.8 -43.2 359.6 -29.5 360.5C-15.8 361.4 0.8 362.4 12.5 362C24.2 361.6 30.8 360.2 40.5 358C50.2 355.8 63.3 351.7 70.5 349C77.7 346.3 79 344.8 83.5 342C88 339.2 92.7 335.5 97.5 332C102.3 328.5 107 324.2 112.5 321C118 317.8 122.5 315.2 130.5 313C138.5 310.8 155.5 308.8 160.5 308" stroke-width="1.7"/><path d="M28 97C36.3 97 66.3 96.7 78 97C89.7 97.3 92.7 98 98 99C103.3 100 106.5 101 110 103C113.5 105 116 106.6 119 110.7C122 114.8 124.9 122 127.7 127.7C130.5 133.4 133.2 139.3 136 145C138.8 150.7 142 156.3 144.8 162C147.6 167.7 150.1 173.3 153 179C155.9 184.7 158.7 189.5 162 196C165.3 202.5 168.7 208 173 218C177.3 228 182.8 243.3 188 256C193.2 268.7 198.7 282.2 204 294C209.3 305.8 214.7 318.2 220 327C225.3 335.8 229.7 342.1 236 347C242.3 351.9 247.7 354.2 258 356.5C268.3 358.8 284.3 359.6 298 360.5C311.7 361.4 328.3 362.4 340 362C351.7 361.6 358.3 360.2 368 358C377.7 355.8 390.8 351.7 398 349C405.2 346.3 406.5 344.8 411 342C415.5 339.2 420.2 335.5 425 332C429.8 328.5 434.5 324.2 440 321C445.5 317.8 450 315.2 458 313C466 310.8 483 308.8 488 308" stroke-width="1.7"/><path d="M355.5 97C363.8 97 393.8 96.7 405.5 97C417.2 97.3 420.2 98 425.5 99C430.8 100 434 101 437.5 103C441 105 443.6 106.6 446.5 110.7C449.4 114.8 452.4 122 455.2 127.7C458 133.4 460.7 139.3 463.5 145C466.3 150.7 469.5 156.3 472.3 162C475.1 167.7 477.6 173.3 480.5 179C483.4 184.7 486.2 189.5 489.5 196C492.8 202.5 496.2 208 500.5 218C504.8 228 510.3 243.3 515.5 256C520.7 268.7 526.2 282.2 531.5 294C536.8 305.8 542.2 318.2 547.5 327C552.8 335.8 557.2 342.1 563.5 347C569.8 351.9 575.2 354.2 585.5 356.5C595.8 358.8 611.8 359.6 625.5 360.5C639.2 361.4 655.8 362.4 667.5 362C679.2 361.6 685.8 360.2 695.5 358C705.2 355.8 718.3 351.7 725.5 349C732.7 346.3 734 344.8 738.5 342C743 339.2 747.7 335.5 752.5 332C757.3 328.5 762 324.2 767.5 321C773 317.8 777.5 315.2 785.5 313C793.5 310.8 810.5 308.8 815.5 308" stroke-width="1.7"/><path d="M683 97C691.3 97 721.3 96.7 733 97C744.7 97.3 747.7 98 753 99C758.3 100 761.5 101 765 103C768.5 105 771 106.6 774 110.7C777 114.8 779.9 122 782.7 127.7C785.5 133.4 788.1 139.3 791 145C793.9 150.7 797 156.3 799.8 162C802.6 167.7 805.1 173.3 808 179C810.9 184.7 813.7 189.5 817 196C820.3 202.5 823.7 208 828 218C832.3 228 837.8 243.3 843 256C848.2 268.7 853.7 282.2 859 294C864.3 305.8 869.7 318.2 875 327C880.3 335.8 884.7 342.1 891 347C897.3 351.9 902.7 354.2 913 356.5C923.3 358.8 939.3 359.6 953 360.5C966.7 361.4 983.3 362.4 995 362C1006.7 361.6 1013.3 360.2 1023 358C1032.7 355.8 1045.8 351.7 1053 349C1060.2 346.3 1061.5 344.8 1066 342C1070.5 339.2 1075.2 335.5 1080 332C1084.8 328.5 1089.5 324.2 1095 321C1100.5 317.8 1105 315.2 1113 313C1121 310.8 1138 308.8 1143 308" stroke-width="1.7"/><path d="M-289.5 98C-281.2 98 -251.2 97.5 -239.5 98C-227.8 98.5 -224.8 99.7 -219.5 101C-214.2 102.3 -210.8 103.8 -207.5 106C-204.2 108.2 -202.2 110 -199.5 114C-196.8 118 -194.2 124.5 -191.5 130C-188.8 135.5 -186.3 141.3 -183.5 147C-180.7 152.7 -177.3 158.3 -174.5 164C-171.7 169.7 -169.3 175.3 -166.5 181C-163.7 186.7 -160.8 191.5 -157.5 198C-154.2 204.5 -150.8 210 -146.5 220C-142.2 230 -136.7 245.3 -131.5 258C-126.3 270.7 -120.8 284 -115.5 296C-110.2 308 -105.2 320.3 -99.5 330C-93.8 339.7 -88.2 348.2 -81.5 354C-74.8 359.8 -69 362.3 -59.5 365C-50 367.7 -36.5 369 -24.5 370C-12.5 371 1.7 371.7 12.5 371C23.3 370.3 30.8 368.7 40.5 366C50.2 363.3 62.8 358.2 70.5 355C78.2 351.8 81.5 350.2 86.5 347C91.5 343.8 95.7 339.7 100.5 336C105.3 332.3 109.7 328.5 115.5 325C121.3 321.5 127.2 317.7 135.5 315C143.8 312.3 160.5 310 165.5 309" stroke-width="1.7"/><path d="M38 98C46.3 98 76.3 97.5 88 98C99.7 98.5 102.7 99.7 108 101C113.3 102.3 116.7 103.8 120 106C123.3 108.2 125.3 110 128 114C130.7 118 133.3 124.5 136 130C138.7 135.5 141.2 141.3 144 147C146.8 152.7 150.2 158.3 153 164C155.8 169.7 158.2 175.3 161 181C163.8 186.7 166.7 191.5 170 198C173.3 204.5 176.7 210 181 220C185.3 230 190.8 245.3 196 258C201.2 270.7 206.7 284 212 296C217.3 308 222.3 320.3 228 330C233.7 339.7 239.3 348.2 246 354C252.7 359.8 258.5 362.3 268 365C277.5 367.7 291 369 303 370C315 371 329.2 371.7 340 371C350.8 370.3 358.3 368.7 368 366C377.7 363.3 390.3 358.2 398 355C405.7 351.8 409 350.2 414 347C419 343.8 423.2 339.7 428 336C432.8 332.3 437.2 328.5 443 325C448.8 321.5 454.7 317.7 463 315C471.3 312.3 488 310 493 309" stroke-width="1.7"/><path d="M365.5 98C373.8 98 403.8 97.5 415.5 98C427.2 98.5 430.2 99.7 435.5 101C440.8 102.3 444.2 103.8 447.5 106C450.8 108.2 452.8 110 455.5 114C458.2 118 460.8 124.5 463.5 130C466.2 135.5 468.7 141.3 471.5 147C474.3 152.7 477.7 158.3 480.5 164C483.3 169.7 485.7 175.3 488.5 181C491.3 186.7 494.2 191.5 497.5 198C500.8 204.5 504.2 210 508.5 220C512.8 230 518.3 245.3 523.5 258C528.7 270.7 534.2 284 539.5 296C544.8 308 549.8 320.3 555.5 330C561.2 339.7 566.8 348.2 573.5 354C580.2 359.8 586 362.3 595.5 365C605 367.7 618.5 369 630.5 370C642.5 371 656.7 371.7 667.5 371C678.3 370.3 685.8 368.7 695.5 366C705.2 363.3 717.8 358.2 725.5 355C733.2 351.8 736.5 350.2 741.5 347C746.5 343.8 750.7 339.7 755.5 336C760.3 332.3 764.7 328.5 770.5 325C776.3 321.5 782.2 317.7 790.5 315C798.8 312.3 815.5 310 820.5 309" stroke-width="1.7"/><path d="M693 98C701.3 98 731.3 97.5 743 98C754.7 98.5 757.7 99.7 763 101C768.3 102.3 771.7 103.8 775 106C778.3 108.2 780.3 110 783 114C785.7 118 788.3 124.5 791 130C793.7 135.5 796.2 141.3 799 147C801.8 152.7 805.2 158.3 808 164C810.8 169.7 813.2 175.3 816 181C818.8 186.7 821.7 191.5 825 198C828.3 204.5 831.7 210 836 220C840.3 230 845.8 245.3 851 258C856.2 270.7 861.7 284 867 296C872.3 308 877.3 320.3 883 330C888.7 339.7 894.3 348.2 901 354C907.7 359.8 913.5 362.3 923 365C932.5 367.7 946 369 958 370C970 371 984.2 371.7 995 371C1005.8 370.3 1013.3 368.7 1023 366C1032.7 363.3 1045.3 358.2 1053 355C1060.7 351.8 1064 350.2 1069 347C1074 343.8 1078.2 339.7 1083 336C1087.8 332.3 1092.2 328.5 1098 325C1103.8 321.5 1109.7 317.7 1118 315C1126.3 312.3 1143 310 1148 309" stroke-width="1.7"/><path d="M-347 404C-343.7 403.5 -337 405.3 -327 401C-317 396.7 -298.7 385.2 -287 378C-275.3 370.8 -266.8 363.2 -257 358C-247.2 352.8 -240.3 349.6 -228.5 346.7C-216.7 343.8 -199 342.9 -186 340.5C-173 338.1 -160.8 335.4 -150.5 332.6C-140.2 329.8 -132.1 325.4 -124 323.5C-115.9 321.6 -118.2 321.2 -102 321C-85.8 320.8 -52.8 321.8 -27 322C-1.2 322.2 36.3 322.3 53 322C69.7 321.7 67.2 321.2 73 320C78.8 318.8 82.7 316.8 88 315C93.3 313.2 102.2 310 105 309" stroke-width="2.3"/><path d="M-19.5 404C-16.2 403.5 -9.5 405.3 0.5 401C10.5 396.7 28.8 385.2 40.5 378C52.2 370.8 60.8 363.2 70.5 358C80.2 352.8 87.2 349.6 99 346.7C110.8 343.8 128.5 342.9 141.5 340.5C154.5 338.1 166.7 335.4 177 332.6C187.3 329.8 195.4 325.4 203.5 323.5C211.6 321.6 209.3 321.2 225.5 321C241.7 320.8 274.7 321.8 300.5 322C326.3 322.2 363.8 322.3 380.5 322C397.2 321.7 394.7 321.2 400.5 320C406.3 318.8 410.2 316.8 415.5 315C420.8 313.2 429.7 310 432.5 309" stroke-width="2.3"/><path d="M308 404C311.3 403.5 318 405.3 328 401C338 396.7 356.3 385.2 368 378C379.7 370.8 388.2 363.2 398 358C407.8 352.8 414.7 349.6 426.5 346.7C438.3 343.8 456 342.9 469 340.5C482 338.1 494.2 335.4 504.5 332.6C514.8 329.8 522.9 325.4 531 323.5C539.1 321.6 536.8 321.2 553 321C569.2 320.8 602.2 321.8 628 322C653.8 322.2 691.3 322.3 708 322C724.7 321.7 722.2 321.2 728 320C733.8 318.8 737.7 316.8 743 315C748.3 313.2 757.2 310 760 309" stroke-width="2.3"/><path d="M635.5 404C638.8 403.5 645.5 405.3 655.5 401C665.5 396.7 683.8 385.2 695.5 378C707.2 370.8 715.8 363.2 725.5 358C735.2 352.8 742.2 349.6 754 346.7C765.8 343.8 783.5 342.9 796.5 340.5C809.5 338.1 821.7 335.4 832 332.6C842.3 329.8 850.4 325.4 858.5 323.5C866.6 321.6 864.3 321.2 880.5 321C896.7 320.8 929.7 321.8 955.5 322C981.3 322.2 1018.8 322.3 1035.5 322C1052.2 321.7 1049.7 321.2 1055.5 320C1061.3 318.8 1065.2 316.8 1070.5 315C1075.8 313.2 1084.7 310 1087.5 309" stroke-width="2.3"/><path d="M-347 406C-343.7 405.8 -337 408 -327 405C-317 402 -298.7 393.5 -287 388C-275.3 382.5 -265 375.6 -257 372C-249 368.4 -247.9 368.2 -239 366.5C-230.1 364.8 -215.2 364.7 -203.5 362C-191.8 359.3 -177.3 353.7 -168.5 350.5C-159.7 347.3 -157.9 345.8 -150.5 343C-143.1 340.2 -132.1 336.4 -124 334C-115.9 331.6 -118.2 329.7 -102 328.5C-85.8 327.3 -52.8 327.2 -27 327C-1.2 326.8 36 327.3 53 327C70 326.7 68.7 326.5 75 325C81.3 323.5 85.3 320.5 91 318C96.7 315.5 106 311.3 109 310" stroke-width="2.6"/><path d="M-19.5 406C-16.2 405.8 -9.5 408 0.5 405C10.5 402 28.8 393.5 40.5 388C52.2 382.5 62.5 375.6 70.5 372C78.5 368.4 79.6 368.2 88.5 366.5C97.4 364.8 112.2 364.7 124 362C135.8 359.3 150.2 353.7 159 350.5C167.8 347.3 169.6 345.8 177 343C184.4 340.2 195.4 336.4 203.5 334C211.6 331.6 209.3 329.7 225.5 328.5C241.7 327.3 274.7 327.2 300.5 327C326.3 326.8 363.5 327.3 380.5 327C397.5 326.7 396.2 326.5 402.5 325C408.8 323.5 412.8 320.5 418.5 318C424.2 315.5 433.5 311.3 436.5 310" stroke-width="2.6"/><path d="M308 406C311.3 405.8 318 408 328 405C338 402 356.3 393.5 368 388C379.7 382.5 390 375.6 398 372C406 368.4 407.1 368.2 416 366.5C424.9 364.8 439.8 364.7 451.5 362C463.2 359.3 477.7 353.7 486.5 350.5C495.3 347.3 497.1 345.8 504.5 343C511.9 340.2 522.9 336.4 531 334C539.1 331.6 536.8 329.7 553 328.5C569.2 327.3 602.2 327.2 628 327C653.8 326.8 691 327.3 708 327C725 326.7 723.7 326.5 730 325C736.3 323.5 740.3 320.5 746 318C751.7 315.5 761 311.3 764 310" stroke-width="2.6"/><path d="M635.5 406C638.8 405.8 645.5 408 655.5 405C665.5 402 683.8 393.5 695.5 388C707.2 382.5 717.5 375.6 725.5 372C733.5 368.4 734.6 368.2 743.5 366.5C752.4 364.8 767.2 364.7 779 362C790.8 359.3 805.2 353.7 814 350.5C822.8 347.3 824.6 345.8 832 343C839.4 340.2 850.4 336.4 858.5 334C866.6 331.6 864.3 329.7 880.5 328.5C896.7 327.3 929.7 327.2 955.5 327C981.3 326.8 1018.5 327.3 1035.5 327C1052.5 326.7 1051.2 326.5 1057.5 325C1063.8 323.5 1067.8 320.5 1073.5 318C1079.2 315.5 1088.5 311.3 1091.5 310" stroke-width="2.6"/><path d="M-369.5 307C-364.5 306.5 -348.7 305.8 -339.5 304C-330.3 302.2 -323.2 298.9 -314.5 296C-305.8 293.1 -297 291.4 -287.5 286.7C-278 282 -266.4 274.6 -257.5 268C-248.5 261.4 -241.6 254.5 -233.8 247C-226 239.5 -217.5 230.2 -210.5 223C-203.5 215.8 -196.8 209.2 -191.5 204C-186.2 198.8 -182.8 197.3 -178.5 191.6C-174.2 185.9 -169.8 177.1 -165.5 170C-161.2 162.9 -157.1 156.1 -152.9 149C-148.7 141.9 -144.7 134.1 -140.5 127.7C-136.3 121.3 -131.8 116 -127.5 110.7C-123.2 105.4 -118.8 100.6 -114.5 96C-110.2 91.4 -105.3 86.6 -101.8 83C-98.3 79.4 -97.2 77.8 -93.5 74.5C-89.8 71.2 -85.2 66.2 -79.5 63C-73.8 59.8 -67 57 -59.5 55C-52 53 -44.5 51.7 -34.5 51C-24.5 50.3 -5.3 51 0.5 51" stroke-width="1.9"/><path d="M-42 307C-37 306.5 -21.2 305.8 -12 304C-2.8 302.2 4.3 298.9 13 296C21.7 293.1 30.5 291.4 40 286.7C49.5 282 61 274.6 70 268C79 261.4 85.9 254.5 93.7 247C101.5 239.5 110 230.2 117 223C124 215.8 130.7 209.2 136 204C141.3 198.8 144.7 197.3 149 191.6C153.3 185.9 157.7 177.1 162 170C166.3 162.9 170.4 156.1 174.6 149C178.8 141.9 182.8 134.1 187 127.7C191.2 121.3 195.7 116 200 110.7C204.3 105.4 208.7 100.6 213 96C217.3 91.4 222.2 86.6 225.7 83C229.2 79.4 230.3 77.8 234 74.5C237.7 71.2 242.3 66.2 248 63C253.7 59.8 260.5 57 268 55C275.5 53 283 51.7 293 51C303 50.3 322.2 51 328 51" stroke-width="1.9"/><path d="M285.5 307C290.5 306.5 306.3 305.8 315.5 304C324.7 302.2 331.8 298.9 340.5 296C349.2 293.1 358 291.4 367.5 286.7C377 282 388.6 274.6 397.5 268C406.4 261.4 413.4 254.5 421.2 247C429 239.5 437.4 230.2 444.5 223C451.6 215.8 458.2 209.2 463.5 204C468.8 198.8 472.2 197.3 476.5 191.6C480.8 185.9 485.2 177.1 489.5 170C493.8 162.9 497.9 156.1 502.1 149C506.3 141.9 510.3 134.1 514.5 127.7C518.7 121.3 523.2 116 527.5 110.7C531.8 105.4 536.2 100.6 540.5 96C544.8 91.4 549.7 86.6 553.2 83C556.7 79.4 557.8 77.8 561.5 74.5C565.2 71.2 569.8 66.2 575.5 63C581.2 59.8 588 57 595.5 55C603 53 610.5 51.7 620.5 51C630.5 50.3 649.7 51 655.5 51" stroke-width="1.9"/><path d="M613 307C618 306.5 633.8 305.8 643 304C652.2 302.2 659.3 298.9 668 296C676.7 293.1 685.5 291.4 695 286.7C704.5 282 716 274.6 725 268C734 261.4 740.9 254.5 748.7 247C756.5 239.5 765 230.2 772 223C779 215.8 785.7 209.2 791 204C796.3 198.8 799.7 197.3 804 191.6C808.3 185.9 812.7 177.1 817 170C821.3 162.9 825.4 156.1 829.6 149C833.8 141.9 837.8 134.1 842 127.7C846.2 121.3 850.7 116 855 110.7C859.3 105.4 863.7 100.6 868 96C872.3 91.4 877.2 86.6 880.7 83C884.2 79.4 885.3 77.8 889 74.5C892.7 71.2 897.3 66.2 903 63C908.7 59.8 915.5 57 923 55C930.5 53 938 51.7 948 51C958 50.3 977.2 51 983 51" stroke-width="1.9"/><path d="M-359.5 312C-353.7 311.7 -334.5 311.5 -324.5 310C-314.5 308.5 -307.7 305.7 -299.5 303C-291.3 300.3 -284.5 298.5 -275.5 294C-266.5 289.5 -254.3 282.5 -245.5 276C-236.7 269.5 -230.2 262.5 -222.5 255C-214.8 247.5 -206.5 238.2 -199.5 231C-192.5 223.8 -185.8 217.3 -180.5 212C-175.2 206.7 -171.8 204.7 -167.5 199C-163.2 193.3 -158.7 185 -154.5 178C-150.3 171 -146.5 164 -142.5 157C-138.5 150 -134.5 142.5 -130.5 136C-126.5 129.5 -122.5 123.7 -118.5 118C-114.5 112.3 -110.5 107 -106.5 102C-102.5 97 -98.3 92.2 -94.5 88C-90.7 83.8 -88 80.8 -83.5 77C-79 73.2 -73.5 68.5 -67.5 65C-61.5 61.5 -55.5 58.2 -47.5 56C-39.5 53.8 -29.2 52.8 -19.5 52C-9.8 51.2 5.5 51.6 10.5 51.5" stroke-width="1.3"/><path d="M-32 312C-26.2 311.7 -7 311.5 3 310C13 308.5 19.8 305.7 28 303C36.2 300.3 43 298.5 52 294C61 289.5 73.2 282.5 82 276C90.8 269.5 97.3 262.5 105 255C112.7 247.5 121 238.2 128 231C135 223.8 141.7 217.3 147 212C152.3 206.7 155.7 204.7 160 199C164.3 193.3 168.8 185 173 178C177.2 171 181 164 185 157C189 150 193 142.5 197 136C201 129.5 205 123.7 209 118C213 112.3 217 107 221 102C225 97 229.2 92.2 233 88C236.8 83.8 239.5 80.8 244 77C248.5 73.2 254 68.5 260 65C266 61.5 272 58.2 280 56C288 53.8 298.3 52.8 308 52C317.7 51.2 333 51.6 338 51.5" stroke-width="1.3"/><path d="M295.5 312C301.3 311.7 320.5 311.5 330.5 310C340.5 308.5 347.3 305.7 355.5 303C363.7 300.3 370.5 298.5 379.5 294C388.5 289.5 400.7 282.5 409.5 276C418.3 269.5 424.8 262.5 432.5 255C440.2 247.5 448.5 238.2 455.5 231C462.5 223.8 469.2 217.3 474.5 212C479.8 206.7 483.2 204.7 487.5 199C491.8 193.3 496.3 185 500.5 178C504.7 171 508.5 164 512.5 157C516.5 150 520.5 142.5 524.5 136C528.5 129.5 532.5 123.7 536.5 118C540.5 112.3 544.5 107 548.5 102C552.5 97 556.7 92.2 560.5 88C564.3 83.8 567 80.8 571.5 77C576 73.2 581.5 68.5 587.5 65C593.5 61.5 599.5 58.2 607.5 56C615.5 53.8 625.8 52.8 635.5 52C645.2 51.2 660.5 51.6 665.5 51.5" stroke-width="1.3"/><path d="M623 312C628.8 311.7 648 311.5 658 310C668 308.5 674.8 305.7 683 303C691.2 300.3 698 298.5 707 294C716 289.5 728.2 282.5 737 276C745.8 269.5 752.3 262.5 760 255C767.7 247.5 776 238.2 783 231C790 223.8 796.7 217.3 802 212C807.3 206.7 810.7 204.7 815 199C819.3 193.3 823.8 185 828 178C832.2 171 836 164 840 157C844 150 848 142.5 852 136C856 129.5 860 123.7 864 118C868 112.3 872 107 876 102C880 97 884.2 92.2 888 88C891.8 83.8 894.5 80.8 899 77C903.5 73.2 909 68.5 915 65C921 61.5 927 58.2 935 56C943 53.8 953.3 52.8 963 52C972.7 51.2 988 51.6 993 51.5" stroke-width="1.3"/><path d="M-654.5 405.5C-651.2 404.2 -641.2 401.9 -634.5 398C-627.8 394.1 -622.8 389.1 -614.5 382C-606.2 374.9 -594.2 364.1 -584.5 355.6C-574.8 347.1 -565.2 339.8 -556.5 331C-547.8 322.2 -539.6 313.2 -532.5 303C-525.4 292.8 -520.1 281.7 -513.9 270C-507.7 258.3 -500.4 243.2 -495.5 233C-490.6 222.8 -488.2 216.9 -484.5 208.6C-480.8 200.3 -477.1 191.5 -473.5 183C-469.9 174.5 -466.4 165.3 -462.9 157.5C-459.4 149.7 -456.1 142.8 -452.5 136C-448.9 129.2 -445.1 123 -441.5 117C-437.9 111 -434.5 105.3 -431 100C-427.5 94.7 -424.1 89.6 -420.5 85C-416.9 80.4 -413.1 75.7 -409.5 72.4C-405.9 69.1 -403.6 67.4 -399 65C-394.4 62.6 -387.7 59.7 -382 58C-376.3 56.3 -372.9 55.4 -365 54.8C-357.1 54.2 -345.8 54.4 -334.5 54.3C-323.2 54.2 -309.9 54.4 -297 54.3C-284.1 54.2 -266.1 53.7 -257 53.5C-247.9 53.3 -247.8 52.7 -242.5 53C-237.2 53.3 -230.5 53.9 -225.5 55.5C-220.5 57.1 -216.1 59.7 -212.5 62.5C-208.9 65.3 -206.8 68.7 -204 72.4C-201.2 76.2 -198.3 80.4 -195.5 85C-192.7 89.6 -189.8 95 -187 100C-184.2 105 -181.3 109.7 -178.5 115C-175.7 120.3 -172.8 126.3 -170 132C-167.2 137.7 -164.3 143 -161.5 149C-158.7 155 -155.4 162.3 -152.9 168C-150.4 173.7 -148.6 178 -146.5 183C-144.4 188 -142.6 192.2 -140.1 198C-137.6 203.8 -134.6 210.7 -131.5 218C-128.4 225.3 -124.7 234 -121.5 242C-118.3 250 -115.7 258.2 -112.5 266C-109.3 273.8 -106.5 279.7 -102.5 289C-98.5 298.3 -93.2 311.8 -88.5 322C-83.8 332.2 -79.6 340.8 -74.5 350C-69.4 359.2 -63.5 370 -58 377.5C-52.5 385 -47.3 390.6 -41.5 395C-35.7 399.4 -28.6 402.2 -22.9 404C-17.2 405.8 -12.7 406.1 -7.5 406C-2.3 405.9 5.8 403.9 8.5 403.5" stroke-width="11.6"/><path d="M-327 405.5C-323.7 404.2 -313.7 401.9 -307 398C-300.3 394.1 -295.3 389.1 -287 382C-278.7 374.9 -266.7 364.1 -257 355.6C-247.3 347.1 -237.7 339.8 -229 331C-220.3 322.2 -212.1 313.2 -205 303C-197.9 292.8 -192.6 281.7 -186.4 270C-180.2 258.3 -172.9 243.2 -168 233C-163.1 222.8 -160.7 216.9 -157 208.6C-153.3 200.3 -149.6 191.5 -146 183C-142.4 174.5 -138.9 165.3 -135.4 157.5C-131.9 149.7 -128.6 142.8 -125 136C-121.4 129.2 -117.6 123 -114 117C-110.4 111 -107 105.3 -103.5 100C-100 94.7 -96.6 89.6 -93 85C-89.4 80.4 -85.6 75.7 -82 72.4C-78.4 69.1 -76.1 67.4 -71.5 65C-66.9 62.6 -60.2 59.7 -54.5 58C-48.8 56.3 -45.4 55.4 -37.5 54.8C-29.6 54.2 -18.3 54.4 -7 54.3C4.3 54.2 17.6 54.4 30.5 54.3C43.4 54.2 61.4 53.7 70.5 53.5C79.6 53.3 79.8 52.7 85 53C90.2 53.3 97 53.9 102 55.5C107 57.1 111.4 59.7 115 62.5C118.6 65.3 120.7 68.7 123.5 72.4C126.3 76.2 129.2 80.4 132 85C134.8 89.6 137.7 95 140.5 100C143.3 105 146.2 109.7 149 115C151.8 120.3 154.7 126.3 157.5 132C160.3 137.7 163.2 143 166 149C168.8 155 172.1 162.3 174.6 168C177.1 173.7 178.9 178 181 183C183.1 188 184.9 192.2 187.4 198C189.9 203.8 192.9 210.7 196 218C199.1 225.3 202.8 234 206 242C209.2 250 211.8 258.2 215 266C218.2 273.8 221 279.7 225 289C229 298.3 234.3 311.8 239 322C243.7 332.2 247.9 340.8 253 350C258.1 359.2 264 370 269.5 377.5C275 385 280.2 390.6 286 395C291.8 399.4 298.9 402.2 304.6 404C310.3 405.8 314.8 406.1 320 406C325.2 405.9 333.3 403.9 336 403.5" stroke-width="11.6"/><path d="M0.5 405.5C3.8 404.2 13.8 401.9 20.5 398C27.2 394.1 32.2 389.1 40.5 382C48.8 374.9 60.8 364.1 70.5 355.6C80.2 347.1 89.8 339.8 98.5 331C107.2 322.2 115.4 313.2 122.5 303C129.6 292.8 134.9 281.7 141.1 270C147.3 258.3 154.6 243.2 159.5 233C164.4 222.8 166.8 216.9 170.5 208.6C174.2 200.3 177.9 191.5 181.5 183C185.1 174.5 188.6 165.3 192.1 157.5C195.6 149.7 198.9 142.8 202.5 136C206.1 129.2 209.9 123 213.5 117C217.1 111 220.5 105.3 224 100C227.5 94.7 230.9 89.6 234.5 85C238.1 80.4 241.9 75.7 245.5 72.4C249.1 69.1 251.4 67.4 256 65C260.6 62.6 267.3 59.7 273 58C278.7 56.3 282.1 55.4 290 54.8C297.9 54.2 309.2 54.4 320.5 54.3C331.8 54.2 345.1 54.4 358 54.3C370.9 54.2 388.9 53.7 398 53.5C407.1 53.3 407.2 52.7 412.5 53C417.8 53.3 424.5 53.9 429.5 55.5C434.5 57.1 438.9 59.7 442.5 62.5C446.1 65.3 448.2 68.7 451 72.4C453.8 76.2 456.7 80.4 459.5 85C462.3 89.6 465.2 95 468 100C470.8 105 473.7 109.7 476.5 115C479.3 120.3 482.2 126.3 485 132C487.8 137.7 490.7 143 493.5 149C496.3 155 499.6 162.3 502.1 168C504.6 173.7 506.4 178 508.5 183C510.6 188 512.4 192.2 514.9 198C517.4 203.8 520.4 210.7 523.5 218C526.6 225.3 530.3 234 533.5 242C536.7 250 539.3 258.2 542.5 266C545.7 273.8 548.5 279.7 552.5 289C556.5 298.3 561.8 311.8 566.5 322C571.2 332.2 575.4 340.8 580.5 350C585.6 359.2 591.5 370 597 377.5C602.5 385 607.6 390.6 613.5 395C619.4 399.4 626.4 402.2 632.1 404C637.8 405.8 642.3 406.1 647.5 406C652.7 405.9 660.8 403.9 663.5 403.5" stroke-width="11.6"/><path d="M328 405.5C331.3 404.2 341.3 401.9 348 398C354.7 394.1 359.7 389.1 368 382C376.3 374.9 388.3 364.1 398 355.6C407.7 347.1 417.3 339.8 426 331C434.7 322.2 442.9 313.2 450 303C457.1 292.8 462.4 281.7 468.6 270C474.8 258.3 482.1 243.2 487 233C491.9 222.8 494.3 216.9 498 208.6C501.7 200.3 505.4 191.5 509 183C512.6 174.5 516.1 165.3 519.6 157.5C523.1 149.7 526.4 142.8 530 136C533.6 129.2 537.4 123 541 117C544.6 111 548 105.3 551.5 100C555 94.7 558.4 89.6 562 85C565.6 80.4 569.4 75.7 573 72.4C576.6 69.1 578.9 67.4 583.5 65C588.1 62.6 594.8 59.7 600.5 58C606.2 56.3 609.6 55.4 617.5 54.8C625.4 54.2 636.7 54.4 648 54.3C659.3 54.2 672.6 54.4 685.5 54.3C698.4 54.2 716.4 53.7 725.5 53.5C734.6 53.3 734.8 52.7 740 53C745.2 53.3 752 53.9 757 55.5C762 57.1 766.4 59.7 770 62.5C773.6 65.3 775.7 68.7 778.5 72.4C781.3 76.2 784.2 80.4 787 85C789.8 89.6 792.7 95 795.5 100C798.3 105 801.2 109.7 804 115C806.8 120.3 809.7 126.3 812.5 132C815.3 137.7 818.1 143 821 149C823.9 155 827.1 162.3 829.6 168C832.1 173.7 833.9 178 836 183C838.1 188 839.9 192.2 842.4 198C844.9 203.8 847.9 210.7 851 218C854.1 225.3 857.8 234 861 242C864.2 250 866.8 258.2 870 266C873.2 273.8 876 279.7 880 289C884 298.3 889.3 311.8 894 322C898.7 332.2 902.9 340.8 908 350C913.1 359.2 919 370 924.5 377.5C930 385 935.1 390.6 941 395C946.9 399.4 953.9 402.2 959.6 404C965.3 405.8 969.8 406.1 975 406C980.2 405.9 988.3 403.9 991 403.5" stroke-width="11.6"/><path d="M655.5 405.5C658.8 404.2 668.8 401.9 675.5 398C682.2 394.1 687.2 389.1 695.5 382C703.8 374.9 715.8 364.1 725.5 355.6C735.2 347.1 744.8 339.8 753.5 331C762.2 322.2 770.4 313.2 777.5 303C784.6 292.8 789.9 281.7 796.1 270C802.3 258.3 809.6 243.2 814.5 233C819.4 222.8 821.8 216.9 825.5 208.6C829.2 200.3 832.9 191.5 836.5 183C840.1 174.5 843.6 165.3 847.1 157.5C850.6 149.7 853.9 142.8 857.5 136C861.1 129.2 864.9 123 868.5 117C872.1 111 875.5 105.3 879 100C882.5 94.7 885.9 89.6 889.5 85C893.1 80.4 896.9 75.7 900.5 72.4C904.1 69.1 906.4 67.4 911 65C915.6 62.6 922.3 59.7 928 58C933.7 56.3 937.1 55.4 945 54.8C952.9 54.2 964.2 54.4 975.5 54.3C986.8 54.2 1000.1 54.4 1013 54.3C1025.9 54.2 1043.9 53.7 1053 53.5C1062.1 53.3 1062.2 52.7 1067.5 53C1072.8 53.3 1079.5 53.9 1084.5 55.5C1089.5 57.1 1093.9 59.7 1097.5 62.5C1101.1 65.3 1103.2 68.7 1106 72.4C1108.8 76.2 1111.7 80.4 1114.5 85C1117.3 89.6 1120.2 95 1123 100C1125.8 105 1128.7 109.7 1131.5 115C1134.3 120.3 1137.2 126.3 1140 132C1142.8 137.7 1145.7 143 1148.5 149C1151.3 155 1154.6 162.3 1157.1 168C1159.6 173.7 1161.4 178 1163.5 183C1165.6 188 1167.4 192.2 1169.9 198C1172.4 203.8 1175.4 210.7 1178.5 218C1181.6 225.3 1185.3 234 1188.5 242C1191.7 250 1194.3 258.2 1197.5 266C1200.7 273.8 1203.5 279.7 1207.5 289C1211.5 298.3 1216.8 311.8 1221.5 322C1226.2 332.2 1230.4 340.8 1235.5 350C1240.6 359.2 1246.5 370 1252 377.5C1257.5 385 1262.7 390.6 1268.5 395C1274.3 399.4 1281.4 402.2 1287.1 404C1292.8 405.8 1297.3 406.1 1302.5 406C1307.7 405.9 1315.8 403.9 1318.5 403.5" stroke-width="11.6"/><path d="M-64.5 58C-60.3 57.5 -55.3 55.6 -39.5 55C-23.7 54.4 8.8 54.5 30.5 54.3C52.2 54 77.2 53.3 90.5 53.5C103.8 53.7 107.2 55.2 110.5 55.5" stroke-width="16.2" stroke-linecap="round"/><path d="M263 58C267.2 57.5 272.2 55.6 288 55C303.8 54.4 336.3 54.5 358 54.3C379.7 54 404.7 53.3 418 53.5C431.3 53.7 434.7 55.2 438 55.5" stroke-width="16.2" stroke-linecap="round"/><path d="M590.5 58C594.7 57.5 599.7 55.6 615.5 55C631.3 54.4 663.8 54.5 685.5 54.3C707.2 54 732.2 53.3 745.5 53.5C758.8 53.7 762.2 55.2 765.5 55.5" stroke-width="16.2" stroke-linecap="round"/><path d="M-69.5 362C-67 365.7 -59.8 378 -54.5 384C-49.2 390 -43.3 394.8 -37.5 398C-31.7 401.2 -25.5 402.2 -19.5 403C-13.5 403.8 -8.2 404.3 -1.5 403C5.2 401.7 13.5 399 20.5 395C27.5 391 33.8 384.5 40.5 379C47.2 373.5 57.2 364.8 60.5 362" stroke-width="11" stroke-linecap="round"/><path d="M258 362C260.5 365.7 267.7 378 273 384C278.3 390 284.2 394.8 290 398C295.8 401.2 302 402.2 308 403C314 403.8 319.3 404.3 326 403C332.7 401.7 341 399 348 395C355 391 361.3 384.5 368 379C374.7 373.5 384.7 364.8 388 362" stroke-width="11" stroke-linecap="round"/><path d="M585.5 362C588 365.7 595.2 378 600.5 384C605.8 390 611.7 394.8 617.5 398C623.3 401.2 629.5 402.2 635.5 403C641.5 403.8 646.8 404.3 653.5 403C660.2 401.7 668.5 399 675.5 395C682.5 391 688.8 384.5 695.5 379C702.2 373.5 712.2 364.8 715.5 362" stroke-width="11" stroke-linecap="round"/><path d="M-59.5 385C-56.8 387.7 -49.5 397 -43.5 401C-37.5 405 -30.2 407.6 -23.5 409C-16.8 410.4 -10.2 410.3 -3.5 409.5C3.2 408.7 9.8 407.2 16.5 404C23.2 400.8 33.2 392.3 36.5 390" stroke-width="8.1" stroke-linecap="round"/><path d="M268 385C270.7 387.7 278 397 284 401C290 405 297.3 407.6 304 409C310.7 410.4 317.3 410.3 324 409.5C330.7 408.7 337.3 407.2 344 404C350.7 400.8 360.7 392.3 364 390" stroke-width="8.1" stroke-linecap="round"/><path d="M595.5 385C598.2 387.7 605.5 397 611.5 401C617.5 405 624.8 407.6 631.5 409C638.2 410.4 644.8 410.3 651.5 409.5C658.2 408.7 664.8 407.2 671.5 404C678.2 400.8 688.2 392.3 691.5 390" stroke-width="8.1" stroke-linecap="round"/></g><g fill="none" stroke="#ff9800" stroke-linecap="butt" stroke-linejoin="round"><path d="M-654.5 405.5C-651.2 404.2 -641.2 401.9 -634.5 398C-627.8 394.1 -622.8 389.1 -614.5 382C-606.2 374.9 -594.2 364.1 -584.5 355.6C-574.8 347.1 -565.2 339.8 -556.5 331C-547.8 322.2 -539.6 313.2 -532.5 303C-525.4 292.8 -520.1 281.7 -513.9 270C-507.7 258.3 -500.4 243.2 -495.5 233C-490.6 222.8 -488.2 216.9 -484.5 208.6C-480.8 200.3 -477.1 191.5 -473.5 183C-469.9 174.5 -466.4 165.3 -462.9 157.5C-459.4 149.7 -456.1 142.8 -452.5 136C-448.9 129.2 -445.1 123 -441.5 117C-437.9 111 -434.5 105.3 -431 100C-427.5 94.7 -424.1 89.6 -420.5 85C-416.9 80.4 -413.1 75.7 -409.5 72.4C-405.9 69.1 -403.6 67.4 -399 65C-394.4 62.6 -387.7 59.7 -382 58C-376.3 56.3 -372.9 55.4 -365 54.8C-357.1 54.2 -345.8 54.4 -334.5 54.3C-323.2 54.2 -309.9 54.4 -297 54.3C-284.1 54.2 -266.1 53.7 -257 53.5C-247.9 53.3 -247.8 52.7 -242.5 53C-237.2 53.3 -230.5 53.9 -225.5 55.5C-220.5 57.1 -216.1 59.7 -212.5 62.5C-208.9 65.3 -206.8 68.7 -204 72.4C-201.2 76.2 -198.3 80.4 -195.5 85C-192.7 89.6 -189.8 95 -187 100C-184.2 105 -181.3 109.7 -178.5 115C-175.7 120.3 -172.8 126.3 -170 132C-167.2 137.7 -164.3 143 -161.5 149C-158.7 155 -155.4 162.3 -152.9 168C-150.4 173.7 -148.6 178 -146.5 183C-144.4 188 -142.6 192.2 -140.1 198C-137.6 203.8 -134.6 210.7 -131.5 218C-128.4 225.3 -124.7 234 -121.5 242C-118.3 250 -115.7 258.2 -112.5 266C-109.3 273.8 -106.5 279.7 -102.5 289C-98.5 298.3 -93.2 311.8 -88.5 322C-83.8 332.2 -79.6 340.8 -74.5 350C-69.4 359.2 -63.5 370 -58 377.5C-52.5 385 -47.3 390.6 -41.5 395C-35.7 399.4 -28.6 402.2 -22.9 404C-17.2 405.8 -12.7 406.1 -7.5 406C-2.3 405.9 5.8 403.9 8.5 403.5" stroke-width="7.6"/><path d="M-327 405.5C-323.7 404.2 -313.7 401.9 -307 398C-300.3 394.1 -295.3 389.1 -287 382C-278.7 374.9 -266.7 364.1 -257 355.6C-247.3 347.1 -237.7 339.8 -229 331C-220.3 322.2 -212.1 313.2 -205 303C-197.9 292.8 -192.6 281.7 -186.4 270C-180.2 258.3 -172.9 243.2 -168 233C-163.1 222.8 -160.7 216.9 -157 208.6C-153.3 200.3 -149.6 191.5 -146 183C-142.4 174.5 -138.9 165.3 -135.4 157.5C-131.9 149.7 -128.6 142.8 -125 136C-121.4 129.2 -117.6 123 -114 117C-110.4 111 -107 105.3 -103.5 100C-100 94.7 -96.6 89.6 -93 85C-89.4 80.4 -85.6 75.7 -82 72.4C-78.4 69.1 -76.1 67.4 -71.5 65C-66.9 62.6 -60.2 59.7 -54.5 58C-48.8 56.3 -45.4 55.4 -37.5 54.8C-29.6 54.2 -18.3 54.4 -7 54.3C4.3 54.2 17.6 54.4 30.5 54.3C43.4 54.2 61.4 53.7 70.5 53.5C79.6 53.3 79.8 52.7 85 53C90.2 53.3 97 53.9 102 55.5C107 57.1 111.4 59.7 115 62.5C118.6 65.3 120.7 68.7 123.5 72.4C126.3 76.2 129.2 80.4 132 85C134.8 89.6 137.7 95 140.5 100C143.3 105 146.2 109.7 149 115C151.8 120.3 154.7 126.3 157.5 132C160.3 137.7 163.2 143 166 149C168.8 155 172.1 162.3 174.6 168C177.1 173.7 178.9 178 181 183C183.1 188 184.9 192.2 187.4 198C189.9 203.8 192.9 210.7 196 218C199.1 225.3 202.8 234 206 242C209.2 250 211.8 258.2 215 266C218.2 273.8 221 279.7 225 289C229 298.3 234.3 311.8 239 322C243.7 332.2 247.9 340.8 253 350C258.1 359.2 264 370 269.5 377.5C275 385 280.2 390.6 286 395C291.8 399.4 298.9 402.2 304.6 404C310.3 405.8 314.8 406.1 320 406C325.2 405.9 333.3 403.9 336 403.5" stroke-width="7.6"/><path d="M0.5 405.5C3.8 404.2 13.8 401.9 20.5 398C27.2 394.1 32.2 389.1 40.5 382C48.8 374.9 60.8 364.1 70.5 355.6C80.2 347.1 89.8 339.8 98.5 331C107.2 322.2 115.4 313.2 122.5 303C129.6 292.8 134.9 281.7 141.1 270C147.3 258.3 154.6 243.2 159.5 233C164.4 222.8 166.8 216.9 170.5 208.6C174.2 200.3 177.9 191.5 181.5 183C185.1 174.5 188.6 165.3 192.1 157.5C195.6 149.7 198.9 142.8 202.5 136C206.1 129.2 209.9 123 213.5 117C217.1 111 220.5 105.3 224 100C227.5 94.7 230.9 89.6 234.5 85C238.1 80.4 241.9 75.7 245.5 72.4C249.1 69.1 251.4 67.4 256 65C260.6 62.6 267.3 59.7 273 58C278.7 56.3 282.1 55.4 290 54.8C297.9 54.2 309.2 54.4 320.5 54.3C331.8 54.2 345.1 54.4 358 54.3C370.9 54.2 388.9 53.7 398 53.5C407.1 53.3 407.2 52.7 412.5 53C417.8 53.3 424.5 53.9 429.5 55.5C434.5 57.1 438.9 59.7 442.5 62.5C446.1 65.3 448.2 68.7 451 72.4C453.8 76.2 456.7 80.4 459.5 85C462.3 89.6 465.2 95 468 100C470.8 105 473.7 109.7 476.5 115C479.3 120.3 482.2 126.3 485 132C487.8 137.7 490.7 143 493.5 149C496.3 155 499.6 162.3 502.1 168C504.6 173.7 506.4 178 508.5 183C510.6 188 512.4 192.2 514.9 198C517.4 203.8 520.4 210.7 523.5 218C526.6 225.3 530.3 234 533.5 242C536.7 250 539.3 258.2 542.5 266C545.7 273.8 548.5 279.7 552.5 289C556.5 298.3 561.8 311.8 566.5 322C571.2 332.2 575.4 340.8 580.5 350C585.6 359.2 591.5 370 597 377.5C602.5 385 607.6 390.6 613.5 395C619.4 399.4 626.4 402.2 632.1 404C637.8 405.8 642.3 406.1 647.5 406C652.7 405.9 660.8 403.9 663.5 403.5" stroke-width="7.6"/><path d="M328 405.5C331.3 404.2 341.3 401.9 348 398C354.7 394.1 359.7 389.1 368 382C376.3 374.9 388.3 364.1 398 355.6C407.7 347.1 417.3 339.8 426 331C434.7 322.2 442.9 313.2 450 303C457.1 292.8 462.4 281.7 468.6 270C474.8 258.3 482.1 243.2 487 233C491.9 222.8 494.3 216.9 498 208.6C501.7 200.3 505.4 191.5 509 183C512.6 174.5 516.1 165.3 519.6 157.5C523.1 149.7 526.4 142.8 530 136C533.6 129.2 537.4 123 541 117C544.6 111 548 105.3 551.5 100C555 94.7 558.4 89.6 562 85C565.6 80.4 569.4 75.7 573 72.4C576.6 69.1 578.9 67.4 583.5 65C588.1 62.6 594.8 59.7 600.5 58C606.2 56.3 609.6 55.4 617.5 54.8C625.4 54.2 636.7 54.4 648 54.3C659.3 54.2 672.6 54.4 685.5 54.3C698.4 54.2 716.4 53.7 725.5 53.5C734.6 53.3 734.8 52.7 740 53C745.2 53.3 752 53.9 757 55.5C762 57.1 766.4 59.7 770 62.5C773.6 65.3 775.7 68.7 778.5 72.4C781.3 76.2 784.2 80.4 787 85C789.8 89.6 792.7 95 795.5 100C798.3 105 801.2 109.7 804 115C806.8 120.3 809.7 126.3 812.5 132C815.3 137.7 818.1 143 821 149C823.9 155 827.1 162.3 829.6 168C832.1 173.7 833.9 178 836 183C838.1 188 839.9 192.2 842.4 198C844.9 203.8 847.9 210.7 851 218C854.1 225.3 857.8 234 861 242C864.2 250 866.8 258.2 870 266C873.2 273.8 876 279.7 880 289C884 298.3 889.3 311.8 894 322C898.7 332.2 902.9 340.8 908 350C913.1 359.2 919 370 924.5 377.5C930 385 935.1 390.6 941 395C946.9 399.4 953.9 402.2 959.6 404C965.3 405.8 969.8 406.1 975 406C980.2 405.9 988.3 403.9 991 403.5" stroke-width="7.6"/><path d="M655.5 405.5C658.8 404.2 668.8 401.9 675.5 398C682.2 394.1 687.2 389.1 695.5 382C703.8 374.9 715.8 364.1 725.5 355.6C735.2 347.1 744.8 339.8 753.5 331C762.2 322.2 770.4 313.2 777.5 303C784.6 292.8 789.9 281.7 796.1 270C802.3 258.3 809.6 243.2 814.5 233C819.4 222.8 821.8 216.9 825.5 208.6C829.2 200.3 832.9 191.5 836.5 183C840.1 174.5 843.6 165.3 847.1 157.5C850.6 149.7 853.9 142.8 857.5 136C861.1 129.2 864.9 123 868.5 117C872.1 111 875.5 105.3 879 100C882.5 94.7 885.9 89.6 889.5 85C893.1 80.4 896.9 75.7 900.5 72.4C904.1 69.1 906.4 67.4 911 65C915.6 62.6 922.3 59.7 928 58C933.7 56.3 937.1 55.4 945 54.8C952.9 54.2 964.2 54.4 975.5 54.3C986.8 54.2 1000.1 54.4 1013 54.3C1025.9 54.2 1043.9 53.7 1053 53.5C1062.1 53.3 1062.2 52.7 1067.5 53C1072.8 53.3 1079.5 53.9 1084.5 55.5C1089.5 57.1 1093.9 59.7 1097.5 62.5C1101.1 65.3 1103.2 68.7 1106 72.4C1108.8 76.2 1111.7 80.4 1114.5 85C1117.3 89.6 1120.2 95 1123 100C1125.8 105 1128.7 109.7 1131.5 115C1134.3 120.3 1137.2 126.3 1140 132C1142.8 137.7 1145.7 143 1148.5 149C1151.3 155 1154.6 162.3 1157.1 168C1159.6 173.7 1161.4 178 1163.5 183C1165.6 188 1167.4 192.2 1169.9 198C1172.4 203.8 1175.4 210.7 1178.5 218C1181.6 225.3 1185.3 234 1188.5 242C1191.7 250 1194.3 258.2 1197.5 266C1200.7 273.8 1203.5 279.7 1207.5 289C1211.5 298.3 1216.8 311.8 1221.5 322C1226.2 332.2 1230.4 340.8 1235.5 350C1240.6 359.2 1246.5 370 1252 377.5C1257.5 385 1262.7 390.6 1268.5 395C1274.3 399.4 1281.4 402.2 1287.1 404C1292.8 405.8 1297.3 406.1 1302.5 406C1307.7 405.9 1315.8 403.9 1318.5 403.5" stroke-width="7.6"/><path d="M-64.5 58C-60.3 57.5 -55.3 55.6 -39.5 55C-23.7 54.4 8.8 54.5 30.5 54.3C52.2 54 77.2 53.3 90.5 53.5C103.8 53.7 107.2 55.2 110.5 55.5" stroke-width="10.6" stroke-linecap="round"/><path d="M263 58C267.2 57.5 272.2 55.6 288 55C303.8 54.4 336.3 54.5 358 54.3C379.7 54 404.7 53.3 418 53.5C431.3 53.7 434.7 55.2 438 55.5" stroke-width="10.6" stroke-linecap="round"/><path d="M590.5 58C594.7 57.5 599.7 55.6 615.5 55C631.3 54.4 663.8 54.5 685.5 54.3C707.2 54 732.2 53.3 745.5 53.5C758.8 53.7 762.2 55.2 765.5 55.5" stroke-width="10.6" stroke-linecap="round"/><path d="M-69.5 362C-67 365.7 -59.8 378 -54.5 384C-49.2 390 -43.3 394.8 -37.5 398C-31.7 401.2 -25.5 402.2 -19.5 403C-13.5 403.8 -8.2 404.3 -1.5 403C5.2 401.7 13.5 399 20.5 395C27.5 391 33.8 384.5 40.5 379C47.2 373.5 57.2 364.8 60.5 362" stroke-width="7.2" stroke-linecap="round"/><path d="M258 362C260.5 365.7 267.7 378 273 384C278.3 390 284.2 394.8 290 398C295.8 401.2 302 402.2 308 403C314 403.8 319.3 404.3 326 403C332.7 401.7 341 399 348 395C355 391 361.3 384.5 368 379C374.7 373.5 384.7 364.8 388 362" stroke-width="7.2" stroke-linecap="round"/><path d="M585.5 362C588 365.7 595.2 378 600.5 384C605.8 390 611.7 394.8 617.5 398C623.3 401.2 629.5 402.2 635.5 403C641.5 403.8 646.8 404.3 653.5 403C660.2 401.7 668.5 399 675.5 395C682.5 391 688.8 384.5 695.5 379C702.2 373.5 712.2 364.8 715.5 362" stroke-width="7.2" stroke-linecap="round"/><path d="M-59.5 385C-56.8 387.7 -49.5 397 -43.5 401C-37.5 405 -30.2 407.6 -23.5 409C-16.8 410.4 -10.2 410.3 -3.5 409.5C3.2 408.7 9.8 407.2 16.5 404C23.2 400.8 33.2 392.3 36.5 390" stroke-width="5.3" stroke-linecap="round"/><path d="M268 385C270.7 387.7 278 397 284 401C290 405 297.3 407.6 304 409C310.7 410.4 317.3 410.3 324 409.5C330.7 408.7 337.3 407.2 344 404C350.7 400.8 360.7 392.3 364 390" stroke-width="5.3" stroke-linecap="round"/><path d="M595.5 385C598.2 387.7 605.5 397 611.5 401C617.5 405 624.8 407.6 631.5 409C638.2 410.4 644.8 410.3 651.5 409.5C658.2 408.7 664.8 407.2 671.5 404C678.2 400.8 688.2 392.3 691.5 390" stroke-width="5.3" stroke-linecap="round"/></g><g fill="none" stroke="#ff4800" stroke-linecap="butt" stroke-linejoin="round"><path d="M-654.5 405.5C-651.2 404.2 -641.2 401.9 -634.5 398C-627.8 394.1 -622.8 389.1 -614.5 382C-606.2 374.9 -594.2 364.1 -584.5 355.6C-574.8 347.1 -565.2 339.8 -556.5 331C-547.8 322.2 -539.6 313.2 -532.5 303C-525.4 292.8 -520.1 281.7 -513.9 270C-507.7 258.3 -500.4 243.2 -495.5 233C-490.6 222.8 -488.2 216.9 -484.5 208.6C-480.8 200.3 -477.1 191.5 -473.5 183C-469.9 174.5 -466.4 165.3 -462.9 157.5C-459.4 149.7 -456.1 142.8 -452.5 136C-448.9 129.2 -445.1 123 -441.5 117C-437.9 111 -434.5 105.3 -431 100C-427.5 94.7 -424.1 89.6 -420.5 85C-416.9 80.4 -413.1 75.7 -409.5 72.4C-405.9 69.1 -403.6 67.4 -399 65C-394.4 62.6 -387.7 59.7 -382 58C-376.3 56.3 -372.9 55.4 -365 54.8C-357.1 54.2 -345.8 54.4 -334.5 54.3C-323.2 54.2 -309.9 54.4 -297 54.3C-284.1 54.2 -266.1 53.7 -257 53.5C-247.9 53.3 -247.8 52.7 -242.5 53C-237.2 53.3 -230.5 53.9 -225.5 55.5C-220.5 57.1 -216.1 59.7 -212.5 62.5C-208.9 65.3 -206.8 68.7 -204 72.4C-201.2 76.2 -198.3 80.4 -195.5 85C-192.7 89.6 -189.8 95 -187 100C-184.2 105 -181.3 109.7 -178.5 115C-175.7 120.3 -172.8 126.3 -170 132C-167.2 137.7 -164.3 143 -161.5 149C-158.7 155 -155.4 162.3 -152.9 168C-150.4 173.7 -148.6 178 -146.5 183C-144.4 188 -142.6 192.2 -140.1 198C-137.6 203.8 -134.6 210.7 -131.5 218C-128.4 225.3 -124.7 234 -121.5 242C-118.3 250 -115.7 258.2 -112.5 266C-109.3 273.8 -106.5 279.7 -102.5 289C-98.5 298.3 -93.2 311.8 -88.5 322C-83.8 332.2 -79.6 340.8 -74.5 350C-69.4 359.2 -63.5 370 -58 377.5C-52.5 385 -47.3 390.6 -41.5 395C-35.7 399.4 -28.6 402.2 -22.9 404C-17.2 405.8 -12.7 406.1 -7.5 406C-2.3 405.9 5.8 403.9 8.5 403.5" stroke-width="1.2"/><path d="M-327 405.5C-323.7 404.2 -313.7 401.9 -307 398C-300.3 394.1 -295.3 389.1 -287 382C-278.7 374.9 -266.7 364.1 -257 355.6C-247.3 347.1 -237.7 339.8 -229 331C-220.3 322.2 -212.1 313.2 -205 303C-197.9 292.8 -192.6 281.7 -186.4 270C-180.2 258.3 -172.9 243.2 -168 233C-163.1 222.8 -160.7 216.9 -157 208.6C-153.3 200.3 -149.6 191.5 -146 183C-142.4 174.5 -138.9 165.3 -135.4 157.5C-131.9 149.7 -128.6 142.8 -125 136C-121.4 129.2 -117.6 123 -114 117C-110.4 111 -107 105.3 -103.5 100C-100 94.7 -96.6 89.6 -93 85C-89.4 80.4 -85.6 75.7 -82 72.4C-78.4 69.1 -76.1 67.4 -71.5 65C-66.9 62.6 -60.2 59.7 -54.5 58C-48.8 56.3 -45.4 55.4 -37.5 54.8C-29.6 54.2 -18.3 54.4 -7 54.3C4.3 54.2 17.6 54.4 30.5 54.3C43.4 54.2 61.4 53.7 70.5 53.5C79.6 53.3 79.8 52.7 85 53C90.2 53.3 97 53.9 102 55.5C107 57.1 111.4 59.7 115 62.5C118.6 65.3 120.7 68.7 123.5 72.4C126.3 76.2 129.2 80.4 132 85C134.8 89.6 137.7 95 140.5 100C143.3 105 146.2 109.7 149 115C151.8 120.3 154.7 126.3 157.5 132C160.3 137.7 163.2 143 166 149C168.8 155 172.1 162.3 174.6 168C177.1 173.7 178.9 178 181 183C183.1 188 184.9 192.2 187.4 198C189.9 203.8 192.9 210.7 196 218C199.1 225.3 202.8 234 206 242C209.2 250 211.8 258.2 215 266C218.2 273.8 221 279.7 225 289C229 298.3 234.3 311.8 239 322C243.7 332.2 247.9 340.8 253 350C258.1 359.2 264 370 269.5 377.5C275 385 280.2 390.6 286 395C291.8 399.4 298.9 402.2 304.6 404C310.3 405.8 314.8 406.1 320 406C325.2 405.9 333.3 403.9 336 403.5" stroke-width="1.2"/><path d="M0.5 405.5C3.8 404.2 13.8 401.9 20.5 398C27.2 394.1 32.2 389.1 40.5 382C48.8 374.9 60.8 364.1 70.5 355.6C80.2 347.1 89.8 339.8 98.5 331C107.2 322.2 115.4 313.2 122.5 303C129.6 292.8 134.9 281.7 141.1 270C147.3 258.3 154.6 243.2 159.5 233C164.4 222.8 166.8 216.9 170.5 208.6C174.2 200.3 177.9 191.5 181.5 183C185.1 174.5 188.6 165.3 192.1 157.5C195.6 149.7 198.9 142.8 202.5 136C206.1 129.2 209.9 123 213.5 117C217.1 111 220.5 105.3 224 100C227.5 94.7 230.9 89.6 234.5 85C238.1 80.4 241.9 75.7 245.5 72.4C249.1 69.1 251.4 67.4 256 65C260.6 62.6 267.3 59.7 273 58C278.7 56.3 282.1 55.4 290 54.8C297.9 54.2 309.2 54.4 320.5 54.3C331.8 54.2 345.1 54.4 358 54.3C370.9 54.2 388.9 53.7 398 53.5C407.1 53.3 407.2 52.7 412.5 53C417.8 53.3 424.5 53.9 429.5 55.5C434.5 57.1 438.9 59.7 442.5 62.5C446.1 65.3 448.2 68.7 451 72.4C453.8 76.2 456.7 80.4 459.5 85C462.3 89.6 465.2 95 468 100C470.8 105 473.7 109.7 476.5 115C479.3 120.3 482.2 126.3 485 132C487.8 137.7 490.7 143 493.5 149C496.3 155 499.6 162.3 502.1 168C504.6 173.7 506.4 178 508.5 183C510.6 188 512.4 192.2 514.9 198C517.4 203.8 520.4 210.7 523.5 218C526.6 225.3 530.3 234 533.5 242C536.7 250 539.3 258.2 542.5 266C545.7 273.8 548.5 279.7 552.5 289C556.5 298.3 561.8 311.8 566.5 322C571.2 332.2 575.4 340.8 580.5 350C585.6 359.2 591.5 370 597 377.5C602.5 385 607.6 390.6 613.5 395C619.4 399.4 626.4 402.2 632.1 404C637.8 405.8 642.3 406.1 647.5 406C652.7 405.9 660.8 403.9 663.5 403.5" stroke-width="1.2"/><path d="M328 405.5C331.3 404.2 341.3 401.9 348 398C354.7 394.1 359.7 389.1 368 382C376.3 374.9 388.3 364.1 398 355.6C407.7 347.1 417.3 339.8 426 331C434.7 322.2 442.9 313.2 450 303C457.1 292.8 462.4 281.7 468.6 270C474.8 258.3 482.1 243.2 487 233C491.9 222.8 494.3 216.9 498 208.6C501.7 200.3 505.4 191.5 509 183C512.6 174.5 516.1 165.3 519.6 157.5C523.1 149.7 526.4 142.8 530 136C533.6 129.2 537.4 123 541 117C544.6 111 548 105.3 551.5 100C555 94.7 558.4 89.6 562 85C565.6 80.4 569.4 75.7 573 72.4C576.6 69.1 578.9 67.4 583.5 65C588.1 62.6 594.8 59.7 600.5 58C606.2 56.3 609.6 55.4 617.5 54.8C625.4 54.2 636.7 54.4 648 54.3C659.3 54.2 672.6 54.4 685.5 54.3C698.4 54.2 716.4 53.7 725.5 53.5C734.6 53.3 734.8 52.7 740 53C745.2 53.3 752 53.9 757 55.5C762 57.1 766.4 59.7 770 62.5C773.6 65.3 775.7 68.7 778.5 72.4C781.3 76.2 784.2 80.4 787 85C789.8 89.6 792.7 95 795.5 100C798.3 105 801.2 109.7 804 115C806.8 120.3 809.7 126.3 812.5 132C815.3 137.7 818.1 143 821 149C823.9 155 827.1 162.3 829.6 168C832.1 173.7 833.9 178 836 183C838.1 188 839.9 192.2 842.4 198C844.9 203.8 847.9 210.7 851 218C854.1 225.3 857.8 234 861 242C864.2 250 866.8 258.2 870 266C873.2 273.8 876 279.7 880 289C884 298.3 889.3 311.8 894 322C898.7 332.2 902.9 340.8 908 350C913.1 359.2 919 370 924.5 377.5C930 385 935.1 390.6 941 395C946.9 399.4 953.9 402.2 959.6 404C965.3 405.8 969.8 406.1 975 406C980.2 405.9 988.3 403.9 991 403.5" stroke-width="1.2"/><path d="M655.5 405.5C658.8 404.2 668.8 401.9 675.5 398C682.2 394.1 687.2 389.1 695.5 382C703.8 374.9 715.8 364.1 725.5 355.6C735.2 347.1 744.8 339.8 753.5 331C762.2 322.2 770.4 313.2 777.5 303C784.6 292.8 789.9 281.7 796.1 270C802.3 258.3 809.6 243.2 814.5 233C819.4 222.8 821.8 216.9 825.5 208.6C829.2 200.3 832.9 191.5 836.5 183C840.1 174.5 843.6 165.3 847.1 157.5C850.6 149.7 853.9 142.8 857.5 136C861.1 129.2 864.9 123 868.5 117C872.1 111 875.5 105.3 879 100C882.5 94.7 885.9 89.6 889.5 85C893.1 80.4 896.9 75.7 900.5 72.4C904.1 69.1 906.4 67.4 911 65C915.6 62.6 922.3 59.7 928 58C933.7 56.3 937.1 55.4 945 54.8C952.9 54.2 964.2 54.4 975.5 54.3C986.8 54.2 1000.1 54.4 1013 54.3C1025.9 54.2 1043.9 53.7 1053 53.5C1062.1 53.3 1062.2 52.7 1067.5 53C1072.8 53.3 1079.5 53.9 1084.5 55.5C1089.5 57.1 1093.9 59.7 1097.5 62.5C1101.1 65.3 1103.2 68.7 1106 72.4C1108.8 76.2 1111.7 80.4 1114.5 85C1117.3 89.6 1120.2 95 1123 100C1125.8 105 1128.7 109.7 1131.5 115C1134.3 120.3 1137.2 126.3 1140 132C1142.8 137.7 1145.7 143 1148.5 149C1151.3 155 1154.6 162.3 1157.1 168C1159.6 173.7 1161.4 178 1163.5 183C1165.6 188 1167.4 192.2 1169.9 198C1172.4 203.8 1175.4 210.7 1178.5 218C1181.6 225.3 1185.3 234 1188.5 242C1191.7 250 1194.3 258.2 1197.5 266C1200.7 273.8 1203.5 279.7 1207.5 289C1211.5 298.3 1216.8 311.8 1221.5 322C1226.2 332.2 1230.4 340.8 1235.5 350C1240.6 359.2 1246.5 370 1252 377.5C1257.5 385 1262.7 390.6 1268.5 395C1274.3 399.4 1281.4 402.2 1287.1 404C1292.8 405.8 1297.3 406.1 1302.5 406C1307.7 405.9 1315.8 403.9 1318.5 403.5" stroke-width="1.2"/><path d="M-64.5 58C-60.3 57.5 -55.3 55.6 -39.5 55C-23.7 54.4 8.8 54.5 30.5 54.3C52.2 54 77.2 53.3 90.5 53.5C103.8 53.7 107.2 55.2 110.5 55.5" stroke-width="4.8" stroke-linecap="round"/><path d="M263 58C267.2 57.5 272.2 55.6 288 55C303.8 54.4 336.3 54.5 358 54.3C379.7 54 404.7 53.3 418 53.5C431.3 53.7 434.7 55.2 438 55.5" stroke-width="4.8" stroke-linecap="round"/><path d="M590.5 58C594.7 57.5 599.7 55.6 615.5 55C631.3 54.4 663.8 54.5 685.5 54.3C707.2 54 732.2 53.3 745.5 53.5C758.8 53.7 762.2 55.2 765.5 55.5" stroke-width="4.8" stroke-linecap="round"/><path d="M85 53C87.8 53.4 97 53.9 102 55.5C107 57.1 111.4 59.7 115 62.5C118.6 65.3 120.7 68.7 123.5 72.4C126.3 76.2 129.2 80.4 132 85C134.8 89.6 137.7 95 140.5 100C143.3 105 146.2 109.7 149 115C151.8 120.3 154.7 126.3 157.5 132C160.3 137.7 163.2 143 166 149C168.8 155 172.1 162.3 174.6 168C177.1 173.7 178.9 178 181 183C183.1 188 184.9 192.2 187.4 198C189.9 203.8 192.9 210.7 196 218C199.1 225.3 202.8 234 206 242C209.2 250 211.8 258.2 215 266C218.2 273.8 221 279.7 225 289C229 298.3 234.3 311.8 239 322C243.7 332.2 247.9 340.8 253 350C258.1 359.2 266.8 372.9 269.5 377.5" stroke-width="3.4" stroke-linecap="round"/><path d="M412.5 53C415.3 53.4 424.5 53.9 429.5 55.5C434.5 57.1 438.9 59.7 442.5 62.5C446.1 65.3 448.2 68.7 451 72.4C453.8 76.2 456.7 80.4 459.5 85C462.3 89.6 465.2 95 468 100C470.8 105 473.7 109.7 476.5 115C479.3 120.3 482.2 126.3 485 132C487.8 137.7 490.7 143 493.5 149C496.3 155 499.6 162.3 502.1 168C504.6 173.7 506.4 178 508.5 183C510.6 188 512.4 192.2 514.9 198C517.4 203.8 520.4 210.7 523.5 218C526.6 225.3 530.3 234 533.5 242C536.7 250 539.3 258.2 542.5 266C545.7 273.8 548.5 279.7 552.5 289C556.5 298.3 561.8 311.8 566.5 322C571.2 332.2 575.4 340.8 580.5 350C585.6 359.2 594.2 372.9 597 377.5" stroke-width="3.4" stroke-linecap="round"/><path d="M-168 233C-166.2 228.9 -160.7 216.9 -157 208.6C-153.3 200.3 -149.6 191.5 -146 183C-142.4 174.5 -138.9 165.3 -135.4 157.5C-131.9 149.7 -128.6 142.8 -125 136C-121.4 129.2 -117.6 123 -114 117C-110.4 111 -107 105.3 -103.5 100C-100 94.7 -96.6 89.6 -93 85C-89.4 80.4 -85.6 75.7 -82 72.4C-78.4 69.1 -76.1 67.4 -71.5 65C-66.9 62.6 -60.2 59.7 -54.5 58C-48.8 56.3 -45.4 55.4 -37.5 54.8C-29.6 54.2 -12.1 54.4 -7 54.3" stroke-width="3.4" stroke-linecap="round"/><path d="M159.5 233C161.3 228.9 166.8 216.9 170.5 208.6C174.2 200.3 177.9 191.5 181.5 183C185.1 174.5 188.6 165.3 192.1 157.5C195.6 149.7 198.9 142.8 202.5 136C206.1 129.2 209.9 123 213.5 117C217.1 111 220.5 105.3 224 100C227.5 94.7 230.9 89.6 234.5 85C238.1 80.4 241.9 75.7 245.5 72.4C249.1 69.1 251.4 67.4 256 65C260.6 62.6 267.3 59.7 273 58C278.7 56.3 282.1 55.4 290 54.8C297.9 54.2 315.4 54.4 320.5 54.3" stroke-width="3.4" stroke-linecap="round"/><path d="M487 233C488.8 228.9 494.3 216.9 498 208.6C501.7 200.3 505.4 191.5 509 183C512.6 174.5 516.1 165.3 519.6 157.5C523.1 149.7 526.4 142.8 530 136C533.6 129.2 537.4 123 541 117C544.6 111 548 105.3 551.5 100C555 94.7 558.4 89.6 562 85C565.6 80.4 569.4 75.7 573 72.4C576.6 69.1 578.9 67.4 583.5 65C588.1 62.6 594.8 59.7 600.5 58C606.2 56.3 609.6 55.4 617.5 54.8C625.4 54.2 642.9 54.4 648 54.3" stroke-width="3.4" stroke-linecap="round"/></g><path d="M40 30V440M80.9 30V440M121.9 30V440M162.8 30V440M203.8 30V440M244.7 30V440M285.6 30V440M326.6 30V440M367.5 30V440M408.4 30V440M449.4 30V440M490.3 30V440M531.2 30V440M572.2 30V440M613.1 30V440M654.1 30V440" stroke="#000" stroke-width="1.6" stroke-dasharray="1.4 4" opacity="0.8" fill="none"/><path d="M0.5 0L0.5 7M0.5 448L0.5 453M17.5 0L17.5 7M17.5 448L17.5 453M34.5 0L34.5 7M34.5 448L34.5 453M51.5 0L51.5 7M51.5 448L51.5 453M68.5 0L68.5 7M68.5 448L68.5 453M85.5 0L85.5 11M85.5 448L85.5 453M102.5 0L102.5 7M102.5 448L102.5 453M119.5 0L119.5 7M119.5 448L119.5 453M136.5 0L136.5 7M136.5 448L136.5 453M153.5 0L153.5 7M153.5 448L153.5 453M170.5 0L170.5 11M170.5 448L170.5 453M187.5 0L187.5 7M187.5 448L187.5 453M204.5 0L204.5 7M204.5 448L204.5 453M221.5 0L221.5 7M221.5 448L221.5 453M238.5 0L238.5 7M238.5 448L238.5 453M255.5 0L255.5 11M255.5 448L255.5 453M272.5 0L272.5 7M272.5 448L272.5 453M289.5 0L289.5 7M289.5 448L289.5 453M306.5 0L306.5 7M306.5 448L306.5 453M323.5 0L323.5 7M323.5 448L323.5 453M340.5 0L340.5 11M340.5 448L340.5 453M357.5 0L357.5 7M357.5 448L357.5 453M374.5 0L374.5 7M374.5 448L374.5 453M391.5 0L391.5 7M391.5 448L391.5 453M408.5 0L408.5 7M408.5 448L408.5 453M425.5 0L425.5 11M425.5 448L425.5 453M442.5 0L442.5 7M442.5 448L442.5 453M459.5 0L459.5 7M459.5 448L459.5 453M476.5 0L476.5 7M476.5 448L476.5 453M493.5 0L493.5 7M493.5 448L493.5 453M510.5 0L510.5 11M510.5 448L510.5 453M527.5 0L527.5 7M527.5 448L527.5 453M544.5 0L544.5 7M544.5 448L544.5 453M561.5 0L561.5 7M561.5 448L561.5 453M578.5 0L578.5 7M578.5 448L578.5 453M595.5 0L595.5 11M595.5 448L595.5 453M612.5 0L612.5 7M612.5 448L612.5 453M629.5 0L629.5 7M629.5 448L629.5 453M646.5 0L646.5 7M646.5 448L646.5 453M663.5 0L663.5 7M663.5 448L663.5 453M0 3.5L7 3.5M673 3.5L679 3.5M0 37.5L11 37.5M673 37.5L679 37.5M0 72.5L7 72.5M673 72.5L679 72.5M0 106.5L7 106.5M673 106.5L679 106.5M0 140.5L7 140.5M673 140.5L679 140.5M0 175.5L7 175.5M673 175.5L679 175.5M0 209.5L11 209.5M673 209.5L679 209.5M0 244.5L7 244.5M673 244.5L679 244.5M0 278.5L7 278.5M673 278.5L679 278.5M0 312.5L7 312.5M673 312.5L679 312.5M0 347.5L7 347.5M673 347.5L679 347.5M0 381.5L11 381.5M673 381.5L679 381.5M0 415.5L7 415.5M673 415.5L679 415.5" stroke="#c8c8c8" stroke-width="1" fill="none" shape-rendering="crispEdges"/><path d="M0 37.5h1M17 37.5h1M34 37.5h1M51 37.5h1M68 37.5h1M85 37.5h1M102 37.5h1M119 37.5h1M136 37.5h1M153 37.5h1M170 37.5h1M187 37.5h1M204 37.5h1M221 37.5h1M238 37.5h1M255 37.5h1M272 37.5h1M289 37.5h1M306 37.5h1M323 37.5h1M340 37.5h1M357 37.5h1M374 37.5h1M391 37.5h1M408 37.5h1M425 37.5h1M442 37.5h1M459 37.5h1M476 37.5h1M493 37.5h1M510 37.5h1M527 37.5h1M544 37.5h1M561 37.5h1M578 37.5h1M595 37.5h1M612 37.5h1M629 37.5h1M646 37.5h1M663 37.5h1M0 209.5h1M17 209.5h1M34 209.5h1M51 209.5h1M68 209.5h1M85 209.5h1M102 209.5h1M119 209.5h1M136 209.5h1M153 209.5h1M170 209.5h1M187 209.5h1M204 209.5h1M221 209.5h1M238 209.5h1M255 209.5h1M272 209.5h1M289 209.5h1M306 209.5h1M323 209.5h1M340 209.5h1M357 209.5h1M374 209.5h1M391 209.5h1M408 209.5h1M425 209.5h1M442 209.5h1M459 209.5h1M476 209.5h1M493 209.5h1M510 209.5h1M527 209.5h1M544 209.5h1M561 209.5h1M578 209.5h1M595 209.5h1M612 209.5h1M629 209.5h1M646 209.5h1M663 209.5h1M0 381.5h1M17 381.5h1M34 381.5h1M51 381.5h1M68 381.5h1M85 381.5h1M102 381.5h1M119 381.5h1M136 381.5h1M153 381.5h1M170 381.5h1M187 381.5h1M204 381.5h1M221 381.5h1M238 381.5h1M255 381.5h1M272 381.5h1M289 381.5h1M306 381.5h1M323 381.5h1M340 381.5h1M357 381.5h1M374 381.5h1M391 381.5h1M408 381.5h1M425 381.5h1M442 381.5h1M459 381.5h1M476 381.5h1M493 381.5h1M510 381.5h1M527 381.5h1M544 381.5h1M561 381.5h1M578 381.5h1M595 381.5h1M612 381.5h1M629 381.5h1M646 381.5h1M663 381.5h1M85 3.5h1M85 37.5h1M85 72.5h1M85 106.5h1M85 140.5h1M85 175.5h1M85 209.5h1M85 244.5h1M85 278.5h1M85 312.5h1M85 347.5h1M85 381.5h1M85 415.5h1M170 3.5h1M170 37.5h1M170 72.5h1M170 106.5h1M170 140.5h1M170 175.5h1M170 209.5h1M170 244.5h1M170 278.5h1M170 312.5h1M170 347.5h1M170 381.5h1M170 415.5h1M255 3.5h1M255 37.5h1M255 72.5h1M255 106.5h1M255 140.5h1M255 175.5h1M255 209.5h1M255 244.5h1M255 278.5h1M255 312.5h1M255 347.5h1M255 381.5h1M255 415.5h1M340 3.5h1M340 37.5h1M340 72.5h1M340 106.5h1M340 140.5h1M340 175.5h1M340 209.5h1M340 244.5h1M340 278.5h1M340 312.5h1M340 347.5h1M340 381.5h1M340 415.5h1M425 3.5h1M425 37.5h1M425 72.5h1M425 106.5h1M425 140.5h1M425 175.5h1M425 209.5h1M425 244.5h1M425 278.5h1M425 312.5h1M425 347.5h1M425 381.5h1M425 415.5h1M510 3.5h1M510 37.5h1M510 72.5h1M510 106.5h1M510 140.5h1M510 175.5h1M510 209.5h1M510 244.5h1M510 278.5h1M510 312.5h1M510 347.5h1M510 381.5h1M510 415.5h1M595 3.5h1M595 37.5h1M595 72.5h1M595 106.5h1M595 140.5h1M595 175.5h1M595 209.5h1M595 244.5h1M595 278.5h1M595 312.5h1M595 347.5h1M595 381.5h1M595 415.5h1" stroke="#9a9a9a" stroke-width="1" fill="none" opacity="1" shape-rendering="crispEdges"/><rect x="671" y="35.9" width="8" height="4" fill="#000"/><text x="674" y="42.4" font-size="12" font-family="DejaVu Sans, sans-serif" fill="#b2b2b2" text-anchor="end" stroke="#000" stroke-width="2.2" stroke-opacity="0.55" paint-order="stroke" stroke-linejoin="round">500 mV</text><rect x="671" y="207.7" width="8" height="4" fill="#000"/><text x="674" y="214.2" font-size="12" font-family="DejaVu Sans, sans-serif" fill="#b2b2b2" text-anchor="end" stroke="#000" stroke-width="2.2" stroke-opacity="0.55" paint-order="stroke" stroke-linejoin="round">0 V</text><rect x="671" y="379.5" width="8" height="4" fill="#000"/><text x="674" y="386" font-size="12" font-family="DejaVu Sans, sans-serif" fill="#b2b2b2" text-anchor="end" stroke="#000" stroke-width="2.2" stroke-opacity="0.55" paint-order="stroke" stroke-linejoin="round">-500 mV</text><rect x="59.4" y="446" width="52.4" height="7" fill="#000"/><text x="85.6" y="450.5" font-size="12" font-family="DejaVu Sans, sans-serif" fill="#b2b2b2" text-anchor="middle" stroke="#000" stroke-width="2.2" stroke-opacity="0.55" paint-order="stroke" stroke-linejoin="round">-300 ps</text><rect x="144.4" y="446" width="52.4" height="7" fill="#000"/><text x="170.6" y="450.5" font-size="12" font-family="DejaVu Sans, sans-serif" fill="#b2b2b2" text-anchor="middle" stroke="#000" stroke-width="2.2" stroke-opacity="0.55" paint-order="stroke" stroke-linejoin="round">-200 ps</text><rect x="229.4" y="446" width="52.4" height="7" fill="#000"/><text x="255.6" y="450.5" font-size="12" font-family="DejaVu Sans, sans-serif" fill="#b2b2b2" text-anchor="middle" stroke="#000" stroke-width="2.2" stroke-opacity="0.55" paint-order="stroke" stroke-linejoin="round">-100 ps</text><rect x="328.8" y="446" width="23.6" height="7" fill="#000"/><text x="340.6" y="450.5" font-size="12" font-family="DejaVu Sans, sans-serif" fill="#b2b2b2" text-anchor="middle" stroke="#000" stroke-width="2.2" stroke-opacity="0.55" paint-order="stroke" stroke-linejoin="round">0 s</text><rect x="403" y="446" width="45.2" height="7" fill="#000"/><text x="425.6" y="450.5" font-size="12" font-family="DejaVu Sans, sans-serif" fill="#b2b2b2" text-anchor="middle" stroke="#000" stroke-width="2.2" stroke-opacity="0.55" paint-order="stroke" stroke-linejoin="round">100 ps</text><rect x="488" y="446" width="45.2" height="7" fill="#000"/><text x="510.6" y="450.5" font-size="12" font-family="DejaVu Sans, sans-serif" fill="#b2b2b2" text-anchor="middle" stroke="#000" stroke-width="2.2" stroke-opacity="0.55" paint-order="stroke" stroke-linejoin="round">200 ps</text><rect x="573" y="446" width="45.2" height="7" fill="#000"/><text x="595.6" y="450.5" font-size="12" font-family="DejaVu Sans, sans-serif" fill="#b2b2b2" text-anchor="middle" stroke="#000" stroke-width="2.2" stroke-opacity="0.55" paint-order="stroke" stroke-linejoin="round">300 ps</text><text x="10" y="383" font-size="11.500" font-family="DejaVu Sans, sans-serif" fill="#f4f4f4" stroke="#000" stroke-width="2.4" stroke-opacity="0.75" paint-order="stroke" stroke-linejoin="round" style="white-space:pre">Eye:   All Bits</text><text x="10" y="403" font-size="11.500" font-family="DejaVu Sans, sans-serif" fill="#f4f4f4" stroke="#000" stroke-width="2.4" stroke-opacity="0.75" paint-order="stroke" stroke-linejoin="round" style="white-space:pre">Offset:   0.080357</text><text x="10" y="423" font-size="11.500" font-family="DejaVu Sans, sans-serif" fill="#f4f4f4" stroke="#000" stroke-width="2.4" stroke-opacity="0.75" paint-order="stroke" stroke-linejoin="round" style="white-space:pre">UIs:   4995   Total:   4995</text></svg><svg class="zi" viewBox="0 0 34 34"><path d="M0.5 0.5 H32 Q33.5 0.5 33.5 2 V33.5 Z" fill="#4f4f4f"/><circle cx="27" cy="7" r="4" fill="none" stroke="#a8a8a8" stroke-width="1.6"/><path d="M24 10 L18 15.5" stroke="#a8a8a8" stroke-width="2.6" stroke-linecap="round"/></svg></div></div>
<div class="panel" style="left:408px;top:510px;width:661px;height:485px"><div class="tbar">Plot 2 - TIE Spectrum (Meas1)<svg class="x" viewBox="0 0 14 14"><path d="M1.5 1.5 L12.5 12.5 M12.5 1.5 L1.5 12.5" stroke="#a3a3a3" stroke-width="1.8" fill="none"/></svg></div><div class="parea"><svg width="655" height="454" viewBox="0 0 655 454"><path d="M0.5 180.6V206.4M1.5 175.3V205.9M2.5 171.7V199.1M3.5 172.2V195.8M4.5 178V221.9M5.5 180.7V244.1M6.5 195V258.4M7.5 174.5V257.9M8.5 181.1V191.5M9.5 185.3V222.3M10.5 195.1V208.8M11.5 177.2V203.2M12.5 187.7V212M13.5 192.5V206.6M14.5 190.1V221.6M15.5 190.6V231.3M16.5 192.8V264.5M17.5 183.7V264M18.5 176.7V218.6M19.5 177.2V220.2M20.5 195.1V232.7M21.5 202.1V214.7M22.5 202.6V248M23.5 180.5V216.4M24.5 213.1V285.1M25.5 195V226.5M26.5 176V214.2M27.5 181.3V222.6M28.5 187.2V222.1M29.5 183.8V234.3M30.5 204.3V236.4M31.5 196.1V233.7M32.5 200.1V255.2M33.5 189.7V254.7M34.5 194.5V212.1M35.5 171.6V211.6M36.5 201.5V254.2M37.5 208.8V253.7M38.5 183.3V240.9M39.5 226.3V240.4M40.5 188.1V227.5M41.5 184.8V216.2M42.5 185.8V201.4M43.5 166.2V200.9M44.5 180.6V202.9M45.5 181.1V238.2M46.5 192.6V203.4M47.5 190.9V290.1M48.5 188.3V289.6M49.5 188.8V202.9M50.5 181.3V233.4M51.5 181.8V256.5M52.5 182.4V318M53.5 213V271.4M54.5 195V222M55.5 195.5V229.4M56.5 198.4V232.6M57.5 232.3V278.4M58.5 198.9V233.7M59.5 184V213.2M60.5 184V201.9M61.5 201.4V260.4M62.5 210.6V283.3M63.5 199.5V259.5M64.5 198.4V219.9M65.5 212.4V246.2M66.5 191.5V233.2M67.5 192V248.3M68.5 198.1V231.3M69.5 198.6V233.8M70.5 209.2V269.5M71.5 198.1V297M72.5 195.6V248.2M73.5 197V247.7M74.5 207.7V276.6M75.5 183.5V217.5M76.5 184V270M77.5 212.1V255.5M78.5 201.5V243M79.5 203.2V220.2M80.5 197.1V219.7M81.5 197.6V250.6M82.5 212.3V249.7M83.5 212.8V252.6M84.5 186.1V217.6M85.5 180.5V236.2M86.5 200.6V235.7M87.5 208.5V229.6M88.5 196.6V235.3M89.5 197.1V220.3M90.5 207V234.5M91.5 214.7V252.7M92.5 215.2V223.7M93.5 215.4V228.8M94.5 216.8V260.4M95.5 206.5V260.7M96.5 207V261.2M97.5 199.1V241.7M98.5 195.4V215M99.5 195.9V250.8M100.5 201.6V250.3M101.5 201V271.8M102.5 205.5V271.3M103.5 214.6V292.5M104.5 202.6V241.8M105.5 204.6V219.6M106.5 189.5V232.8M107.5 189.3V221.9M108.5 196V226.6M109.5 196.5V286.6M110.5 193.5V274.9M111.5 194V238.1M112.5 202V255.4M113.5 203.1V257.2M114.5 199.1V323.5M115.5 196.3V231.6M116.5 197.9V262.5M117.5 199V247.1M118.5 197.6V248.1M119.5 213.7V259.8M120.5 202.7V259.3M121.5 201.5V222.4M122.5 196.4V212.8M123.5 211.9V238M124.5 206.2V222.1M125.5 191V214.2M126.5 191.5V236.3M127.5 202.1V262.9M128.5 202.6V244.2M129.5 217.6V246.1M130.5 215.3V286.6M131.5 215.8V246.1M132.5 198.2V229.9M133.5 198.7V237.8M134.5 201.3V237.3M135.5 201.8V251.5M136.5 211.2V232.6M137.5 206.7V221.8M138.5 212.5V279.8M139.5 211.7V279.3M140.5 184.4V275.4M141.5 184.9V224.4M142.5 189V224.6M143.5 189.5V219.7M144.5 195.1V219.2M145.5 211.9V229.3M146.5 226.8V240.2M147.5 216.7V254.3M148.5 207.6V291.3M149.5 199.1V248.7M150.5 232.3V256.7M151.5 207.4V246.5M152.5 225.9V249.1M153.5 230.2V257.3M154.5 212.9V256.8M155.5 198.1V219.3M156.5 205.7V249.7M157.5 229.7V236.5M158.5 189.8V245.9M159.5 226.7V245.4M160.5 202.9V240.9M161.5 203.8V240.4M162.5 212.6V241.4M163.5 221.4V285.1M164.5 221.9V243.9M165.5 204.6V316.7M166.5 205.1V242.2M167.5 195.5V241.7M168.5 196V237.3M169.5 217.8V238.8M170.5 218.3V228.7M171.5 208.5V259.6M172.5 197.5V288M173.5 198V281.5M174.5 214.3V281M175.5 214.5V272.2M176.5 210.6V274.9M177.5 210.2V274.4M178.5 215.9V259.3M179.5 199.9V261.3M180.5 192.7V228.7M181.5 211.2V226.2M182.5 190.9V253.4M183.5 191.4V253.4M184.5 210.6V267.9M185.5 219.7V262.1M186.5 223.2V321.8M187.5 204.4V226.5M188.5 204.9V253.5M189.5 218.2V270.9M190.5 215.2V230.9M191.5 224.7V278M192.5 237.7V272.8M193.5 205.2V272.3M194.5 205.7V246.3M195.5 205.4V392M196.5 205.9V269.5M197.5 221.5V245.6M198.5 219.8V289.7M199.5 221.9V239.5M200.5 214.8V225.8M201.5 217.8V265.5M202.5 218.6V323.5M203.5 210.3V228.8M204.5 210.5V224.4M205.5 220V262.7M206.5 228V262.2M207.5 224.6V233.6M208.5 208.4V285.5M209.5 213.6V285M210.5 219V259.6M211.5 220.8V230.2M212.5 230.7V279.7M213.5 203.4V260.8M214.5 231.9V265.2M215.5 190.3V271.8M216.5 255.8V289.1M217.5 213.4V288.6M218.5 216.9V276.1M219.5 241.9V275.6M220.5 207.2V249.8M221.5 207.7V270.9M222.5 215.3V270.4M223.5 215.8V245.8M224.5 211.1V245.3M225.5 221.2V238.9M226.5 202V240M227.5 225.7V283.5M228.5 222.1V264.9M229.5 222.6V284.5M230.5 205.5V246.4M231.5 223.6V245.1M232.5 222.2V273.4M233.5 208V231.6M234.5 220.9V255M235.5 221.4V254.5M236.5 221.9V290.1M237.5 222.5V257.1M238.5 226.3V282M239.5 220.9V235.4M240.5 218.6V307M241.5 219.1V293.4M242.5 211.4V292.9M243.5 212.8V269.1M244.5 250.7V328.7M245.5 221.5V277.7M246.5 209.2V277.2M247.5 229.1V245.7M248.5 200.2V228.6M249.5 218.2V284.7M250.5 218.7V288.7M251.5 231.1V259.6M252.5 212.3V236.5M253.5 222.9V274.6M254.5 209.9V270.2M255.5 211.5V259M256.5 210.8V275.1M257.5 226.7V274.6M258.5 227.6V286.7M259.5 227.2V286.2M260.5 202.5V250.8M261.5 203V274.8M262.5 209.8V281.9M263.5 226.6V286.9M264.5 227.2V285.3M265.5 223.7V278M266.5 224.2V261.5M267.5 231.3V261M268.5 231V257.7M269.5 217.2V257.2M270.5 212.4V254.8M271.5 212.9V301.7M272.5 228.8V310.3M273.5 218.2V240.2M274.5 227.5V252.6M275.5 228V250.3M276.5 249.8V265.4M277.5 221.4V264.8M278.5 231.3V255.2M279.5 226.3V254.7M280.5 223.8V271.1M281.5 232.9V319.7M282.5 228.3V319.2M283.5 220.8V316.8M284.5 221.3V265.6M285.5 215.1V277.2M286.5 222.3V346.5M287.5 235.8V297.4M288.5 230.5V269.4M289.5 221.7V285.9M290.5 222.2V248.7M291.5 224.4V236.1M292.5 228.5V250.9M293.5 210.2V250.4M294.5 227.3V252.8M295.5 228.4V262.1M296.5 219V244.8M297.5 221.6V250.7M298.5 222.1V254.5M299.5 232.9V289.7M300.5 234.5V289.2M301.5 237.1V335.5M302.5 228.9V335M303.5 209V276.8M304.5 239.4V276.3M305.5 227.3V273.9M306.5 212.8V251.9M307.5 222.6V278.9M308.5 226.7V250.4M309.5 227.2V282.6M310.5 224.4V282.1M311.5 225.8V297.3M312.5 226.3V302.8M313.5 220V283.2M314.5 240.1V331M315.5 228.4V266.8M316.5 232.3V270.1M317.5 229.9V267.6M318.5 226.4V246.5M319.5 226.9V277.9M320.5 219.3V277.4M321.5 219V269.7M322.5 226.9V252.9M323.5 236.9V252.4M324.5 242.7V255.1M325.5 217.1V252.8M326.5 233.8V262.9M327.5 230.9V264.5M328.5 226.4V245.4M329.5 225.4V244M330.5 220.4V254.4M331.5 224.9V264.7M332.5 222.3V264.2M333.5 229V292.9M334.5 229.5V337.5M335.5 232.6V310.6M336.5 247.3V310.1M337.5 231.2V287.2M338.5 224.2V286.7M339.5 231.1V280.2M340.5 230.3V269.5M341.5 234.1V285.1M342.5 221.3V248.7M343.5 221.8V289.5M344.5 232.3V289M345.5 229V267M346.5 242.2V277.2M347.5 251.9V278.8M348.5 228.6V328.8M349.5 237.9V268.7M350.5 238.4V387M351.5 233.6V266M352.5 224V271.3M353.5 237.9V315.1M354.5 240.9V314.6M355.5 211.6V240.4M356.5 232.9V256.3M357.5 231.6V282.1M358.5 213V258.8M359.5 213.5V243.6M360.5 237.2V255.2M361.5 236.3V257.4M362.5 232.3V291.8M363.5 229.7V258.4M364.5 246.3V279.1M365.5 218.8V259.1M366.5 244.1V259.3M367.5 248.6V292.5M368.5 225.3V284.9M369.5 225.8V253.2M370.5 219.7V269.5M371.5 220.2V294.1M372.5 234.4V257.7M373.5 236V273.1M374.5 226.6V243.1M375.5 227.1V283.2M376.5 217.9V277M377.5 250.2V267.2M378.5 232.2V249.7M379.5 226V268M380.5 264.1V277.5M381.5 241.8V264.8M382.5 241.9V271.7M383.5 239.5V304.9M384.5 222.2V282.8M385.5 240.8V296.9M386.5 245.3V296.4M387.5 241.2V287.9M388.5 260.9V287.4M389.5 252.5V314.5M390.5 251V280.3M391.5 245V267.5M392.5 231.7V260.9M393.5 225.8V289.3M394.5 226.3V293.5M395.5 226.3V246.6M396.5 228.7V266.1M397.5 231.2V269.2M398.5 248.5V276.7M399.5 231.4V286.3M400.5 234.9V298.6M401.5 227.9V241.1M402.5 228.4V280.4M403.5 245.4V277.9M404.5 234.7V271.6M405.5 241.5V271.1M406.5 226.1V251.6M407.5 246V268.8M408.5 248V307.3M409.5 228.3V281.1M410.5 249.1V273.7M411.5 242.8V336M412.5 235.1V283.5M413.5 217.5V277.9M414.5 221.2V316.6M415.5 221.7V276.4M416.5 241.7V275.9M417.5 245.8V300.4M418.5 243.5V299.9M419.5 237.4V268.4M420.5 235.2V276.2M421.5 250.8V276.2M422.5 251.3V288.9M423.5 229V288.7M424.5 229.5V291.1M425.5 252.4V290.6M426.5 245.5V287.7M427.5 260.4V274.1M428.5 241.4V266M429.5 241.9V283M430.5 242.5V276.1M431.5 239.9V275.6M432.5 244V289.2M433.5 244.5V283.6M434.5 242.1V283.1M435.5 242.6V260.5M436.5 243.1V317.1M437.5 238.9V316.6M438.5 239V324.9M439.5 256.7V324.4M440.5 239.6V267.5M441.5 232.6V254.7M442.5 233.1V279.1M443.5 258.5V270.8M444.5 242.5V266M445.5 256.3V294.8M446.5 256.9V275.9M447.5 247.7V290.2M448.5 272.5V289.7M449.5 258.8V285.9M450.5 240.2V268.1M451.5 240.7V279.3M452.5 249.4V273.3M453.5 257.1V368M454.5 246.1V300.9M455.5 246.6V279.4M456.5 235V319.1M457.5 235.5V280M458.5 241.3V304.3M459.5 241.8V275M460.5 263V285.1M461.5 258.1V307M462.5 248.5V306.5M463.5 243.5V328.6M464.5 238.1V328.1M465.5 231.2V322M466.5 256V274.5M467.5 249.8V277.8M468.5 249.7V305.3M469.5 249.4V283.3M470.5 244.7V284.2M471.5 262.1V283.7M472.5 250.5V314.8M473.5 257.2V285.5M474.5 254.1V284.7M475.5 245.1V287.4M476.5 253.1V289.5M477.5 249V260.8M478.5 227.2V277.6M479.5 252.3V263.6M480.5 261.2V273.6M481.5 258.2V303.7M482.5 240.3V298.8M483.5 247V298.3M484.5 232.8V287.5M485.5 233.3V311.2M486.5 244.7V252.8M487.5 248.2V283M488.5 248.7V299.1M489.5 249.7V296.9M490.5 275.3V297.5M491.5 251.2V289.8M492.5 263.1V280.8M493.5 254.9V296M494.5 248.2V266M495.5 242V265.5M496.5 249.2V268.6M497.5 232.3V293.6M498.5 265.3V290.3M499.5 260.9V291M500.5 244.2V316.5M501.5 238.8V274.6M502.5 259.2V306.9M503.5 259.7V330.4M504.5 240V299.8M505.5 259.9V294.4M506.5 261.3V293.9M507.5 253.8V284.9M508.5 264.2V290.5M509.5 258.2V290.7M510.5 257.3V268.6M511.5 269.1V325.9M512.5 258.9V286.8M513.5 259.4V286.8M514.5 242.1V299M515.5 243.4V298.5M516.5 234.4V306.1M517.5 274.9V305.6M518.5 275.2V303.8M519.5 274.4V280.6M520.5 255.5V279.7M521.5 248.8V285.9M522.5 242.6V287M523.5 263.5V305.3M524.5 264V362M525.5 258.4V272.6M526.5 261.4V277.9M527.5 245.4V310.5M528.5 243.6V291.1M529.5 267.9V307M530.5 239.1V275.5M531.5 269.5V332.9M532.5 250.1V278.8M533.5 239.8V278.3M534.5 235.6V281.5M535.5 249.4V323.5M536.5 240.7V298.5M537.5 256.1V285.4M538.5 246.1V288.9M539.5 249.6V297.6M540.5 250.1V284M541.5 260.1V323.1M542.5 239.6V322.6M543.5 241.2V293.6M544.5 250.2V285.9M545.5 248V299M546.5 248.5V276.4M547.5 254.8V292.1M548.5 266.2V291.6M549.5 267.3V291.2M550.5 276.4V316.5M551.5 248.8V329.9M552.5 265.2V329.4M553.5 265.7V332.6M554.5 264.3V295.8M555.5 267.6V304.2M556.5 279.1V305.7M557.5 235.2V293.6M558.5 262.9V295.2M559.5 247.7V304.6M560.5 277.9V301.6M561.5 263.4V299.6M562.5 267V309.8M563.5 252.5V293.9M564.5 260V314.3M565.5 261.9V313.8M566.5 260.6V284.3M567.5 263.6V293.9M568.5 253.3V295.4M569.5 262.3V307.4M570.5 274.2V306.9M571.5 260.2V280.2M572.5 259.9V287.2M573.5 269.5V279M574.5 249.7V367.7M575.5 255.5V367.2M576.5 258.9V294.5M577.5 246.2V280.7M578.5 246.7V350.5M579.5 264.9V303.1M580.5 265.4V320.5M581.5 293.3V327.4M582.5 249.8V326.9M583.5 251.6V261.7M584.5 252.1V305M585.5 253.2V321.4M586.5 253.7V282.4M587.5 258.3V326.2M588.5 281.2V340.5M589.5 260.7V286.5M590.5 261.2V354.5M591.5 251V270.7M592.5 271.2V311.5M593.5 252.3V301.1M594.5 253.4V345.1M595.5 253.9V320.1M596.5 268.8V319.6M597.5 258.1V294.4M598.5 259.5V277.7M599.5 260.8V277.2M600.5 246.9V291.6M601.5 251.8V317.6M602.5 265.6V319.4M603.5 261.1V310M604.5 258.3V318.2M605.5 271.8V362M606.5 272.3V301.6M607.5 255V286M608.5 255.5V292.3M609.5 262.5V307.9M610.5 262.9V304M611.5 263.7V303.5M612.5 260.5V313.6M613.5 255.7V340.7M614.5 266.5V311.7M615.5 266.1V278.9M616.5 266.6V372.7M617.5 259.8V372.2M618.5 256.4V313M619.5 250.1V341.4M620.5 250.6V301.6M621.5 243.1V304.4M622.5 266.1V316.5M623.5 263.4V316M624.5 263.9V298.7M625.5 259.3V293.6M626.5 260.5V287.7M627.5 267.8V294.1M628.5 267.7V303M629.5 258.5V296.2M630.5 257.6V303.2M631.5 274.6V309.6M632.5 251.5V317.3M633.5 271.5V316.8M634.5 267.5V305.9M635.5 266.3V288M636.5 247.5V287.5M637.5 263.9V295.8M638.5 274.8V310.6M639.5 275.3V298.9M640.5 259.4V356.5M641.5 283.5V329.8M642.5 253.9V336.7M643.5 263.3V336.2M644.5 255.9V305.5M645.5 256.4V295.7M646.5 253.7V289.6M647.5 263.8V296.1M648.5 258.5V312.4M649.5 259V342M650.5 265.5V284.2M651.5 266.6V311.5M652.5 267.4V311M653.5 268.5V326.4M654.5 279.9V325.9" stroke="#e252e4" stroke-width="1" fill="none" shape-rendering="crispEdges"/><path d="M0.5 18V205M33.7 151V209M66 3V212.8M98.7 162V216.6M131.8 31V220.5M164.5 131V224.4M197.1 119V228.2M230 184V232.1M262.9 56V236M295.5 150V239.8M328.4 83V243.7M361.1 155V247.6M393.7 192V251.4M426.9 144V255.4M459.5 99V259.2M492.2 161V263.1M524.8 140V266.9M557.8 188V270.8M590.5 141V274.7M623.4 120.5V278.5" stroke="#e252e4" stroke-width="1.5" fill="none"/><path d="M20.5 0L20.5 7M20.5 449L20.5 454M41.5 0L41.5 7M41.5 449L41.5 454M62.5 0L62.5 7M62.5 449L62.5 454M83.5 0L83.5 7M83.5 449L83.5 454M104.5 0L104.5 11M104.5 449L104.5 454M125.5 0L125.5 7M125.5 449L125.5 454M146.5 0L146.5 7M146.5 449L146.5 454M167.5 0L167.5 7M167.5 449L167.5 454M188.5 0L188.5 7M188.5 449L188.5 454M209.5 0L209.5 11M209.5 449L209.5 454M230.5 0L230.5 7M230.5 449L230.5 454M251.5 0L251.5 7M251.5 449L251.5 454M272.5 0L272.5 7M272.5 449L272.5 454M293.5 0L293.5 7M293.5 449L293.5 454M314.5 0L314.5 11M314.5 449L314.5 454M335.5 0L335.5 7M335.5 449L335.5 454M356.5 0L356.5 7M356.5 449L356.5 454M377.5 0L377.5 7M377.5 449L377.5 454M398.5 0L398.5 7M398.5 449L398.5 454M419.5 0L419.5 11M419.5 449L419.5 454M440.5 0L440.5 7M440.5 449L440.5 454M461.5 0L461.5 7M461.5 449L461.5 454M482.5 0L482.5 7M482.5 449L482.5 454M503.5 0L503.5 7M503.5 449L503.5 454M524.5 0L524.5 11M524.5 449L524.5 454M545.5 0L545.5 7M545.5 449L545.5 454M566.5 0L566.5 7M566.5 449L566.5 454M587.5 0L587.5 7M587.5 449L587.5 454M608.5 0L608.5 7M608.5 449L608.5 454M629.5 0L629.5 11M629.5 449L629.5 454M650.5 0L650.5 7M650.5 449L650.5 454M0 3.5L7 3.5M649 3.5L655 3.5M0 8.5L7 8.5M649 8.5L655 8.5M0 13.5L7 13.5M649 13.5L655 13.5M0 19.5L7 19.5M649 19.5L655 19.5M0 26.5L7 26.5M649 26.5L655 26.5M0 35.5L7 35.5M649 35.5L655 35.5M0 47.5L7 47.5M649 47.5L655 47.5M0 63.5L7 63.5M649 63.5L655 63.5M0 94.5L7 94.5M649 94.5L655 94.5M0 99.5L7 99.5M649 99.5L655 99.5M0 104.5L7 104.5M649 104.5L655 104.5M0 110.5L7 110.5M649 110.5L655 110.5M0 117.5L7 117.5M649 117.5L655 117.5M0 126.5L7 126.5M649 126.5L655 126.5M0 138.5L7 138.5M649 138.5L655 138.5M0 154.5L7 154.5M649 154.5L655 154.5M0 185.5L7 185.5M649 185.5L655 185.5M0 190.5L7 190.5M649 190.5L655 190.5M0 195.5L7 195.5M649 195.5L655 195.5M0 201.5L7 201.5M649 201.5L655 201.5M0 209.5L7 209.5M649 209.5L655 209.5M0 217.5L7 217.5M649 217.5L655 217.5M0 229.5L7 229.5M649 229.5L655 229.5M0 245.5L7 245.5M649 245.5L655 245.5M0 276.5L7 276.5M649 276.5L655 276.5M0 281.5L7 281.5M649 281.5L655 281.5M0 286.5L7 286.5M649 286.5L655 286.5M0 292.5L7 292.5M649 292.5L655 292.5M0 300.5L7 300.5M649 300.5L655 300.5M0 308.5L7 308.5M649 308.5L655 308.5M0 320.5L7 320.5M649 320.5L655 320.5M0 336.5L7 336.5M649 336.5L655 336.5M0 367.5L7 367.5M649 367.5L655 367.5M0 372.5L7 372.5M649 372.5L655 372.5M0 377.5L7 377.5M649 377.5L655 377.5M0 384.5L7 384.5M649 384.5L655 384.5M0 391.5L7 391.5M649 391.5L655 391.5M0 400.5L7 400.5M649 400.5L655 400.5M0 411.5L7 411.5M649 411.5L655 411.5M0 427.5L7 427.5M649 427.5L655 427.5M0 90.5L11 90.5M649 90.5L655 90.5M0 181.5L11 181.5M649 181.5L655 181.5M0 272.5L11 272.5M649 272.5L655 272.5M0 363.5L11 363.5M649 363.5L655 363.5" stroke="#c8c8c8" stroke-width="1" fill="none" shape-rendering="crispEdges"/><path d="M20 90.5h1M41 90.5h1M62 90.5h1M83 90.5h1M104 90.5h1M125 90.5h1M146 90.5h1M167 90.5h1M188 90.5h1M209 90.5h1M230 90.5h1M251 90.5h1M272 90.5h1M293 90.5h1M314 90.5h1M335 90.5h1M356 90.5h1M377 90.5h1M398 90.5h1M419 90.5h1M440 90.5h1M461 90.5h1M482 90.5h1M503 90.5h1M524 90.5h1M545 90.5h1M566 90.5h1M587 90.5h1M608 90.5h1M629 90.5h1M650 90.5h1M20 181.5h1M41 181.5h1M62 181.5h1M83 181.5h1M104 181.5h1M125 181.5h1M146 181.5h1M167 181.5h1M188 181.5h1M209 181.5h1M230 181.5h1M251 181.5h1M272 181.5h1M293 181.5h1M314 181.5h1M335 181.5h1M356 181.5h1M377 181.5h1M398 181.5h1M419 181.5h1M440 181.5h1M461 181.5h1M482 181.5h1M503 181.5h1M524 181.5h1M545 181.5h1M566 181.5h1M587 181.5h1M608 181.5h1M629 181.5h1M650 181.5h1M20 272.5h1M41 272.5h1M62 272.5h1M83 272.5h1M104 272.5h1M125 272.5h1M146 272.5h1M167 272.5h1M188 272.5h1M209 272.5h1M230 272.5h1M251 272.5h1M272 272.5h1M293 272.5h1M314 272.5h1M335 272.5h1M356 272.5h1M377 272.5h1M398 272.5h1M419 272.5h1M440 272.5h1M461 272.5h1M482 272.5h1M503 272.5h1M524 272.5h1M545 272.5h1M566 272.5h1M587 272.5h1M608 272.5h1M629 272.5h1M650 272.5h1M20 363.5h1M41 363.5h1M62 363.5h1M83 363.5h1M104 363.5h1M125 363.5h1M146 363.5h1M167 363.5h1M188 363.5h1M209 363.5h1M230 363.5h1M251 363.5h1M272 363.5h1M293 363.5h1M314 363.5h1M335 363.5h1M356 363.5h1M377 363.5h1M398 363.5h1M419 363.5h1M440 363.5h1M461 363.5h1M482 363.5h1M503 363.5h1M524 363.5h1M545 363.5h1M566 363.5h1M587 363.5h1M608 363.5h1M629 363.5h1M650 363.5h1M104 3.5h1M104 8.5h1M104 13.5h1M104 19.5h1M104 26.5h1M104 35.5h1M104 47.5h1M104 63.5h1M104 94.5h1M104 99.5h1M104 104.5h1M104 110.5h1M104 117.5h1M104 126.5h1M104 138.5h1M104 154.5h1M104 185.5h1M104 190.5h1M104 195.5h1M104 201.5h1M104 209.5h1M104 217.5h1M104 229.5h1M104 245.5h1M104 276.5h1M104 281.5h1M104 286.5h1M104 292.5h1M104 300.5h1M104 308.5h1M104 320.5h1M104 336.5h1M104 367.5h1M104 372.5h1M104 377.5h1M104 384.5h1M104 391.5h1M104 400.5h1M104 411.5h1M104 427.5h1M209 3.5h1M209 8.5h1M209 13.5h1M209 19.5h1M209 26.5h1M209 35.5h1M209 47.5h1M209 63.5h1M209 94.5h1M209 99.5h1M209 104.5h1M209 110.5h1M209 117.5h1M209 126.5h1M209 138.5h1M209 154.5h1M209 185.5h1M209 190.5h1M209 195.5h1M209 201.5h1M209 209.5h1M209 217.5h1M209 229.5h1M209 245.5h1M209 276.5h1M209 281.5h1M209 286.5h1M209 292.5h1M209 300.5h1M209 308.5h1M209 320.5h1M209 336.5h1M209 367.5h1M209 372.5h1M209 377.5h1M209 384.5h1M209 391.5h1M209 400.5h1M209 411.5h1M209 427.5h1M314 3.5h1M314 8.5h1M314 13.5h1M314 19.5h1M314 26.5h1M314 35.5h1M314 47.5h1M314 63.5h1M314 94.5h1M314 99.5h1M314 104.5h1M314 110.5h1M314 117.5h1M314 126.5h1M314 138.5h1M314 154.5h1M314 185.5h1M314 190.5h1M314 195.5h1M314 201.5h1M314 209.5h1M314 217.5h1M314 229.5h1M314 245.5h1M314 276.5h1M314 281.5h1M314 286.5h1M314 292.5h1M314 300.5h1M314 308.5h1M314 320.5h1M314 336.5h1M314 367.5h1M314 372.5h1M314 377.5h1M314 384.5h1M314 391.5h1M314 400.5h1M314 411.5h1M314 427.5h1M419 3.5h1M419 8.5h1M419 13.5h1M419 19.5h1M419 26.5h1M419 35.5h1M419 47.5h1M419 63.5h1M419 94.5h1M419 99.5h1M419 104.5h1M419 110.5h1M419 117.5h1M419 126.5h1M419 138.5h1M419 154.5h1M419 185.5h1M419 190.5h1M419 195.5h1M419 201.5h1M419 209.5h1M419 217.5h1M419 229.5h1M419 245.5h1M419 276.5h1M419 281.5h1M419 286.5h1M419 292.5h1M419 300.5h1M419 308.5h1M419 320.5h1M419 336.5h1M419 367.5h1M419 372.5h1M419 377.5h1M419 384.5h1M419 391.5h1M419 400.5h1M419 411.5h1M419 427.5h1M524 3.5h1M524 8.5h1M524 13.5h1M524 19.5h1M524 26.5h1M524 35.5h1M524 47.5h1M524 63.5h1M524 94.5h1M524 99.5h1M524 104.5h1M524 110.5h1M524 117.5h1M524 126.5h1M524 138.5h1M524 154.5h1M524 185.5h1M524 190.5h1M524 195.5h1M524 201.5h1M524 209.5h1M524 217.5h1M524 229.5h1M524 245.5h1M524 276.5h1M524 281.5h1M524 286.5h1M524 292.5h1M524 300.5h1M524 308.5h1M524 320.5h1M524 336.5h1M524 367.5h1M524 372.5h1M524 377.5h1M524 384.5h1M524 391.5h1M524 400.5h1M524 411.5h1M524 427.5h1M629 3.5h1M629 8.5h1M629 13.5h1M629 19.5h1M629 26.5h1M629 35.5h1M629 47.5h1M629 63.5h1M629 94.5h1M629 99.5h1M629 104.5h1M629 110.5h1M629 117.5h1M629 126.5h1M629 138.5h1M629 154.5h1M629 185.5h1M629 190.5h1M629 195.5h1M629 201.5h1M629 209.5h1M629 217.5h1M629 229.5h1M629 245.5h1M629 276.5h1M629 281.5h1M629 286.5h1M629 292.5h1M629 300.5h1M629 308.5h1M629 320.5h1M629 336.5h1M629 367.5h1M629 372.5h1M629 377.5h1M629 384.5h1M629 391.5h1M629 400.5h1M629 411.5h1M629 427.5h1" stroke="#9a9a9a" stroke-width="1" fill="none" opacity="1" shape-rendering="crispEdges"/><rect x="647" y="88.5" width="8" height="4" fill="#000"/><text x="650.5" y="95" font-size="12" font-family="DejaVu Sans, sans-serif" fill="#b2b2b2" text-anchor="end" stroke="#000" stroke-width="2.2" stroke-opacity="0.55" paint-order="stroke" stroke-linejoin="round">1 ps</text><rect x="647" y="179.6" width="8" height="4" fill="#000"/><text x="650.5" y="186.1" font-size="12" font-family="DejaVu Sans, sans-serif" fill="#b2b2b2" text-anchor="end" stroke="#000" stroke-width="2.2" stroke-opacity="0.55" paint-order="stroke" stroke-linejoin="round">100 fs</text><rect x="647" y="270.7" width="8" height="4" fill="#000"/><text x="650.5" y="277.2" font-size="12" font-family="DejaVu Sans, sans-serif" fill="#b2b2b2" text-anchor="end" stroke="#000" stroke-width="2.2" stroke-opacity="0.55" paint-order="stroke" stroke-linejoin="round">10 fs</text><rect x="647" y="361.8" width="8" height="4" fill="#000"/><text x="650.5" y="368.3" font-size="12" font-family="DejaVu Sans, sans-serif" fill="#b2b2b2" text-anchor="end" stroke="#000" stroke-width="2.2" stroke-opacity="0.55" paint-order="stroke" stroke-linejoin="round">1 fs</text><rect x="75.6" y="447" width="58" height="7" fill="#000"/><text x="104.6" y="450.5" font-size="12" font-family="DejaVu Sans, sans-serif" fill="#b2b2b2" text-anchor="middle" stroke="#000" stroke-width="2.2" stroke-opacity="0.55" paint-order="stroke" stroke-linejoin="round">200 MHz</text><rect x="180.6" y="447" width="58" height="7" fill="#000"/><text x="209.6" y="450.5" font-size="12" font-family="DejaVu Sans, sans-serif" fill="#b2b2b2" text-anchor="middle" stroke="#000" stroke-width="2.2" stroke-opacity="0.55" paint-order="stroke" stroke-linejoin="round">400 MHz</text><rect x="285.6" y="447" width="58" height="7" fill="#000"/><text x="314.6" y="450.5" font-size="12" font-family="DejaVu Sans, sans-serif" fill="#b2b2b2" text-anchor="middle" stroke="#000" stroke-width="2.2" stroke-opacity="0.55" paint-order="stroke" stroke-linejoin="round">600 MHz</text><rect x="390.6" y="447" width="58" height="7" fill="#000"/><text x="419.6" y="450.5" font-size="12" font-family="DejaVu Sans, sans-serif" fill="#b2b2b2" text-anchor="middle" stroke="#000" stroke-width="2.2" stroke-opacity="0.55" paint-order="stroke" stroke-linejoin="round">800 MHz</text><rect x="495.6" y="447" width="58" height="7" fill="#000"/><text x="524.6" y="450.5" font-size="12" font-family="DejaVu Sans, sans-serif" fill="#b2b2b2" text-anchor="middle" stroke="#000" stroke-width="2.2" stroke-opacity="0.55" paint-order="stroke" stroke-linejoin="round">1 GHz</text></svg><svg class="zi" viewBox="0 0 34 34"><path d="M0.5 0.5 H32 Q33.5 0.5 33.5 2 V33.5 Z" fill="#4f4f4f"/><circle cx="27" cy="7" r="4" fill="none" stroke="#a8a8a8" stroke-width="1.6"/><path d="M24 10 L18 15.5" stroke="#a8a8a8" stroke-width="2.6" stroke-linecap="round"/></svg></div></div>
<div class="panel" style="left:1069px;top:510px;width:685px;height:485px"><div class="tbar">Waveform View<svg style="position:absolute;left:220px;top:0" width="250" height="26" viewBox="0 0 250 26"><path d="M7 13 H233" stroke="#c4c4c4" stroke-width="2"/><path d="M102 5 H95.700 V20 H102 M133.500 5 H139.300 V20 H133.500" stroke="#f0f0f0" stroke-width="1.5" fill="none"/><path d="M110.500 1 H124.700 L117.600 6 Z" fill="#f28c1e"/><path d="M111.700 8.700 H123.500 V20.300 H119.800 L117.600 24.300 L115.400 20.300 H111.700 Z" fill="#000" stroke="#f28c1e" stroke-width="1.5" stroke-linejoin="miter"/><text x="117.600" y="18.600" font-size="10" font-weight="bold" fill="#f4a040" text-anchor="middle" font-family="DejaVu Sans, sans-serif">T</text></svg></div><div class="parea"><svg width="679" height="454" viewBox="0 0 679 454"><path d="M0 134L0 134L1 134L1 115L2 115L2 124L3 124L3 118L4 118L4 127L5 127L5 126L6 126L6 126L7 126L7 134L8 134L8 122L9 122L9 122L10 122L10 119L11 119L11 129L12 129L12 128L13 128L13 124L14 124L14 136L15 136L15 132L16 132L16 128L17 128L17 118L18 118L18 114L19 114L19 128L20 128L20 118L21 118L21 134L22 134L22 128L23 128L23 129L24 129L24 134L25 134L25 126L26 126L26 134L27 134L27 136L28 136L28 121L29 121L29 130L30 130L30 130L31 130L31 118L32 118L32 110L33 110L33 130L34 130L34 118L35 118L35 130L36 130L36 132L37 132L37 132L38 132L38 132L39 132L39 134L40 134L40 128L41 128L41 134L42 134L42 130L43 130L43 130L44 130L44 127L45 127L45 126L46 126L46 124L47 124L47 128L48 128L48 132L49 132L49 115L50 115L50 115L51 115L51 132L52 132L52 124L53 124L53 127L54 127L54 134L55 134L55 118L56 118L56 136L57 136L57 129L58 129L58 124L59 124L59 127L60 127L60 127L61 127L61 129L62 129L62 130L63 130L63 132L64 132L64 124L65 124L65 136L66 136L66 134L67 134L67 136L68 136L68 136L69 136L69 115L70 115L70 115L71 115L71 136L72 136L72 115L73 115L73 134L74 134L74 134L75 134L75 134L76 134L76 129L77 129L77 127L78 127L78 134L79 134L79 126L80 126L80 115L81 115L81 136L82 136L82 129L83 129L83 126L84 126L84 126L85 126L85 132L86 132L86 118L87 118L87 130L88 130L88 127L89 127L89 115L90 115L90 126L91 126L91 107L92 107L92 130L93 130L93 122L94 122L94 134L95 134L95 122L96 122L96 129L97 129L97 126L98 126L98 122L99 122L99 130L100 130L100 132L101 132L101 114L102 114L102 126L103 126L103 132L104 132L104 127L105 127L105 122L106 122L106 118L107 118L107 130L108 130L108 122L109 122L109 118L110 118L110 134L111 134L111 128L112 128L112 127L113 127L113 110L114 110L114 124L115 124L115 129L116 129L116 134L117 134L117 134L118 134L118 118L119 118L119 122L120 122L120 127L121 127L121 124L122 124L122 128L123 128L123 127L124 127L124 126L125 126L125 119L126 119L126 107L127 107L127 127L128 127L128 130L129 130L129 122L130 122L130 126L131 126L131 124L132 124L132 129L133 129L133 134L134 134L134 127L135 127L135 115L136 115L136 128L137 128L137 122L138 122L138 127L139 127L139 130L140 130L140 122L141 122L141 132L142 132L142 124L143 124L143 128L144 128L144 118L145 118L145 122L146 122L146 122L147 122L147 136L148 136L148 130L149 130L149 129L150 129L150 130L151 130L151 136L152 136L152 132L153 132L153 127L154 127L154 128L155 128L155 128L156 128L156 115L157 115L157 130L158 130L158 126L159 126L159 128L160 128L160 134L161 134L161 122L162 122L162 132L163 132L163 118L164 118L164 126L165 126L165 130L166 130L166 129L167 129L167 116L168 116L168 122L169 122L169 129L170 129L170 120L171 120L171 134L172 134L172 128L173 128L173 127L174 127L174 132L175 132L175 126L176 126L176 115L177 115L177 129L178 129L178 136L179 136L179 122L180 122L180 128L181 128L181 122L182 122L182 124L183 124L183 122L184 122L184 122L185 122L185 126L186 126L186 132L187 132L187 126L188 126L188 127L189 127L189 128L190 128L190 128L191 128L191 129L192 129L192 126L193 126L193 124L194 124L194 130L195 130L195 126L196 126L196 128L197 128L197 124L198 124L198 126L199 126L199 122L200 122L200 127L201 127L201 115L202 115L202 124L203 124L203 124L204 124L204 118L205 118L205 122L206 122L206 132L207 132L207 129L208 129L208 136L209 136L209 128L210 128L210 128L211 128L211 126L212 126L212 126L213 126L213 129L214 129L214 124L215 124L215 122L216 122L216 126L217 126L217 122L218 122L218 129L219 129L219 134L220 134L220 126L221 126L221 130L222 130L222 136L223 136L223 118L224 118L224 128L225 128L225 134L226 134L226 129L227 129L227 128L228 128L228 126L229 126L229 124L230 124L230 136L231 136L231 132L232 132L232 126L233 126L233 118L234 118L234 118L235 118L235 127L236 127L236 127L237 127L237 124L238 124L238 128L239 128L239 126L240 126L240 121L241 121L241 107L242 107L242 128L243 128L243 115L244 115L244 118L245 118L245 115L246 115L246 126L247 126L247 118L248 118L248 118L249 118L249 129L250 129L250 124L251 124L251 118L252 118L252 128L253 128L253 126L254 126L254 118L255 118L255 115L256 115L256 134L257 134L257 118L258 118L258 124L259 124L259 134L260 134L260 126L261 126L261 107L262 107L262 127L263 127L263 130L264 130L264 130L265 130L265 128L266 128L266 118L267 118L267 132L268 132L268 128L269 128L269 128L270 128L270 130L271 130L271 118L272 118L272 129L273 129L273 129L274 129L274 127L275 127L275 130L276 130L276 126L277 126L277 122L278 122L278 128L279 128L279 130L280 130L280 115L281 115L281 130L282 130L282 124L283 124L283 118L284 118L284 115L285 115L285 134L286 134L286 128L287 128L287 128L288 128L288 126L289 126L289 129L290 129L290 130L291 130L291 126L292 126L292 115L293 115L293 134L294 134L294 136L295 136L295 129L296 129L296 118L297 118L297 136L298 136L298 130L299 130L299 115L300 115L300 115L301 115L301 115L302 115L302 124L303 124L303 132L304 132L304 118L305 118L305 132L306 132L306 122L307 122L307 126L308 126L308 132L309 132L309 134L310 134L310 134L311 134L311 115L312 115L312 134L313 134L313 118L314 118L314 126L315 126L315 128L316 128L316 128L317 128L317 115L318 115L318 122L319 122L319 118L320 118L320 126L321 126L321 127L322 127L322 129L323 129L323 130L324 130L324 130L325 130L325 115L326 115L326 129L327 129L327 124L328 124L328 132L329 132L329 118L330 118L330 130L331 130L331 129L332 129L332 124L333 124L333 119L334 119L334 129L335 129L335 129L336 129L336 132L337 132L337 136L338 136L338 130L339 130L339 130L340 130L340 134L341 134L341 124L342 124L342 122L343 122L343 130L344 130L344 128L345 128L345 126L346 126L346 122L347 122L347 118L348 118L348 132L349 132L349 134L350 134L350 129L351 129L351 130L352 130L352 126L353 126L353 126L354 126L354 115L355 115L355 129L356 129L356 122L357 122L357 134L358 134L358 134L359 134L359 122L360 122L360 129L361 129L361 130L362 130L362 121L363 121L363 128L364 128L364 122L365 122L365 122L366 122L366 118L367 118L367 134L368 134L368 132L369 132L369 110L370 110L370 126L371 126L371 136L372 136L372 115L373 115L373 134L374 134L374 118L375 118L375 122L376 122L376 124L377 124L377 126L378 126L378 136L379 136L379 136L380 136L380 115L381 115L381 122L382 122L382 118L383 118L383 118L384 118L384 127L385 127L385 136L386 136L386 132L387 132L387 122L388 122L388 134L389 134L389 132L390 132L390 130L391 130L391 121L392 121L392 126L393 126L393 115L394 115L394 122L395 122L395 132L396 132L396 126L397 126L397 128L398 128L398 136L399 136L399 127L400 127L400 127L401 127L401 122L402 122L402 132L403 132L403 122L404 122L404 129L405 129L405 126L406 126L406 124L407 124L407 127L408 127L408 136L409 136L409 115L410 115L410 132L411 132L411 134L412 134L412 130L413 130L413 132L414 132L414 129L415 129L415 136L416 136L416 122L417 122L417 130L418 130L418 130L419 130L419 126L420 126L420 126L421 126L421 130L422 130L422 129L423 129L423 128L424 128L424 122L425 122L425 132L426 132L426 136L427 136L427 115L428 115L428 136L429 136L429 127L430 127L430 136L431 136L431 122L432 122L432 130L433 130L433 115L434 115L434 136L435 136L435 115L436 115L436 134L437 134L437 122L438 122L438 124L439 124L439 118L440 118L440 115L441 115L441 118L442 118L442 124L443 124L443 115L444 115L444 126L445 126L445 130L446 130L446 129L447 129L447 132L448 132L448 130L449 130L449 115L450 115L450 128L451 128L451 122L452 122L452 132L453 132L453 132L454 132L454 126L455 126L455 134L456 134L456 132L457 132L457 126L458 126L458 129L459 129L459 126L460 126L460 130L461 130L461 124L462 124L462 115L463 115L463 136L464 136L464 127L465 127L465 128L466 128L466 134L467 134L467 118L468 118L468 118L469 118L469 134L470 134L470 118L471 118L471 128L472 128L472 115L473 115L473 134L474 134L474 124L475 124L475 129L476 129L476 130L477 130L477 136L478 136L478 119L479 119L479 127L480 127L480 118L481 118L481 122L482 122L482 118L483 118L483 128L484 128L484 130L485 130L485 126L486 126L486 124L487 124L487 124L488 124L488 136L489 136L489 132L490 132L490 128L491 128L491 128L492 128L492 118L493 118L493 118L494 118L494 132L495 132L495 126L496 126L496 134L497 134L497 122L498 122L498 115L499 115L499 128L500 128L500 118L501 118L501 115L502 115L502 130L503 130L503 126L504 126L504 122L505 122L505 127L506 127L506 132L507 132L507 118L508 118L508 115L509 115L509 121L510 121L510 126L511 126L511 129L512 129L512 129L513 129L513 124L514 124L514 118L515 118L515 126L516 126L516 130L517 130L517 129L518 129L518 120L519 120L519 127L520 127L520 132L521 132L521 136L522 136L522 132L523 132L523 115L524 115L524 127L525 127L525 115L526 115L526 128L527 128L527 126L528 126L528 127L529 127L529 129L530 129L530 132L531 132L531 130L532 130L532 134L533 134L533 134L534 134L534 107L535 107L535 118L536 118L536 129L537 129L537 124L538 124L538 124L539 124L539 126L540 126L540 120L541 120L541 128L542 128L542 130L543 130L543 118L544 118L544 130L545 130L545 130L546 130L546 115L547 115L547 126L548 126L548 118L549 118L549 136L550 136L550 134L551 134L551 124L552 124L552 118L553 118L553 122L554 122L554 132L555 132L555 136L556 136L556 127L557 127L557 130L558 130L558 126L559 126L559 118L560 118L560 136L561 136L561 132L562 132L562 126L563 126L563 136L564 136L564 122L565 122L565 129L566 129L566 132L567 132L567 126L568 126L568 130L569 130L569 126L570 126L570 136L571 136L571 129L572 129L572 129L573 129L573 130L574 130L574 122L575 122L575 127L576 127L576 118L577 118L577 122L578 122L578 127L579 127L579 132L580 132L580 122L581 122L581 130L582 130L582 126L583 126L583 126L584 126L584 124L585 124L585 129L586 129L586 122L587 122L587 132L588 132L588 118L589 118L589 132L590 132L590 136L591 136L591 122L592 122L592 130L593 130L593 128L594 128L594 129L595 129L595 128L596 128L596 127L597 127L597 122L598 122L598 115L599 115L599 128L600 128L600 124L601 124L601 132L602 132L602 126L603 126L603 136L604 136L604 136L605 136L605 127L606 127L606 126L607 126L607 127L608 127L608 129L609 129L609 127L610 127L610 118L611 118L611 127L612 127L612 128L613 128L613 114L614 114L614 115L615 115L615 115L616 115L616 127L617 127L617 118L618 118L618 127L619 127L619 134L620 134L620 115L621 115L621 122L622 122L622 127L623 127L623 114L624 114L624 124L625 124L625 127L626 127L626 110L627 110L627 122L628 122L628 134L629 134L629 132L630 132L630 126L631 126L631 128L632 128L632 134L633 134L633 118L634 118L634 136L635 136L635 124L636 124L636 129L637 129L637 126L638 126L638 130L639 130L639 122L640 122L640 115L641 115L641 130L642 130L642 134L643 134L643 128L644 128L644 122L645 122L645 127L646 127L646 122L647 122L647 129L648 129L648 128L649 128L649 130L650 130L650 128L651 128L651 118L652 118L652 115L653 115L653 127L654 127L654 124L655 124L655 122L656 122L656 127L657 127L657 129L658 129L658 134L659 134L659 128L660 128L660 127L661 127L661 118L662 118L662 130L663 130L663 132L664 132L664 134L665 134L665 115L666 115L666 127L667 127L667 134L668 134L668 126L669 126L669 122L670 122L670 132L671 132L671 136L672 136L672 124L673 124L673 136L674 136L674 118L675 118L675 115L676 115L676 126L677 126L677 132L678 132L678 134L679 134L679 122L680 122L680 338.6L679 338.6L679 340.8L678 340.8L678 313.9L677 313.9L677 298.8L676 298.8L676 282.8L675 282.8L675 277.8L674 277.8L674 297.1L673 297.1L673 313.6L672 313.6L672 329.3L671 329.3L671 334.4L670 334.4L670 350.6L669 350.6L669 361L668 361L668 350.6L667 350.6L667 347.5L666 347.5L666 337.9L665 337.9L665 316.7L664 316.7L664 300.9L663 300.9L663 292.3L662 292.3L662 275L661 275L661 286L660 286L660 300.1L659 300.1L659 322.5L658 322.5L658 333.7L657 333.7L657 343.2L656 343.2L656 353.9L655 353.9L655 357.1L654 357.1L654 357.2L653 357.2L653 344.1L652 344.1L652 328.1L651 328.1L651 314.6L650 314.6L650 274.9L649 274.9L649 283.8L648 283.8L648 276.4L647 276.4L647 290.1L646 290.1L646 305.8L645 305.8L645 320.5L644 320.5L644 337.6L643 337.6L643 350.1L642 350.1L642 358.5L641 358.5L641 358.6L640 358.6L640 347.7L639 347.7L639 333.6L638 333.6L638 323.9L637 323.9L637 319.5L636 319.5L636 291.4L635 291.4L635 277L634 277L634 281.3L633 281.3L633 297.8L632 297.8L632 288.6L631 288.6L631 332.7L630 332.7L630 351.1L629 351.1L629 335.8L628 335.8L628 361L627 361L627 349.2L626 349.2L626 341.8L625 341.8L625 327.9L624 327.9L624 333L623 333L623 302.9L622 302.9L622 287.9L621 287.9L621 272.1L620 272.1L620 281.9L619 281.9L619 302.5L618 302.5L618 325L617 325L617 337L616 337L616 347.7L615 347.7L615 349.1L614 349.1L614 359.5L613 359.5L613 349.7L612 349.7L612 336.2L611 336.2L611 330.8L610 330.8L610 310.5L609 310.5L609 298.4L608 298.4L608 280.9L607 280.9L607 277.5L606 277.5L606 281L605 281L605 328.7L604 328.7L604 322.1L603 322.1L603 330.4L602 330.4L602 345.5L601 345.5L601 361L600 361L600 358.2L599 358.2L599 350.3L598 350.3L598 331.2L597 331.2L597 321.4L596 321.4L596 310.4L595 310.4L595 311.1L594 311.1L594 282.5L593 282.5L593 284.5L592 284.5L592 315.3L591 315.3L591 315.6L590 315.6L590 331.4L589 331.4L589 338.7L588 338.7L588 353.3L587 353.3L587 361L586 361L586 350.2L585 350.2L585 341.6L584 341.6L584 343.6L583 343.6L583 317.3L582 317.3L582 306.6L581 306.6L581 301.2L580 301.2L580 286.8L579 286.8L579 296L578 296L578 309.1L577 309.1L577 319.5L576 319.5L576 336.6L575 336.6L575 361L574 361L574 358.4L573 358.4L573 361L572 361L572 344.8L571 344.8L571 342.8L570 342.8L570 323.3L569 323.3L569 296.6L568 296.6L568 293.4L567 293.4L567 277.5L566 277.5L566 278.2L565 278.2L565 293.3L564 293.3L564 308.1L563 308.1L563 324.2L562 324.2L562 335.9L561 335.9L561 350.7L560 350.7L560 355.4L559 355.4L559 351.8L558 351.8L558 344.3L557 344.3L557 335.9L556 335.9L556 321.4L555 321.4L555 321.6L554 321.6L554 282.2L553 282.2L553 274.6L552 274.6L552 282.4L551 282.4L551 294.3L550 294.3L550 313.4L549 313.4L549 327.1L548 327.1L548 340.8L547 340.8L547 348.8L546 348.8L546 361L545 361L545 347.8L544 347.8L544 343.9L543 343.9L543 333.3L542 333.3L542 312.8L541 312.8L541 296L540 296L540 297.6L539 297.6L539 280.1L538 280.1L538 304L537 304L537 307.5L536 307.5L536 310.8L535 310.8L535 335.4L534 335.4L534 349.3L533 349.3L533 359.6L532 359.6L532 361L531 361L531 352L530 352L530 336.5L529 336.5L529 325.3L528 325.3L528 300.2L527 300.2L527 293.3L526 293.3L526 275.1L525 275.1L525 298.2L524 298.2L524 300.5L523 300.5L523 310.1L522 310.1L522 326.9L521 326.9L521 357.1L520 357.1L520 349.3L519 349.3L519 354.4L518 354.4L518 352L517 352L517 323.2L516 323.2L516 336L515 336L515 321.8L514 321.8L514 292.1L513 292.1L513 291.6L512 291.6L512 279.3L511 279.3L511 298.7L510 298.7L510 300.4L509 300.4L509 317.9L508 317.9L508 329.5L507 329.5L507 344L506 344L506 353.1L505 353.1L505 358.1L504 358.1L504 346.9L503 346.9L503 343.2L502 343.2L502 327.2L501 327.2L501 316.5L500 316.5L500 310L499 310L499 287.8L498 287.8L498 284.5L497 284.5L497 291.7L496 291.7L496 319L495 319L495 320.1L494 320.1L494 341.4L493 341.4L493 346.4L492 346.4L492 357.5L491 357.5L491 353.3L490 353.3L490 361L489 361L489 335.2L488 335.2L488 301.6L487 301.6L487 311.5L486 311.5L486 292.1L485 292.1L485 278.6L484 278.6L484 280.5L483 280.5L483 304.7L482 304.7L482 311.5L481 311.5L481 334.2L480 334.2L480 336.6L479 336.6L479 350.7L478 350.7L478 361L477 361L477 347.9L476 347.9L476 342.9L475 342.9L475 331.7L474 331.7L474 322.2L473 322.2L473 302.1L472 302.1L472 284.8L471 284.8L471 280.5L470 280.5L470 296.3L469 296.3L469 299.5L468 299.5L468 322L467 322L467 330.9L466 330.9L466 348.7L465 348.7L465 350.7L464 350.7L464 329.9L463 329.9L463 348.8L462 348.8L462 340.2L461 340.2L461 330.7L460 330.7L460 314.7L459 314.7L459 292.3L458 292.3L458 280.2L457 280.2L457 278L456 278L456 306.2L455 306.2L455 310L454 310L454 325.4L453 325.4L453 328.1L452 328.1L452 351L451 351L451 349.7L450 349.7L450 358L449 358L449 346.8L448 346.8L448 330.7L447 330.7L447 323.2L446 323.2L446 298.4L445 298.4L445 294.2L444 294.2L444 289.5L443 289.5L443 289.6L442 289.6L442 300.4L441 300.4L441 314.2L440 314.2L440 333.8L439 333.8L439 346.7L438 346.7L438 349.8L437 349.8L437 361L436 361L436 347.9L435 347.9L435 321.7L434 321.7L434 333.8L433 333.8L433 306.3L432 306.3L432 305.6L431 305.6L431 266.4L430 266.4L430 279L429 279L429 291.9L428 291.9L428 324.9L427 324.9L427 319.3L426 319.3L426 338.9L425 338.9L425 343.7L424 343.7L424 352.9L423 352.9L423 352.6L422 352.6L422 350.4L421 350.4L421 341.2L420 341.2L420 327.4L419 327.4L419 306.8L418 306.8L418 295.6L417 295.6L417 280.5L416 280.5L416 282.8L415 282.8L415 310.1L414 310.1L414 328.7L413 328.7L413 327.5L412 327.5L412 340.2L411 340.2L411 349.6L410 349.6L410 353.3L409 353.3L409 349.3L408 349.3L408 343.8L407 343.8L407 344.1L406 344.1L406 318.2L405 318.2L405 303.2L404 303.2L404 287.7L403 287.7L403 275.3L402 275.3L402 290.6L401 290.6L401 308.3L400 308.3L400 336L399 336L399 330.6L398 330.6L398 321.4L397 321.4L397 351L396 351L396 358.1L395 358.1L395 345.9L394 345.9L394 335.6L393 335.6L393 329.3L392 329.3L392 296.8L391 296.8L391 303.8L390 303.8L390 270.2L389 270.2L389 277.8L388 277.8L388 293.9L387 293.9L387 307.6L386 307.6L386 324.9L385 324.9L385 334.8L384 334.8L384 344.9L383 344.9L383 355.9L382 355.9L382 357.7L381 357.7L381 361L380 361L380 340.7L379 340.7L379 319.9L378 319.9L378 316.5L377 316.5L377 293.4L376 293.4L376 279.2L375 279.2L375 283.4L374 283.4L374 274.1L373 274.1L373 319.4L372 319.4L372 338.9L371 338.9L371 341.4L370 341.4L370 350L369 350L369 356.4L368 356.4L368 353.3L367 353.3L367 346.9L366 346.9L366 332.5L365 332.5L365 302.1L364 302.1L364 319.4L363 319.4L363 299L362 299L362 275.9L361 275.9L361 287.1L360 287.1L360 305.4L359 305.4L359 318.5L358 318.5L358 342.5L357 342.5L357 343.6L356 343.6L356 357.4L355 357.4L355 354.7L354 354.7L354 346.7L353 346.7L353 335.7L352 335.7L352 330.4L351 330.4L351 313.6L350 313.6L350 302.4L349 302.4L349 281.2L348 281.2L348 285.6L347 285.6L347 292.4L346 292.4L346 329.6L345 329.6L345 334.6L344 334.6L344 338.1L343 338.1L343 343.4L342 343.4L342 359.9L341 359.9L341 351.4L340 351.4L340 320.7L339 320.7L339 334.4L338 334.4L338 321.5L337 321.5L337 282.8L336 282.8L336 291.1L335 291.1L335 277.8L334 277.8L334 286.8L333 286.8L333 318L332 318L332 330.9L331 330.9L331 335L330 335L330 340L329 340L329 355.9L328 355.9L328 343.4L327 343.4L327 349.3L326 349.3L326 340L325 340L325 311.7L324 311.7L324 315.5L323 315.5L323 297.8L322 297.8L322 309.7L321 309.7L321 280.2L320 280.2L320 290.4L319 290.4L319 304.3L318 304.3L318 316L317 316L317 332.7L316 332.7L316 346L315 346L315 361L314 361L314 361L313 361L313 348.4L312 348.4L312 338.9L311 338.9L311 322L310 322L310 307.5L309 307.5L309 292.9L308 292.9L308 282.1L307 282.1L307 281.8L306 281.8L306 293L305 293L305 311.7L304 311.7L304 347.7L303 347.7L303 336.7L302 336.7L302 329.6L301 329.6L301 355.5L300 355.5L300 354.3L299 354.3L299 342.6L298 342.6L298 335.3L297 335.3L297 314.1L296 314.1L296 309.2L295 309.2L295 293.5L294 293.5L294 273.9L293 273.9L293 286.6L292 286.6L292 300.2L291 300.2L291 315.6L290 315.6L290 330L289 330L289 324.9L288 324.9L288 361L287 361L287 361L286 361L286 361L285 361L285 347.6L284 347.6L284 333.3L283 333.3L283 314.1L282 314.1L282 300.6L281 300.6L281 280.7L280 280.7L280 283.3L279 283.3L279 281.2L278 281.2L278 313.4L277 313.4L277 320.3L276 320.3L276 338.1L275 338.1L275 361L274 361L274 351.8L273 351.8L273 357.6L272 357.6L272 329.1L271 329.1L271 334.3L270 334.3L270 323.5L269 323.5L269 309.2L268 309.2L268 294.4L267 294.4L267 279.7L266 279.7L266 294.9L265 294.9L265 298.9L264 298.9L264 312.2L263 312.2L263 326.2L262 326.2L262 337L261 337L261 358.4L260 358.4L260 361L259 361L259 351.6L258 351.6L258 341.7L257 341.7L257 336.4L256 336.4L256 322.6L255 322.6L255 304.9L254 304.9L254 286.3L253 286.3L253 276.5L252 276.5L252 291.4L251 291.4L251 305.8L250 305.8L250 331.1L249 331.1L249 335.6L248 335.6L248 343.7L247 343.7L247 355.3L246 355.3L246 359.6L245 359.6L245 352.5L244 352.5L244 336.7L243 336.7L243 330.4L242 330.4L242 313.6L241 313.6L241 297.7L240 297.7L240 283.8L239 283.8L239 283.5L238 283.5L238 294.6L237 294.6L237 311.1L236 311.1L236 320.4L235 320.4L235 337.9L234 337.9L234 328.9L233 328.9L233 361L232 361L232 350.8L231 350.8L231 361L230 361L230 331.1L229 331.1L229 326.5L228 326.5L228 309.7L227 309.7L227 289L226 289L226 274.9L225 274.9L225 287.3L224 287.3L224 299.3L223 299.3L223 317.7L222 317.7L222 325L221 325L221 345.6L220 345.6L220 353.8L219 353.8L219 361L218 361L218 351.2L217 351.2L217 339.5L216 339.5L216 327L215 327L215 319.9L214 319.9L214 304L213 304L213 287.7L212 287.7L212 291.7L211 291.7L211 294.8L210 294.8L210 311L209 311L209 298.7L208 298.7L208 333.7L207 333.7L207 345L206 345L206 353.4L205 353.4L205 360L204 360L204 349L203 349L203 334.3L202 334.3L202 337.1L201 337.1L201 314.5L200 314.5L200 295.4L199 295.4L199 280.1L198 280.1L198 285.2L197 285.2L197 299.5L196 299.5L196 313L195 313L195 330.4L194 330.4L194 339.3L193 339.3L193 343.9L192 343.9L192 361L191 361L191 352.5L190 352.5L190 345.8L189 345.8L189 334.4L188 334.4L188 332.1L187 332.1L187 308.6L186 308.6L186 293.6L185 293.6L185 280.1L184 280.1L184 282.1L183 282.1L183 302L182 302L182 319.2L181 319.2L181 333.5L180 333.5L180 339.5L179 339.5L179 356.6L178 356.6L178 360.5L177 360.5L177 353.4L176 353.4L176 339.7L175 339.7L175 331.8L174 331.8L174 314.4L173 314.4L173 299.6L172 299.6L172 285.1L171 285.1L171 275.6L170 275.6L170 297.4L169 297.4L169 309.8L168 309.8L168 326.3L167 326.3L167 333.3L166 333.3L166 350.3L165 350.3L165 356.3L164 356.3L164 361L163 361L163 350.2L162 350.2L162 353.3L161 353.3L161 328.7L160 328.7L160 314.8L159 314.8L159 298.6L158 298.6L158 277.4L157 277.4L157 286.3L156 286.3L156 287.4L155 287.4L155 318.1L154 318.1L154 324.6L153 324.6L153 343.9L152 343.9L152 349.9L151 349.9L151 361L150 361L150 348.5L149 348.5L149 343.5L148 343.5L148 332.1L147 332.1L147 321L146 321L146 294L145 294L145 304.9L144 304.9L144 280.1L143 280.1L143 289.2L142 289.2L142 307L141 307L141 318.2L140 318.2L140 337.2L139 337.2L139 343L138 343L138 352.4L137 352.4L137 355.6L136 355.6L136 347.7L135 347.7L135 352.6L134 352.6L134 337.2L133 337.2L133 311L132 311L132 303.7L131 303.7L131 285.8L130 285.8L130 279.6L129 279.6L129 293.1L128 293.1L128 307.7L127 307.7L127 321.8L126 321.8L126 332.5L125 332.5L125 344.7L124 344.7L124 358.2L123 358.2L123 356.5L122 356.5L122 348.5L121 348.5L121 334.8L120 334.8L120 319.5L119 319.5L119 292.7L118 292.7L118 297.4L117 297.4L117 287.8L116 287.8L116 280.4L115 280.4L115 298.7L114 298.7L114 320.6L113 320.6L113 333.7L112 333.7L112 341.9L111 341.9L111 351.6L110 351.6L110 361L109 361L109 361L108 361L108 342.6L107 342.6L107 341.6L106 341.6L106 320.4L105 320.4L105 299.1L104 299.1L104 287.2L103 287.2L103 281.5L102 281.5L102 289L101 289L101 303.2L100 303.2L100 323L99 323L99 336.6L98 336.6L98 349.5L97 349.5L97 358.1L96 358.1L96 352.7L95 352.7L95 347.3L94 347.3L94 340.5L93 340.5L93 325.8L92 325.8L92 317.1L91 317.1L91 293.6L90 293.6L90 282.6L89 282.6L89 264.2L88 264.2L88 296.5L87 296.5L87 312.7L86 312.7L86 328.1L85 328.1L85 334L84 334L84 353.3L83 353.3L83 355.6L82 355.6L82 354.7L81 354.7L81 342.1L80 342.1L80 352.6L79 352.6L79 317.8L78 317.8L78 309.2L77 309.2L77 286.3L76 286.3L76 263.2L75 263.2L75 284.6L74 284.6L74 306.9L73 306.9L73 313.3L72 313.3L72 330.9L71 330.9L71 346.2L70 346.2L70 355.2L69 355.2L69 361L68 361L68 353.3L67 353.3L67 343.2L66 343.2L66 330L65 330L65 318.3L64 318.3L64 297.2L63 297.2L63 288.1L62 288.1L62 264.4L61 264.4L61 288.2L60 288.2L60 311L59 311L59 303.5L58 303.5L58 331L57 331L57 350.8L56 350.8L56 352.6L55 352.6L55 358.7L54 358.7L54 352.2L53 352.2L53 348.8L52 348.8L52 320.4L51 320.4L51 312.4L50 312.4L50 289.9L49 289.9L49 280.8L48 280.8L48 278.9L47 278.9L47 290.4L46 290.4L46 312.5L45 312.5L45 328.8L44 328.8L44 338.7L43 338.7L43 351.1L42 351.1L42 359.7L41 359.7L41 353.2L40 353.2L40 344.4L39 344.4L39 331.9L38 331.9L38 335.8L37 335.8L37 282.3L36 282.3L36 291.1L35 291.1L35 278.4L34 278.4L34 283.7L33 283.7L33 305.4L32 305.4L32 318.7L31 318.7L31 334L30 334L30 355L29 355L29 341.8L28 341.8L28 361L27 361L27 337.2L26 337.2L26 339.1L25 339.1L25 333.3L24 333.3L24 315.3L23 315.3L23 302.6L22 302.6L22 280.2L21 280.2L21 278.3L20 278.3L20 289.7L19 289.7L19 289L18 289L18 323L17 323L17 341.2L16 341.2L16 343L15 343L15 356L14 356L14 361L13 361L13 355.8L12 355.8L12 331.8L11 331.8L11 320.7L10 320.7L10 309.4L9 309.4L9 291.7L8 291.7L8 278.3L7 278.3L7 285.6L6 285.6L6 302.7L5 302.7L5 301.6L4 301.6L4 327.8L3 327.8L3 355.7L2 355.7L2 353.3L1 353.3L1 361L0 361Z" fill="#9b9eb3" shape-rendering="crispEdges"/><path d="M0.5 173.7V355M2.5 139.6V342.4M5.5 162.4V276.7M7.5 149V269.5M12.5 141.6V333.9M13.5 137V359.1M14.5 155.4V339.6M17.5 123.6V302.8M18.5 136.2V277.7M19.5 134.8V280.8M20.5 127V277.4M22.5 163.8V291.8M25.5 134.6V315.5M28.5 152.3V326.7M40.5 159.3V334.7M43.5 151.6V327.5M45.5 150.7V308.1M49.5 150.9V289.7M50.5 145.7V286.1M52.5 131.8V327.5M54.5 171.7V342.9M55.5 139.8V342.5M56.5 172V322.7M57.5 149.6V322.8M59.5 143.7V298.7M67.5 149.6V339.5M70.5 154.7V336.9M71.5 144.2V324.6M74.5 147.3V277.3M77.5 135.6V280.2M84.5 149.4V314.1M85.5 159.4V323.7M87.5 142.9V267.7M94.5 164.6V322.3M96.5 136.1V336.1M106.5 154.5V319.9M109.5 138.8V340.6M111.5 133.1V330M112.5 139.9V327M117.5 169.4V279.2M121.5 131.5V328.6M122.5 156.8V329.2M130.5 152.5V266.6M134.5 161.1V333.9M143.5 144.4V269.5M146.5 151.2V318.1M147.5 154.8V328.4M151.5 175.2V344M153.5 132.5V315.6M155.5 150.1V271.7M156.5 138.7V284.3M157.5 145V253M163.5 127.6V338.6M167.5 140.9V307.6M169.5 167.9V282.1M170.5 159.3V264.1M171.5 162.4V277.3M172.5 143.6V281.4M173.5 155.3V287.3M177.5 162.8V357.8M179.5 130.5V311M180.5 158.1V317.6M181.5 154.8V317.4M186.5 161.5V307.5M190.5 158.2V331.4M191.5 161V343.6M194.5 145.1V303.7M195.5 158V302M196.5 133V270.6M200.5 137.7V313.1M204.5 131.2V353.4M205.5 128V338.6M209.5 161.9V295M210.5 134V276.6M212.5 155.6V280.8M216.5 136.5V310.5M220.5 143.9V318.3M221.5 145.3V323.8M224.5 145.5V281.2M228.5 149.7V324.8M231.5 165.8V343.5M234.5 142.4V321.8M238.5 140V269M239.5 150.4V281.2M242.5 137.2V302.4M247.5 148.4V315.4M248.5 123.1V331.8M249.5 162.1V313M251.5 145.5V287.3M252.5 153.8V257.2M255.5 130.6V318.3M257.5 153.4V321.2M264.5 147.1V297.3M268.5 148.1V283.3M273.5 155.6V349.9M277.5 146.9V311.4M279.5 149.6V258.8M284.5 147.6V330.5M286.5 149V359.1M287.5 135.8V348.3M288.5 160V306.6M291.5 140.7V275M295.5 141V296.3M299.5 121.6V337.5M302.5 136.2V336.2M303.5 165.3V321.5M304.5 123.5V294.5M305.5 158.5V265.6M307.5 152.2V273.4M309.5 169.4V287.1M311.5 153.4V321.4M312.5 161.6V339.1M313.5 124.4V342.7M314.5 134.5V337.7M315.5 159.4V337.8M325.5 133.3V322.9M326.5 156.5V323.4M328.5 138V344.9M338.5 139.3V321.2M341.5 149.1V344.3M343.5 162.6V335.6M344.5 142.8V328.5M345.5 133.8V313.8M346.5 149.5V274.4M350.5 150.2V293M351.5 160.7V312.8M356.5 140V330.7M359.5 160.4V276M364.5 127.6V284.4M375.5 150.6V258.1M379.5 158.9V329.9M380.5 151.1V355.7M382.5 141.1V326M383.5 153.1V344.8M389.5 149.5V257M391.5 144.9V282.7M395.5 170.4V340.1M396.5 150.2V325M397.5 155.7V306.7M398.5 146.6V323.6M402.5 158.7V261.1M405.5 165.2V301.8M406.5 137.9V322.7M409.5 150.1V345.4M419.5 165.6V326.9M420.5 159.6V332.9M421.5 141.2V335.5M423.5 138.8V352.5M424.5 138V329M431.5 140V291.3M432.5 167.3V291.8M433.5 137.2V309.6M434.5 161.6V319M435.5 126.6V332.8M437.5 151.1V332.2M440.5 154.9V300.6M442.5 132V270.3M443.5 121.2V287M445.5 144.2V275.4M447.5 160.8V300.9M454.5 158.3V306.9M455.5 156.8V300.6M457.5 164V267.2M464.5 155.1V323M466.5 157.4V320.2M469.5 155.9V281M470.5 148.6V272.9M472.5 140.9V289.1M477.5 158.2V353.4M478.5 157.2V336.3M480.5 145V330.6M481.5 131.5V310.7M485.5 156.7V272.3M486.5 155.8V309.5M487.5 156.3V278.5M488.5 158.8V311.2M491.5 135.4V351.9M507.5 126.6V309.7M508.5 141.4V301.4M511.5 144.6V258.4M513.5 140V278.7M524.5 161V285.7M528.5 141.7V311.1M530.5 168.6V322.8M532.5 139.7V333.2M533.5 149.4V321.2M537.5 146.7V301.2M541.5 156.3V308.6M542.5 137.1V315.9M550.5 149.2V277.8M554.5 170.1V307.6M555.5 167.7V302.5M558.5 147.5V337.9M561.5 145.9V332.4M562.5 149.4V302M567.5 162.5V283M569.5 164.3V302.8M570.5 166.6V338.1M573.5 147.7V353.6M575.5 159.8V326M586.5 139.8V351.2M588.5 149.4V336.5M593.5 156.3V275.4M598.5 130.9V321.5M599.5 141.5V342.2M602.5 142.5V308.7M606.5 132.8V272.2M607.5 138.4V272.3M608.5 134.9V282.7M610.5 126.3V308.9M611.5 136.9V321.4M612.5 160.5V334.5M615.5 148.7V336M617.5 138.1V308.8M618.5 134.6V274.5M625.5 154.5V328.5M627.5 137.3V357.6M630.5 158.4V317.1M631.5 146.7V288.5M632.5 140.3V269M638.5 150.3V315.2M641.5 157.9V352.3M645.5 140.5V284.4M646.5 143.7V260.3M654.5 145.4V349M660.5 155.1V258.1M665.5 126.9V314M667.5 160.5V325.7M669.5 160.3V345.1M672.5 138.3V308M673.5 142.4V277.7M675.5 153.3V270.1" stroke="#8c8fa6" stroke-width="1" fill="none" opacity="0.8" shape-rendering="crispEdges"/><path d="M7 156.5V454M20 160.5V454M34 160.4V454M48 154.3V454M61 151V454M75 160.2V454M88 160.5V454M102 158.4V454M116 151.6V454M129 160.4V454M143 152.5V454M157 161.2V454M170 158.7V454M184 158.9V454M198 151.1V454M211 155.1V454M225 160.3V454M238 151.6V454M252 150.5V454M266 155.8V454M279 161.9V454M293 158.8V454M307 153.2V454M320 151.1V454M334 161.7V454M347 161.8V454M361 159.8V454M375 152.9V454M388 160.5V454M402 150.1V454M416 152.4V454M429 154.5V454M443 163.4V454M456 150.5V454M470 152.3V454M484 160.3V454M497 160.7V454M511 153.8V454M525 151.1V454M538 162V454M552 163.6V454M566 162.7V454M579 157.9V454M593 151.2V454M606 160.4V454M620 159.1V454M634 161.6V454M647 160.6V454M661 157V454M675 163.7V454" stroke="#000" stroke-width="2" fill="none" shape-rendering="crispEdges"/><path d="M4.5 117V158.5M9.5 117V148.2M17.5 117V162.9M22.5 117V156.7M31.5 117V161.7M36.5 117V160.5M45.5 117V153.8M50.5 117V159.4M58.5 117V169M63.5 117V145.7M72.5 117V147.7M77.5 117V152M85.5 117V162.5M90.5 117V161M99.5 117V161M104.5 117V155.1M113.5 117V166M118.5 117V141.2M126.5 117V163.7M131.5 117V148M140.5 117V152.4M145.5 117V143.9M154.5 117V156.1M159.5 117V155.4M167.5 117V160.8M172.5 117V145M181.5 117V148.4M186.5 117V156.7M195.5 117V165.8M200.5 117V157.9M208.5 117V166.7M213.5 117V138.6M222.5 117V154M227.5 117V148.6M235.5 117V154.4M240.5 117V157.6M249.5 117V152.1M254.5 117V137.4M263.5 117V158.3M268.5 117V138.3M276.5 117V147.7M281.5 117V152.2M290.5 117V162.1M295.5 117V150.6M304.5 117V148.8M309.5 117V151M317.5 117V160.1M322.5 117V144.6M331.5 117V152.6M336.5 117V140.9M344.5 117V159.1M349.5 117V146.2M358.5 117V161.6M363.5 117V153.9M372.5 117V153.9M377.5 117V152.2M385.5 117V153.5M390.5 117V155.6M399.5 117V152.1M404.5 117V151.9M413.5 117V165.4M418.5 117V157M426.5 117V160.3M431.5 117V159.8M440.5 117V171.7M445.5 117V156.8M453.5 117V156M458.5 117V143.7M467.5 117V162.7M472.5 117V140.2M481.5 117V151.4M486.5 117V139.4M494.5 117V163.3M499.5 117V146.7M508.5 117V170M513.5 117V157.2M522.5 117V160.3M527.5 117V145.5M535.5 117V155M540.5 117V138.3M549.5 117V149.8M554.5 117V158.8M563.5 117V154.5M568.5 117V137.2M576.5 117V171.5M581.5 117V146.5M590.5 117V166.4M595.5 117V148.3M603.5 117V171.2M608.5 117V139M617.5 117V158.8M622.5 117V153.2M631.5 117V147.6M636.5 117V159.9M644.5 117V155.5M649.5 117V153.9M658.5 117V149M663.5 117V139M672.5 117V149.2M677.5 117V156.7" stroke="#000" stroke-width="1" fill="none" shape-rendering="crispEdges"/><path d="M13 -0.5h1M27 -0.5h1M40 -0.5h1M54 -0.5h1M67 -0.5h1M81 -0.5h1M95 -0.5h1M108 -0.5h1M122 -0.5h1M135 -0.5h1M149 -0.5h1M162 -0.5h1M176 -0.5h1M190 -0.5h1M203 -0.5h1M217 -0.5h1M230 -0.5h1M244 -0.5h1M258 -0.5h1M271 -0.5h1M285 -0.5h1M298 -0.5h1M312 -0.5h1M325 -0.5h1M339 -0.5h1M353 -0.5h1M366 -0.5h1M380 -0.5h1M393 -0.5h1M407 -0.5h1M420 -0.5h1M434 -0.5h1M448 -0.5h1M461 -0.5h1M475 -0.5h1M488 -0.5h1M502 -0.5h1M516 -0.5h1M529 -0.5h1M543 -0.5h1M556 -0.5h1M570 -0.5h1M583 -0.5h1M597 -0.5h1M611 -0.5h1M624 -0.5h1M638 -0.5h1M651 -0.5h1M665 -0.5h1M679 -0.5h1M13 45.5h1M27 45.5h1M40 45.5h1M54 45.5h1M67 45.5h1M81 45.5h1M95 45.5h1M108 45.5h1M122 45.5h1M135 45.5h1M149 45.5h1M162 45.5h1M176 45.5h1M190 45.5h1M203 45.5h1M217 45.5h1M230 45.5h1M244 45.5h1M258 45.5h1M271 45.5h1M285 45.5h1M298 45.5h1M312 45.5h1M325 45.5h1M339 45.5h1M353 45.5h1M366 45.5h1M380 45.5h1M393 45.5h1M407 45.5h1M420 45.5h1M434 45.5h1M448 45.5h1M461 45.5h1M475 45.5h1M488 45.5h1M502 45.5h1M516 45.5h1M529 45.5h1M543 45.5h1M556 45.5h1M570 45.5h1M583 45.5h1M597 45.5h1M611 45.5h1M624 45.5h1M638 45.5h1M651 45.5h1M665 45.5h1M679 45.5h1M13 90.5h1M27 90.5h1M40 90.5h1M54 90.5h1M67 90.5h1M81 90.5h1M95 90.5h1M108 90.5h1M122 90.5h1M135 90.5h1M149 90.5h1M162 90.5h1M176 90.5h1M190 90.5h1M203 90.5h1M217 90.5h1M230 90.5h1M244 90.5h1M258 90.5h1M271 90.5h1M285 90.5h1M298 90.5h1M312 90.5h1M325 90.5h1M339 90.5h1M353 90.5h1M366 90.5h1M380 90.5h1M393 90.5h1M407 90.5h1M420 90.5h1M434 90.5h1M448 90.5h1M461 90.5h1M475 90.5h1M488 90.5h1M502 90.5h1M516 90.5h1M529 90.5h1M543 90.5h1M556 90.5h1M570 90.5h1M583 90.5h1M597 90.5h1M611 90.5h1M624 90.5h1M638 90.5h1M651 90.5h1M665 90.5h1M679 90.5h1M13 136.5h1M27 136.5h1M40 136.5h1M54 136.5h1M67 136.5h1M81 136.5h1M95 136.5h1M108 136.5h1M122 136.5h1M135 136.5h1M149 136.5h1M162 136.5h1M176 136.5h1M190 136.5h1M203 136.5h1M217 136.5h1M230 136.5h1M244 136.5h1M258 136.5h1M271 136.5h1M285 136.5h1M298 136.5h1M312 136.5h1M325 136.5h1M339 136.5h1M353 136.5h1M366 136.5h1M380 136.5h1M393 136.5h1M407 136.5h1M420 136.5h1M434 136.5h1M448 136.5h1M461 136.5h1M475 136.5h1M488 136.5h1M502 136.5h1M516 136.5h1M529 136.5h1M543 136.5h1M556 136.5h1M570 136.5h1M583 136.5h1M597 136.5h1M611 136.5h1M624 136.5h1M638 136.5h1M651 136.5h1M665 136.5h1M679 136.5h1M13 181.5h1M27 181.5h1M40 181.5h1M54 181.5h1M67 181.5h1M81 181.5h1M95 181.5h1M108 181.5h1M122 181.5h1M135 181.5h1M149 181.5h1M162 181.5h1M176 181.5h1M190 181.5h1M203 181.5h1M217 181.5h1M230 181.5h1M244 181.5h1M258 181.5h1M271 181.5h1M285 181.5h1M298 181.5h1M312 181.5h1M325 181.5h1M339 181.5h1M353 181.5h1M366 181.5h1M380 181.5h1M393 181.5h1M407 181.5h1M420 181.5h1M434 181.5h1M448 181.5h1M461 181.5h1M475 181.5h1M488 181.5h1M502 181.5h1M516 181.5h1M529 181.5h1M543 181.5h1M556 181.5h1M570 181.5h1M583 181.5h1M597 181.5h1M611 181.5h1M624 181.5h1M638 181.5h1M651 181.5h1M665 181.5h1M679 181.5h1M13 227.5h1M27 227.5h1M40 227.5h1M54 227.5h1M67 227.5h1M81 227.5h1M95 227.5h1M108 227.5h1M122 227.5h1M135 227.5h1M149 227.5h1M162 227.5h1M176 227.5h1M190 227.5h1M203 227.5h1M217 227.5h1M230 227.5h1M244 227.5h1M258 227.5h1M271 227.5h1M285 227.5h1M298 227.5h1M312 227.5h1M325 227.5h1M339 227.5h1M353 227.5h1M366 227.5h1M380 227.5h1M393 227.5h1M407 227.5h1M420 227.5h1M434 227.5h1M448 227.5h1M461 227.5h1M475 227.5h1M488 227.5h1M502 227.5h1M516 227.5h1M529 227.5h1M543 227.5h1M556 227.5h1M570 227.5h1M583 227.5h1M597 227.5h1M611 227.5h1M624 227.5h1M638 227.5h1M651 227.5h1M665 227.5h1M679 227.5h1M13 272.5h1M27 272.5h1M40 272.5h1M54 272.5h1M67 272.5h1M81 272.5h1M95 272.5h1M108 272.5h1M122 272.5h1M135 272.5h1M149 272.5h1M162 272.5h1M176 272.5h1M190 272.5h1M203 272.5h1M217 272.5h1M230 272.5h1M244 272.5h1M258 272.5h1M271 272.5h1M285 272.5h1M298 272.5h1M312 272.5h1M325 272.5h1M339 272.5h1M353 272.5h1M366 272.5h1M380 272.5h1M393 272.5h1M407 272.5h1M420 272.5h1M434 272.5h1M448 272.5h1M461 272.5h1M475 272.5h1M488 272.5h1M502 272.5h1M516 272.5h1M529 272.5h1M543 272.5h1M556 272.5h1M570 272.5h1M583 272.5h1M597 272.5h1M611 272.5h1M624 272.5h1M638 272.5h1M651 272.5h1M665 272.5h1M679 272.5h1M13 317.5h1M27 317.5h1M40 317.5h1M54 317.5h1M67 317.5h1M81 317.5h1M95 317.5h1M108 317.5h1M122 317.5h1M135 317.5h1M149 317.5h1M162 317.5h1M176 317.5h1M190 317.5h1M203 317.5h1M217 317.5h1M230 317.5h1M244 317.5h1M258 317.5h1M271 317.5h1M285 317.5h1M298 317.5h1M312 317.5h1M325 317.5h1M339 317.5h1M353 317.5h1M366 317.5h1M380 317.5h1M393 317.5h1M407 317.5h1M420 317.5h1M434 317.5h1M448 317.5h1M461 317.5h1M475 317.5h1M488 317.5h1M502 317.5h1M516 317.5h1M529 317.5h1M543 317.5h1M556 317.5h1M570 317.5h1M583 317.5h1M597 317.5h1M611 317.5h1M624 317.5h1M638 317.5h1M651 317.5h1M665 317.5h1M679 317.5h1M13 363.5h1M27 363.5h1M40 363.5h1M54 363.5h1M67 363.5h1M81 363.5h1M95 363.5h1M108 363.5h1M122 363.5h1M135 363.5h1M149 363.5h1M162 363.5h1M176 363.5h1M190 363.5h1M203 363.5h1M217 363.5h1M230 363.5h1M244 363.5h1M258 363.5h1M271 363.5h1M285 363.5h1M298 363.5h1M312 363.5h1M325 363.5h1M339 363.5h1M353 363.5h1M366 363.5h1M380 363.5h1M393 363.5h1M407 363.5h1M420 363.5h1M434 363.5h1M448 363.5h1M461 363.5h1M475 363.5h1M488 363.5h1M502 363.5h1M516 363.5h1M529 363.5h1M543 363.5h1M556 363.5h1M570 363.5h1M583 363.5h1M597 363.5h1M611 363.5h1M624 363.5h1M638 363.5h1M651 363.5h1M665 363.5h1M679 363.5h1M13 408.5h1M27 408.5h1M40 408.5h1M54 408.5h1M67 408.5h1M81 408.5h1M95 408.5h1M108 408.5h1M122 408.5h1M135 408.5h1M149 408.5h1M162 408.5h1M176 408.5h1M190 408.5h1M203 408.5h1M217 408.5h1M230 408.5h1M244 408.5h1M258 408.5h1M271 408.5h1M285 408.5h1M298 408.5h1M312 408.5h1M325 408.5h1M339 408.5h1M353 408.5h1M366 408.5h1M380 408.5h1M393 408.5h1M407 408.5h1M420 408.5h1M434 408.5h1M448 408.5h1M461 408.5h1M475 408.5h1M488 408.5h1M502 408.5h1M516 408.5h1M529 408.5h1M543 408.5h1M556 408.5h1M570 408.5h1M583 408.5h1M597 408.5h1M611 408.5h1M624 408.5h1M638 408.5h1M651 408.5h1M665 408.5h1M679 408.5h1M67 9.5h1M67 18.5h1M67 27.5h1M67 36.5h1M67 45.5h1M67 54.5h1M67 63.5h1M67 72.5h1M67 82.5h1M67 91.5h1M67 100.5h1M67 109.5h1M67 118.5h1M67 127.5h1M67 136.5h1M67 145.5h1M67 154.5h1M67 163.5h1M67 172.5h1M67 182.5h1M67 191.5h1M67 200.5h1M67 209.5h1M67 218.5h1M67 227.5h1M67 236.5h1M67 245.5h1M67 254.5h1M67 263.5h1M67 272.5h1M67 282.5h1M67 291.5h1M67 300.5h1M67 309.5h1M67 318.5h1M67 327.5h1M67 336.5h1M67 345.5h1M67 354.5h1M67 363.5h1M67 372.5h1M67 382.5h1M67 391.5h1M67 400.5h1M67 409.5h1M67 418.5h1M67 427.5h1M67 436.5h1M67 445.5h1M135 9.5h1M135 18.5h1M135 27.5h1M135 36.5h1M135 45.5h1M135 54.5h1M135 63.5h1M135 72.5h1M135 82.5h1M135 91.5h1M135 100.5h1M135 109.5h1M135 118.5h1M135 127.5h1M135 136.5h1M135 145.5h1M135 154.5h1M135 163.5h1M135 172.5h1M135 182.5h1M135 191.5h1M135 200.5h1M135 209.5h1M135 218.5h1M135 227.5h1M135 236.5h1M135 245.5h1M135 254.5h1M135 263.5h1M135 272.5h1M135 282.5h1M135 291.5h1M135 300.5h1M135 309.5h1M135 318.5h1M135 327.5h1M135 336.5h1M135 345.5h1M135 354.5h1M135 363.5h1M135 372.5h1M135 382.5h1M135 391.5h1M135 400.5h1M135 409.5h1M135 418.5h1M135 427.5h1M135 436.5h1M135 445.5h1M203 9.5h1M203 18.5h1M203 27.5h1M203 36.5h1M203 45.5h1M203 54.5h1M203 63.5h1M203 72.5h1M203 82.5h1M203 91.5h1M203 100.5h1M203 109.5h1M203 118.5h1M203 127.5h1M203 136.5h1M203 145.5h1M203 154.5h1M203 163.5h1M203 172.5h1M203 182.5h1M203 191.5h1M203 200.5h1M203 209.5h1M203 218.5h1M203 227.5h1M203 236.5h1M203 245.5h1M203 254.5h1M203 263.5h1M203 272.5h1M203 282.5h1M203 291.5h1M203 300.5h1M203 309.5h1M203 318.5h1M203 327.5h1M203 336.5h1M203 345.5h1M203 354.5h1M203 363.5h1M203 372.5h1M203 382.5h1M203 391.5h1M203 400.5h1M203 409.5h1M203 418.5h1M203 427.5h1M203 436.5h1M203 445.5h1M271 9.5h1M271 18.5h1M271 27.5h1M271 36.5h1M271 45.5h1M271 54.5h1M271 63.5h1M271 72.5h1M271 82.5h1M271 91.5h1M271 100.5h1M271 109.5h1M271 118.5h1M271 127.5h1M271 136.5h1M271 145.5h1M271 154.5h1M271 163.5h1M271 172.5h1M271 182.5h1M271 191.5h1M271 200.5h1M271 209.5h1M271 218.5h1M271 227.5h1M271 236.5h1M271 245.5h1M271 254.5h1M271 263.5h1M271 272.5h1M271 282.5h1M271 291.5h1M271 300.5h1M271 309.5h1M271 318.5h1M271 327.5h1M271 336.5h1M271 345.5h1M271 354.5h1M271 363.5h1M271 372.5h1M271 382.5h1M271 391.5h1M271 400.5h1M271 409.5h1M271 418.5h1M271 427.5h1M271 436.5h1M271 445.5h1M339 9.5h1M339 18.5h1M339 27.5h1M339 36.5h1M339 45.5h1M339 54.5h1M339 63.5h1M339 72.5h1M339 82.5h1M339 91.5h1M339 100.5h1M339 109.5h1M339 118.5h1M339 127.5h1M339 136.5h1M339 145.5h1M339 154.5h1M339 163.5h1M339 172.5h1M339 182.5h1M339 191.5h1M339 200.5h1M339 209.5h1M339 218.5h1M339 227.5h1M339 236.5h1M339 245.5h1M339 254.5h1M339 263.5h1M339 272.5h1M339 282.5h1M339 291.5h1M339 300.5h1M339 309.5h1M339 318.5h1M339 327.5h1M339 336.5h1M339 345.5h1M339 354.5h1M339 363.5h1M339 372.5h1M339 382.5h1M339 391.5h1M339 400.5h1M339 409.5h1M339 418.5h1M339 427.5h1M339 436.5h1M339 445.5h1M406 9.5h1M406 18.5h1M406 27.5h1M406 36.5h1M406 45.5h1M406 54.5h1M406 63.5h1M406 72.5h1M406 82.5h1M406 91.5h1M406 100.5h1M406 109.5h1M406 118.5h1M406 127.5h1M406 136.5h1M406 145.5h1M406 154.5h1M406 163.5h1M406 172.5h1M406 182.5h1M406 191.5h1M406 200.5h1M406 209.5h1M406 218.5h1M406 227.5h1M406 236.5h1M406 245.5h1M406 254.5h1M406 263.5h1M406 272.5h1M406 282.5h1M406 291.5h1M406 300.5h1M406 309.5h1M406 318.5h1M406 327.5h1M406 336.5h1M406 345.5h1M406 354.5h1M406 363.5h1M406 372.5h1M406 382.5h1M406 391.5h1M406 400.5h1M406 409.5h1M406 418.5h1M406 427.5h1M406 436.5h1M406 445.5h1M474 9.5h1M474 18.5h1M474 27.5h1M474 36.5h1M474 45.5h1M474 54.5h1M474 63.5h1M474 72.5h1M474 82.5h1M474 91.5h1M474 100.5h1M474 109.5h1M474 118.5h1M474 127.5h1M474 136.5h1M474 145.5h1M474 154.5h1M474 163.5h1M474 172.5h1M474 182.5h1M474 191.5h1M474 200.5h1M474 209.5h1M474 218.5h1M474 227.5h1M474 236.5h1M474 245.5h1M474 254.5h1M474 263.5h1M474 272.5h1M474 282.5h1M474 291.5h1M474 300.5h1M474 309.5h1M474 318.5h1M474 327.5h1M474 336.5h1M474 345.5h1M474 354.5h1M474 363.5h1M474 372.5h1M474 382.5h1M474 391.5h1M474 400.5h1M474 409.5h1M474 418.5h1M474 427.5h1M474 436.5h1M474 445.5h1M542 9.5h1M542 18.5h1M542 27.5h1M542 36.5h1M542 45.5h1M542 54.5h1M542 63.5h1M542 72.5h1M542 82.5h1M542 91.5h1M542 100.5h1M542 109.5h1M542 118.5h1M542 127.5h1M542 136.5h1M542 145.5h1M542 154.5h1M542 163.5h1M542 172.5h1M542 182.5h1M542 191.5h1M542 200.5h1M542 209.5h1M542 218.5h1M542 227.5h1M542 236.5h1M542 245.5h1M542 254.5h1M542 263.5h1M542 272.5h1M542 282.5h1M542 291.5h1M542 300.5h1M542 309.5h1M542 318.5h1M542 327.5h1M542 336.5h1M542 345.5h1M542 354.5h1M542 363.5h1M542 372.5h1M542 382.5h1M542 391.5h1M542 400.5h1M542 409.5h1M542 418.5h1M542 427.5h1M542 436.5h1M542 445.5h1M610 9.5h1M610 18.5h1M610 27.5h1M610 36.5h1M610 45.5h1M610 54.5h1M610 63.5h1M610 72.5h1M610 82.5h1M610 91.5h1M610 100.5h1M610 109.5h1M610 118.5h1M610 127.5h1M610 136.5h1M610 145.5h1M610 154.5h1M610 163.5h1M610 172.5h1M610 182.5h1M610 191.5h1M610 200.5h1M610 209.5h1M610 218.5h1M610 227.5h1M610 236.5h1M610 245.5h1M610 254.5h1M610 263.5h1M610 272.5h1M610 282.5h1M610 291.5h1M610 300.5h1M610 309.5h1M610 318.5h1M610 327.5h1M610 336.5h1M610 345.5h1M610 354.5h1M610 363.5h1M610 372.5h1M610 382.5h1M610 391.5h1M610 400.5h1M610 409.5h1M610 418.5h1M610 427.5h1M610 436.5h1M610 445.5h1" stroke="#a8a8a0" stroke-width="1" fill="none" opacity="0.8" shape-rendering="crispEdges"/><path d="M40 227.500H679" stroke="#c8c8b4" stroke-width="1" stroke-dasharray="6 5" fill="none" opacity="0.85" shape-rendering="crispEdges"/><path d="M339.500 39V442" stroke="#d6d6cc" stroke-width="1" stroke-dasharray="6 3" fill="none" shape-rendering="crispEdges"/><path d="M329 0H349L339 9.500Z" fill="#f28c1e"/><path d="M330 11H348V29.800H342.500L339 37L335.500 29.800H330Z" fill="#000" stroke="#f28c1e" stroke-width="2" stroke-linejoin="miter"/><text x="339" y="26" font-size="14.500" font-weight="bold" font-family="DejaVu Sans, sans-serif" fill="#f4a040" text-anchor="middle">T</text><path d="M6 214.500H27L38.500 227L27 239.500H6Q3.500 239.500 3.500 237V217Q3.500 214.500 6 214.500Z" fill="#b9bccb" stroke="#33333a" stroke-width="1.2"/><text x="20.500" y="230.500" font-size="9.500" font-family="DejaVu Sans, sans-serif" fill="#111" text-anchor="middle" letter-spacing="0.5">R 1</text><text x="674" y="49.7" font-size="12" font-family="DejaVu Sans, sans-serif" fill="#b2b2b2" text-anchor="end" stroke="#000" stroke-width="2.2" stroke-opacity="0.55" paint-order="stroke" stroke-linejoin="round">800 mV</text><text x="674" y="95.2" font-size="12" font-family="DejaVu Sans, sans-serif" fill="#b2b2b2" text-anchor="end" stroke="#000" stroke-width="2.2" stroke-opacity="0.55" paint-order="stroke" stroke-linejoin="round">600 mV</text><text x="674" y="140.6" font-size="12" font-family="DejaVu Sans, sans-serif" fill="#b2b2b2" text-anchor="end" stroke="#000" stroke-width="2.2" stroke-opacity="0.55" paint-order="stroke" stroke-linejoin="round">400 mV</text><text x="674" y="186.1" font-size="12" font-family="DejaVu Sans, sans-serif" fill="#b2b2b2" text-anchor="end" stroke="#000" stroke-width="2.2" stroke-opacity="0.55" paint-order="stroke" stroke-linejoin="round">200 mV</text><text x="674" y="231.5" font-size="12" font-family="DejaVu Sans, sans-serif" fill="#b2b2b2" text-anchor="end" stroke="#000" stroke-width="2.2" stroke-opacity="0.55" paint-order="stroke" stroke-linejoin="round">0 V</text><text x="674" y="276.9" font-size="12" font-family="DejaVu Sans, sans-serif" fill="#b2b2b2" text-anchor="end" stroke="#000" stroke-width="2.2" stroke-opacity="0.55" paint-order="stroke" stroke-linejoin="round">-200 mV</text><text x="674" y="322.4" font-size="12" font-family="DejaVu Sans, sans-serif" fill="#b2b2b2" text-anchor="end" stroke="#000" stroke-width="2.2" stroke-opacity="0.55" paint-order="stroke" stroke-linejoin="round">-400 mV</text><text x="674" y="367.9" font-size="12" font-family="DejaVu Sans, sans-serif" fill="#b2b2b2" text-anchor="end" stroke="#000" stroke-width="2.2" stroke-opacity="0.55" paint-order="stroke" stroke-linejoin="round">-600 mV</text><text x="674" y="413.3" font-size="12" font-family="DejaVu Sans, sans-serif" fill="#b2b2b2" text-anchor="end" stroke="#000" stroke-width="2.2" stroke-opacity="0.55" paint-order="stroke" stroke-linejoin="round">-800 mV</text><text x="67.4" y="447.5" font-size="12" font-family="DejaVu Sans, sans-serif" fill="#b2b2b2" text-anchor="middle" stroke="#000" stroke-width="2.2" stroke-opacity="0.55" paint-order="stroke" stroke-linejoin="round">-160 ns</text><text x="135.3" y="447.5" font-size="12" font-family="DejaVu Sans, sans-serif" fill="#b2b2b2" text-anchor="middle" stroke="#000" stroke-width="2.2" stroke-opacity="0.55" paint-order="stroke" stroke-linejoin="round">-120 ns</text><text x="203.2" y="447.5" font-size="12" font-family="DejaVu Sans, sans-serif" fill="#b2b2b2" text-anchor="middle" stroke="#000" stroke-width="2.2" stroke-opacity="0.55" paint-order="stroke" stroke-linejoin="round">-80 ns</text><text x="271.1" y="447.5" font-size="12" font-family="DejaVu Sans, sans-serif" fill="#b2b2b2" text-anchor="middle" stroke="#000" stroke-width="2.2" stroke-opacity="0.55" paint-order="stroke" stroke-linejoin="round">-40 ns</text><text x="339" y="447.5" font-size="12" font-family="DejaVu Sans, sans-serif" fill="#b2b2b2" text-anchor="middle" stroke="#000" stroke-width="2.2" stroke-opacity="0.55" paint-order="stroke" stroke-linejoin="round">0 s</text><text x="406.9" y="447.5" font-size="12" font-family="DejaVu Sans, sans-serif" fill="#b2b2b2" text-anchor="middle" stroke="#000" stroke-width="2.2" stroke-opacity="0.55" paint-order="stroke" stroke-linejoin="round">40 ns</text><text x="474.8" y="447.5" font-size="12" font-family="DejaVu Sans, sans-serif" fill="#b2b2b2" text-anchor="middle" stroke="#000" stroke-width="2.2" stroke-opacity="0.55" paint-order="stroke" stroke-linejoin="round">80 ns</text><text x="542.7" y="447.5" font-size="12" font-family="DejaVu Sans, sans-serif" fill="#b2b2b2" text-anchor="middle" stroke="#000" stroke-width="2.2" stroke-opacity="0.55" paint-order="stroke" stroke-linejoin="round">120 ns</text><text x="610.6" y="447.5" font-size="12" font-family="DejaVu Sans, sans-serif" fill="#b2b2b2" text-anchor="middle" stroke="#000" stroke-width="2.2" stroke-opacity="0.55" paint-order="stroke" stroke-linejoin="round">160 ns</text></svg><svg class="zi" viewBox="0 0 34 34"><path d="M0.5 0.5 H32 Q33.5 0.5 33.5 2 V33.5 Z" fill="#4f4f4f"/><circle cx="27" cy="7" r="4" fill="none" stroke="#a8a8a8" stroke-width="1.6"/><path d="M24 10 L18 15.5" stroke="#a8a8a8" stroke-width="2.6" stroke-linecap="round"/></svg></div></div>
<svg class="abs" style="left:1757px;top:496px" width="10" height="28"><circle cx="5" cy="5.500" r="2.200" fill="#d6d6d6"/><circle cx="5" cy="14" r="2.200" fill="#d6d6d6"/><circle cx="5" cy="22.500" r="2.200" fill="#d6d6d6"/></svg>
<div class="badge" style="left:3px;top:998px;width:90px;height:80px;background:#c9c9c9"><h4 style="background:#b4b8c8;color:#000;border-bottom:1px solid #a9a9ad;font-size:14px;padding-left:5px">Ref 1</h4><p style="left:7px;top:22px">200 mV/div</p><p style="left:7px;top:41px">20 GS/s</p><p style="left:7px;top:60px">RT-EyeTu…</p></div>
<div class="btn chb" style="left:618px"><i style="background:#f2e724"></i><b>1</b></div>
<div class="btn chb" style="left:663px"><i style="background:#22d6e6"></i><b>2</b></div>
<div class="btn chb" style="left:708px"><i style="background:#ee3a5c"></i><b>3</b></div>
<div class="btn chb" style="left:753px"><i style="background:#82d422"></i><b>4</b></div>
<div class="btn chb" style="left:798px"><i style="background:#f8921e"></i><b>5</b></div>
<div class="btn chb" style="left:843px"><i style="background:#2222c4"></i><b>6</b></div>
<div class="btn chb" style="left:888px"><i style="background:#f04cae"></i><b>7</b></div>
<div class="btn chb" style="left:933px"><i style="background:#10d292"></i><b>8</b></div>
<div class="vsep" style="left:983px"></div>
<div class="btn chb" style="left:994px"><i style="background:#f8921e"></i><em>Add<br>New<br>Math</em></div>
<div class="btn chb" style="left:1039px"><i style="background:#86b2f2"></i><em>Add<br>New<br>Ref</em></div>
<div class="btn chb" style="left:1084px"><i style="background:#d262f4"></i><em>Add<br>New<br>Bus</em></div>
<div class="vsep" style="left:1134px"></div>
<div class="btn chb" style="left:1145px"><i style="background:#4e4e4e"></i><u>DVM</u></div>
<div class="btn chb" style="left:1195px"><i style="background:#4e4e4e"></i><u>AFG</u></div>
<div class="vsep" style="left:1245px"></div>
<div class="badge" style="left:1256px;top:998px;width:225px;height:80px"><h4>Horizontal</h4><p style="left:7px;top:22px">40 ns/div</p><p style="left:113px;top:22px">400 ns</p><p style="left:7px;top:41px">SR: 6.25 GS/s</p><p style="left:113px;top:41px">160 ps/pt</p><p style="left:7px;top:60px">RL: 2.5 kpts</p><svg class="abs" style="left:112px;top:61px" width="12" height="14" viewBox="0 0 12 14"><path d="M1.5 1 H10.500 V9 L6 13 L1.5 9 Z" fill="#f08a1c"/><rect x="2.600" y="2" width="6.800" height="6.500" fill="#1a1208"/><text x="6" y="7.800" font-size="6.500" font-weight="bold" fill="#fff" text-anchor="middle" font-family="DejaVu Sans, sans-serif">T</text></svg><p style="left:132px;top:60px">50%</p></div>
<div class="badge" style="left:1491px;top:998px;width:160px;height:80px"><h4>Trigger</h4><span class="abs" style="left:7px;top:24px;width:30px;height:17px;border:1px solid #111;border-radius:6px;background:#f8f226;color:#000;font-size:13px;line-height:15px;text-align:center">1</span><svg class="abs" style="left:46px;top:25px" width="18" height="14" viewBox="0 0 18 14"><path d="M1 11.5 H5.500 L12.500 1.5 H17" stroke="#33337a" stroke-width="1.2" fill="none"/></svg><p style="left:73px;top:22px">0 V</p></div>
<div class="badge" style="left:1661px;top:998px;width:150px;height:80px"><h4>Acquisition</h4><p style="left:7px;top:22px">Auto,</p><p style="left:67px;top:22px">Analyze</p><p style="left:7px;top:41px">Sample: 8 bits</p><p style="left:7px;top:60px">3.352 kAcqs</p></div>
<div class="abs" style="left:1822px;top:998px;width:89px;height:36px;border-radius:6px;background:#11d604;border:1px solid #7c8a7c;color:#fff;font-weight:bold;font-family:DejaVu Sans Condensed,DejaVu Sans,sans-serif;font-size:12.500px;line-height:31px;text-align:center">Triggered</div>
<div id="rp"><div class="abs" style="left:0;width:148px;top:0px;text-align:center;font-weight:bold;font-family:DejaVu Sans Condensed,DejaVu Sans,sans-serif;font-size:14.500px;line-height:18px;color:#f2f2f2">Add New...</div><div class="btn rb" style="left:6px;top:26px;width:63px;height:37px;padding-top:9px">Cursors</div><div class="btn rb" style="left:77px;top:26px;width:63px;height:37px;padding-top:9px">Note</div><div class="btn rb" style="left:6px;top:71px;width:63px;height:37px;padding-top:9px">Measure</div><div class="btn rb" style="left:77px;top:71px;width:63px;height:37px;padding-top:9px">Search</div><div class="btn rb" style="left:6px;top:116px;width:63px;height:37px;padding-top:1px">Results<br>Table</div><div class="btn rb" style="left:77px;top:116px;width:63px;height:37px;padding-top:9px">Plot</div><div class="abs" style="left:3px;right:0;top:162px;height:1px;background:#5c5550"></div><div class="abs" style="left:3px;top:172px;width:145px;height:193px;border-radius:5px;background:#c9c9c9;overflow:hidden;color:#000"><div class="abs" style="left:0;top:0;right:0;height:18px;background:#000;color:#aebbe0;font-size:14px;line-height:19px;padding-left:5px">Meas 1</div><span class="abs" style="right:4px;top:4px;width:21px;height:10px;border-radius:2.500px;background:#c4c8d8;color:#111;font-size:8.500px;line-height:10px;text-align:center">R1</span><div class="abs" style="left:6px;top:22px;font-size:13.500px;line-height:19px;white-space:nowrap;-webkit-text-stroke:0.25px #000">Jitter Summary</div><div class="abs" style="left:6px;top:41px;font-size:13.500px;line-height:19px;white-space:nowrap;-webkit-text-stroke:0.25px #000">TIE(σ): 8.681 ps</div><div class="abs" style="left:6px;top:60px;font-size:13.500px;line-height:19px;white-space:nowrap;-webkit-text-stroke:0.25px #000">TJ@: 53.93 ps</div><div class="abs" style="left:6px;top:79px;font-size:13.500px;line-height:19px;white-space:nowrap;-webkit-text-stroke:0.25px #000">EW@: 346.1 ps</div><div class="abs" style="left:6px;top:98px;font-size:13.500px;line-height:19px;white-space:nowrap;-webkit-text-stroke:0.25px #000">RJ-δδ: 1.698 ps</div><div class="abs" style="left:6px;top:117px;font-size:13.500px;line-height:19px;white-space:nowrap;-webkit-text-stroke:0.25px #000">DJ-δδ: 30.16 ps</div><div class="abs" style="left:6px;top:136px;font-size:13.500px;line-height:19px;white-space:nowrap;-webkit-text-stroke:0.25px #000">PJ: 785.5 fs</div><div class="abs" style="left:6px;top:155px;font-size:13.500px;line-height:19px;white-space:nowrap;-webkit-text-stroke:0.25px #000">DDJ: 30.29 ps</div><div class="abs" style="left:6px;top:174px;font-size:13.500px;line-height:19px;white-space:nowrap;-webkit-text-stroke:0.25px #000">DCD: 2.289 ps</div></div><div class="abs" style="left:3px;right:0;top:916px;height:1px;background:#5c5550"></div><div class="btn" style="left:6px;top:925px;width:63px;height:37px"><svg class="abs" style="left:17px;top:5px" width="30" height="27" viewBox="0 0 30 27"><path d="M2 2 H17 M2 2 V17 M17 2 V7 M2 17 H7" stroke="#c8c8c8" stroke-width="1.6" stroke-dasharray="2 2.6" fill="none"/><circle cx="16" cy="15" r="5.200" fill="#8a8a8a" stroke="#d6d6d6" stroke-width="1.5"/><path d="M20 19.500 L25.500 24.500" stroke="#d6d6d6" stroke-width="3" stroke-linecap="round"/><path d="M20.500 20 L25 24" stroke="#555" stroke-width="1" stroke-linecap="round"/></svg></div><svg class="abs" style="left:98px;top:927px" width="30" height="34" viewBox="0 0 30 34"><ellipse cx="15" cy="6" rx="12.500" ry="4" fill="none" stroke="#d0d0d0" stroke-width="1.3"/><ellipse cx="15" cy="5.200" rx="9" ry="2.300" fill="none" stroke="#9a9a9a" stroke-width="1"/><path d="M2.500 6.500 L5 30 Q15 34.500 25 30 L27.500 6.500" fill="none" stroke="#d0d0d0" stroke-width="1.3"/><path d="M9.500 12 L10.500 29 M15 12.500 V30 M20.500 12 L19.500 29" stroke="#c0c0c0" stroke-width="1.2"/></svg></div>
</body></html>
